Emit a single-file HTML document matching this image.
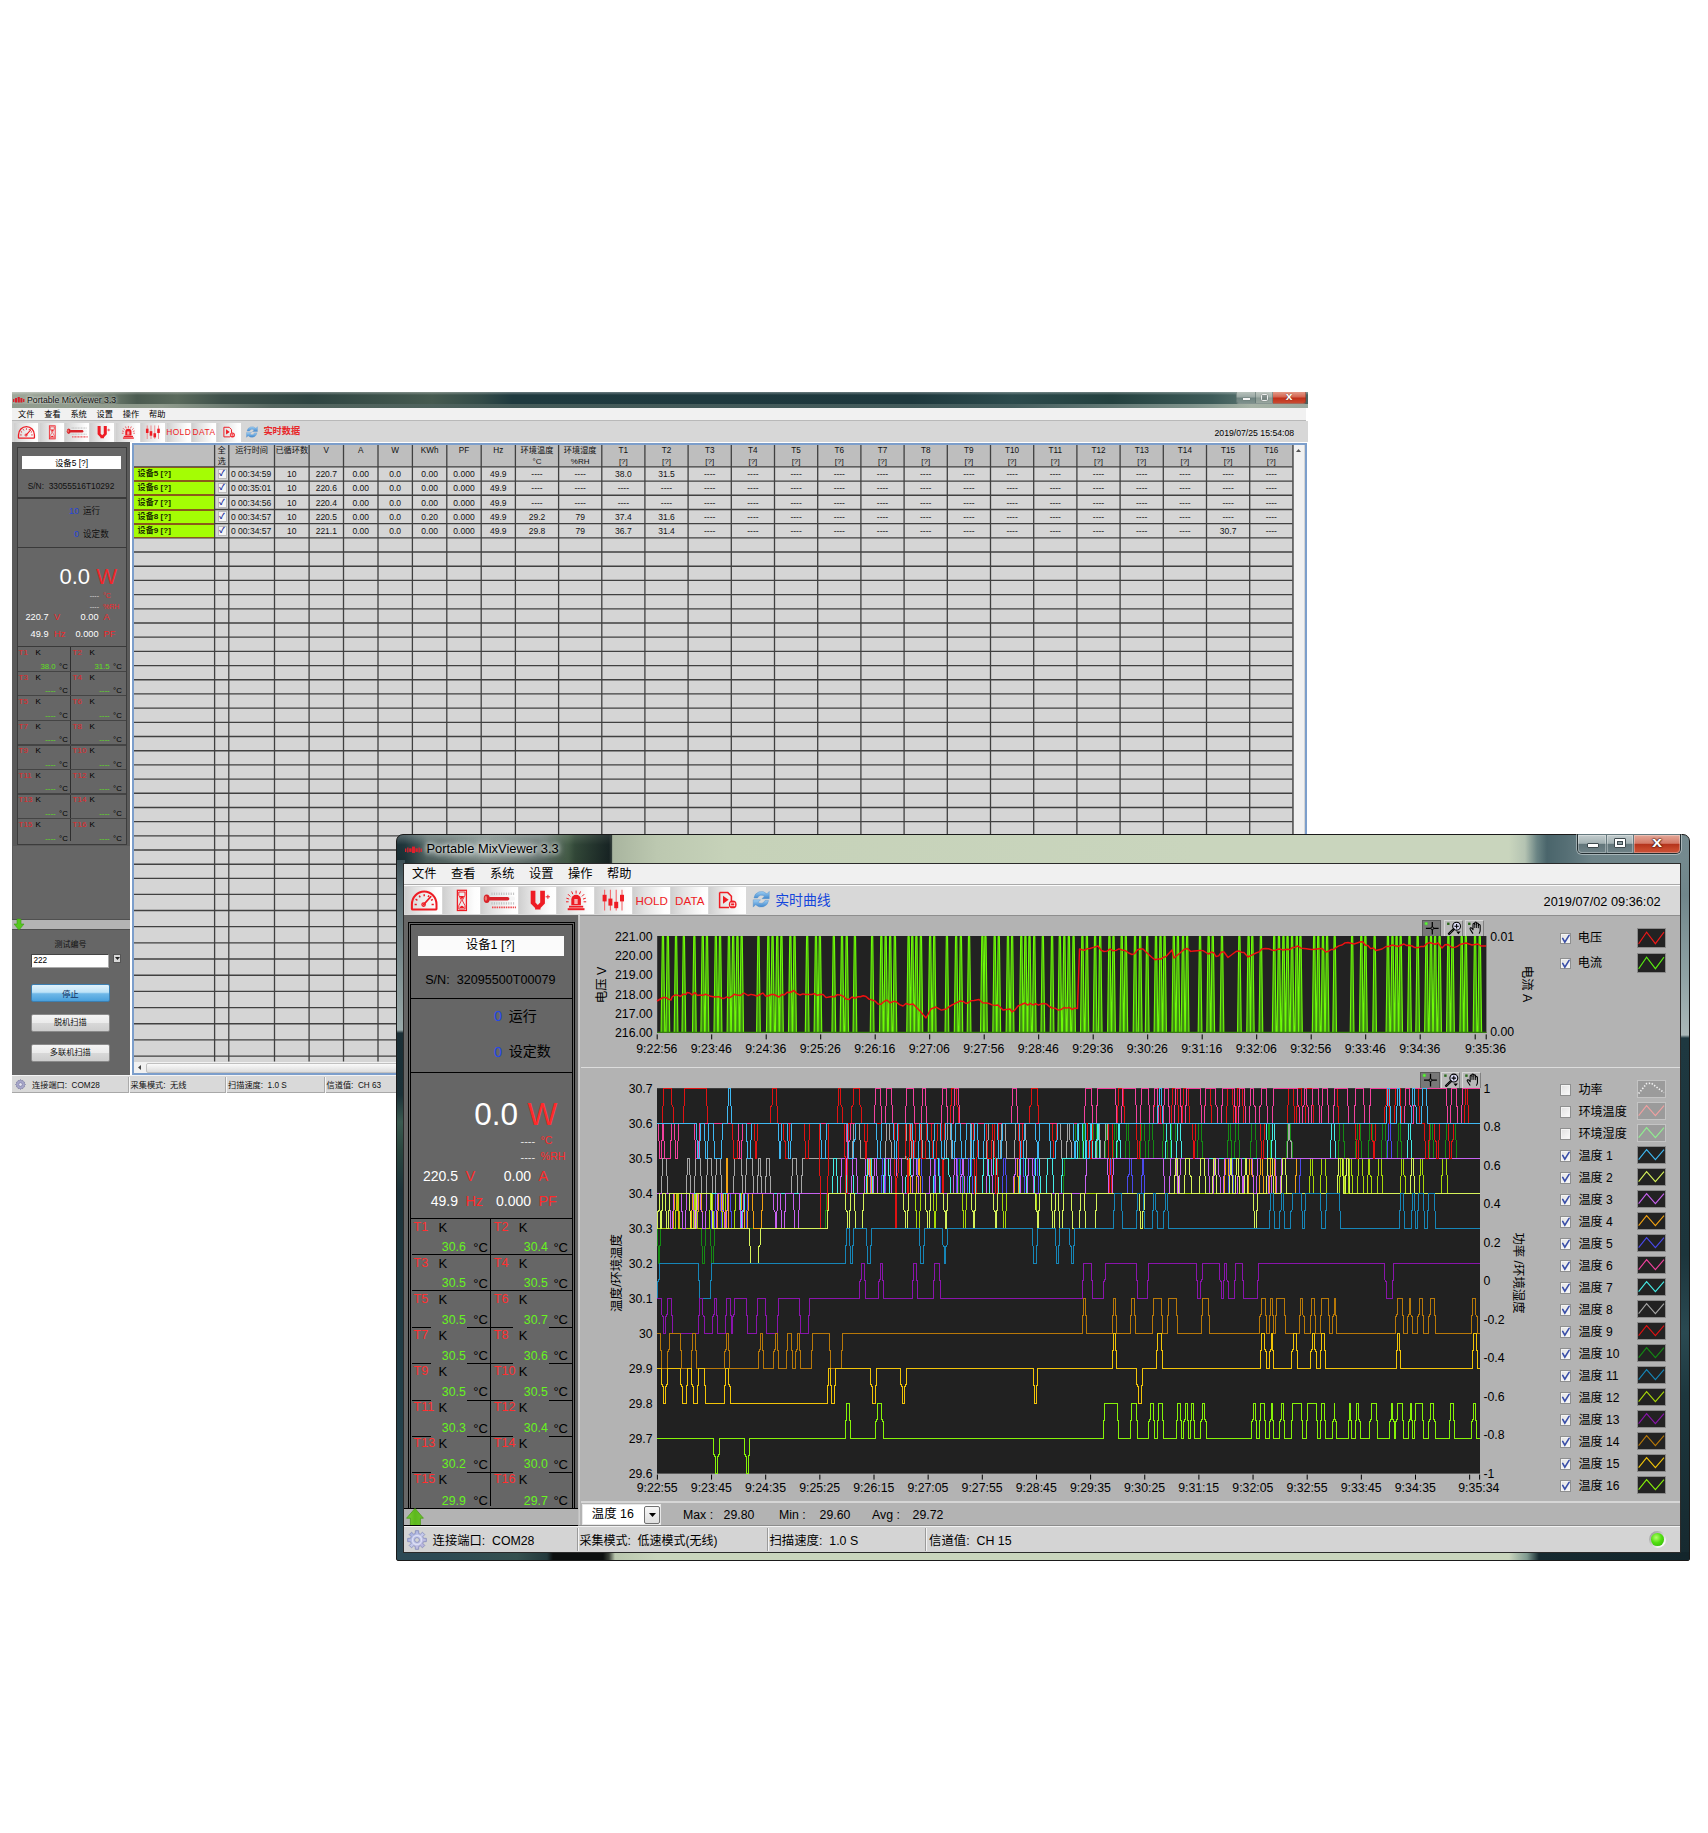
<!DOCTYPE html><html lang="zh"><head><meta charset="utf-8"><title>Portable MixViewer 3.3</title><style>

*{box-sizing:border-box;margin:0;padding:0}
html,body{width:1708px;height:1833px;background:#fff;overflow:hidden}
body{position:relative;font-family:"Liberation Sans","Noto Sans CJK SC",sans-serif;color:#000}
.a{position:absolute}
.t{position:absolute;white-space:nowrap;line-height:1}
.c{transform:translate(-50%,-50%)}
.l{transform:translate(0,-50%)}
.r{transform:translate(-100%,-50%)}
svg{position:absolute;overflow:visible}

</style></head><body>
<div id="back" class="a" style="left:0;top:0;width:1708px;height:1833px">
<div class="a" style="left:12px;top:392px;width:1295.5px;height:16px;background:linear-gradient(90deg,#a0a99b 0px,#8d978a 55px,#6c7a6c 100px,#4b5b50 125px,#5a6a5c 165px,#3e504a 210px,#2f4542 300px,#465a50 420px,#334b48 470px,#1f3a3f 500px,#1e383d 900px,#2c4a4c 1000px,#24413f 1100px,#3d5a58 1200px,#5a7470 1240px,#4a6260 1295px)"></div>
<div class="a" style="left:12px;top:392px;width:1295.5px;height:3px;background:linear-gradient(180deg,rgba(255,255,255,.35),rgba(255,255,255,0))"></div>
<svg style="left:13px;top:396px" width="12" height="8" viewBox="0 0 12 8"><g fill="#d8202c"><rect x="0" y="3" width="1.4" height="3"/><rect x="2" y="2" width="2" height="4.5"/><rect x="4.6" y="1" width="2.2" height="5.5"/><rect x="7.4" y="2" width="2" height="4.5"/><rect x="10" y="3" width="1.4" height="3"/></g></svg>
<span class="t l" style="left:27px;top:399.7px;font-size:8.7px;color:#111;text-shadow:0 0 3px rgba(255,255,255,.8),0 0 5px rgba(255,255,255,.6)">Portable MixViewer 3.3</span>
<div class="a" style="left:12px;top:403.6px;width:1295.5px;height:4.4px;background:linear-gradient(90deg,#8f9a8c 0px,#9aa596 150px,#5a6b64 260px,#4a5f5c 520px,#4a6262 1000px,#8a9c94 1180px,#b4beb0 1240px,#a8b4a8 1295px);opacity:.85"></div>
<div class="a" style="left:1236.4px;top:392px;width:19.2px;height:11.6px;background:linear-gradient(180deg,#b8c2bc 0%,#9aa8a4 45%,#6f8380 55%,#7d908c 100%);border:1px solid #52666480;border-top:0;border-radius:0 0 0 3px"></div>
<div class="a" style="left:1255.6px;top:392px;width:17.4px;height:11.6px;background:linear-gradient(180deg,#c0c8c2 0%,#a4b0aa 45%,#8a9a94 55%,#98a69e 100%);border:1px solid #52666480;border-top:0;border-left:0"></div>
<div class="a" style="left:1273px;top:392px;width:32.6px;height:11.6px;background:linear-gradient(180deg,#e39a88 0%,#d46450 45%,#c0301a 55%,#c84a30 100%);border:1px solid #6a3a3080;border-top:0;border-left:0;border-radius:0 0 3px 0"></div>
<div class="a" style="left:1242.6px;top:398px;width:7.4px;height:2.4px;background:#f4f4f4;box-shadow:0 0 1px #444"></div>
<div class="a" style="left:1260.6px;top:394.2px;width:7.4px;height:6.6px;border:1.7px solid #eee;border-radius:1.5px;box-shadow:0 0 1px #444;background:#66707080"></div>
<span class="t c" style="left:1289.4px;top:397.2px;font-size:10px;color:#fff;font-weight:bold;transform:translate(-50%,-50%) scale(1.2,1);text-shadow:0 0 1px #502018">x</span>
<div class="a" style="left:12px;top:408.2px;width:1294.1px;height:12.6px;background:#f1f1f1;border-bottom:1px solid #b8b8b8"></div>
<span class="t l" style="left:18px;top:414.9px;font-size:8.2px;color:#000;">文件</span>
<span class="t l" style="left:44.2px;top:414.9px;font-size:8.2px;color:#000;">查看</span>
<span class="t l" style="left:70.4px;top:414.9px;font-size:8.2px;color:#000;">系统</span>
<span class="t l" style="left:96.6px;top:414.9px;font-size:8.2px;color:#000;">设置</span>
<span class="t l" style="left:122.8px;top:414.9px;font-size:8.2px;color:#000;">操作</span>
<span class="t l" style="left:149px;top:414.9px;font-size:8.2px;color:#000;">帮助</span>
<div class="a" style="left:12px;top:420.6px;width:1295.5px;height:21.6px;background:#d7d7d7"></div>
<div class="a" style="left:14.4px;top:422.6px;width:24px;height:19px;background:linear-gradient(90deg,#cfcfcf 0%,#e2e2e2 30%,#fdfdfd 85%,#fff 100%)"></div>
<svg style="left:14.4px;top:422.6px" width="24" height="19" viewBox="0 0 37 27.3" preserveAspectRatio="xMidYMid meet"><path d="M6.9 21.9 V17.5 A11.6 12.3 0 0 1 31.5 17.5 V21.9 Q31.5 22.4 30.5 22.4 H7.9 Q6.9 22.4 6.9 21.9Z" fill="none" stroke="#ee1c24" stroke-width="2"/><path d="M18.6 17.6 L25.8 9.6" stroke="#ee1c24" stroke-width="1.6" stroke-linecap="round"/><circle cx="18.6" cy="17.6" r="1.7" fill="none" stroke="#ee1c24" stroke-width="1.3"/><path d="M9.6 17.4h2.2M10.6 12.2l1.8 1.1M14.2 8.6l1 1.8M19.2 7.2v2.1M24 8.3l-.9 1.7M27.8 12.3l-1.8 1.1M28.8 17.4h-2.2" stroke="#ee1c24" stroke-width="1.5" fill="none"/></svg>
<div class="a" style="left:39.75px;top:422.6px;width:24px;height:19px;background:linear-gradient(90deg,#cfcfcf 0%,#e2e2e2 30%,#fdfdfd 85%,#fff 100%)"></div>
<svg style="left:39.75px;top:422.6px" width="24" height="19" viewBox="0 0 37 27.3" preserveAspectRatio="xMidYMid meet"><rect x="14.4" y="3.3" width="9" height="20.2" fill="none" stroke="#ee1c24" stroke-width="1.3"/><path d="M15.8 5 h6.2 v3.2 l-2.4 4.6 v1.2 l2.4 4.6 v3.4 h-6.2 v-3.4 l2.4 -4.6 v-1.2 l-2.4 -4.6z" fill="none" stroke="#ee1c24" stroke-width=".9"/><path d="M16.6 9 h4.6 l-2.3 3.6z M16.4 21 q2.5 -4.6 5 0z" fill="#ee1c24"/></svg>
<div class="a" style="left:65.1px;top:422.6px;width:24px;height:19px;background:linear-gradient(90deg,#cfcfcf 0%,#e2e2e2 30%,#fdfdfd 85%,#fff 100%)"></div>
<svg style="left:65.1px;top:422.6px" width="24" height="19" viewBox="0 0 37 27.3" preserveAspectRatio="xMidYMid meet"><path d="M11 5.6v2.4M13.4 5.6v2.4M15.8 5.6v2.4M18.2 5.6v2.4M20.6 5.6v2.4M23 5.6v2.4M25.4 5.6v2.4M27.8 5.6v2.4M30.2 5.6v2.4M32.6 5.6v2.4M11 15.2v2.4M13.4 15.2v2.4M15.8 15.2v2.4M18.2 15.2v2.4M20.6 15.2v2.4M23 15.2v2.4M25.4 15.2v2.4M27.8 15.2v2.4M30.2 15.2v2.4M32.6 15.2v2.4" stroke="#b8b8b8" stroke-width=".9" fill="none"/><rect x="8" y="9.6" width="26" height="4.2" rx="2.1" fill="#f4f4f4"/><rect x="7" y="9.9" width="21.3" height="3.7" rx="1.8" fill="#d8232a"/><ellipse cx="5.7" cy="11.8" rx="3" ry="4.2" fill="#d8232a"/><ellipse cx="4.9" cy="11.4" rx="1.2" ry="2.4" fill="#ec7a70"/><path d="M11 20.3H35" stroke="#f0484e" stroke-width="1.8" stroke-dasharray="1.5 .8" fill="none"/></svg>
<div class="a" style="left:90.45px;top:422.6px;width:24px;height:19px;background:linear-gradient(90deg,#cfcfcf 0%,#e2e2e2 30%,#fdfdfd 85%,#fff 100%)"></div>
<svg style="left:90.45px;top:422.6px" width="24" height="19" viewBox="0 0 37 27.3" preserveAspectRatio="xMidYMid meet"><path d="M11.7 3.8 h4.7 v11.6 l2.4 2.6 l2.4 -2.6 V3.8 h4.7 V16.4 l-4.4 4.5 v1.6 h-5.4 v-1.6 L11.7 16.4z" fill="#ee1c24"/><path d="M26.6 9.8h4.4M28.9 7.8v4" stroke="#ee1c24" stroke-width="1" fill="none"/></svg>
<div class="a" style="left:115.8px;top:422.6px;width:24px;height:19px;background:linear-gradient(90deg,#cfcfcf 0%,#e2e2e2 30%,#fdfdfd 85%,#fff 100%)"></div>
<svg style="left:115.8px;top:422.6px" width="24" height="19" viewBox="0 0 37 27.3" preserveAspectRatio="xMidYMid meet"><path d="M14.3 18.2 v-5.6 a4.8 4.8 0 0 1 9.6 0 v5.6z" fill="#ee1c24"/><rect x="17.3" y="12" width="3.4" height="5" fill="#f8b0b0"/><rect x="12" y="18.8" width="14.2" height="1.8" fill="#ee1c24"/><rect x="10.7" y="21.2" width="16.8" height="2" fill="#ee1c24"/><path d="M19.1 3.6v3M14.6 4.4l1.2 2.8M23.6 4.4l-1.2 2.8M11 7.2l2.2 2.2M27.2 7.2l-2.2 2.2M9.4 11.2l2.8 .9M28.8 11.2l-2.8 .9M9 14.8h2.6M29.2 14.8h-2.6" stroke="#ee1c24" stroke-width="1" fill="none"/></svg>
<div class="a" style="left:141.15px;top:422.6px;width:24px;height:19px;background:linear-gradient(90deg,#cfcfcf 0%,#e2e2e2 30%,#fdfdfd 85%,#fff 100%)"></div>
<svg style="left:141.15px;top:422.6px" width="24" height="19" viewBox="0 0 37 27.3" preserveAspectRatio="xMidYMid meet"><path d="M9.6 2.8v20.8M15.4 2.8v20.8M21.2 2.8v20.8M27 2.8v20.8" stroke="#f4686c" stroke-width="1.1" fill="none"/><rect x="7.6" y="7.8" width="4" height="6.6" fill="#ee1c24"/><rect x="13.4" y="11.6" width="4" height="7" fill="#ee1c24"/><rect x="19.2" y="14.8" width="4" height="6.4" fill="#ee1c24"/><rect x="25" y="7.8" width="4" height="6.6" fill="#ee1c24"/></svg>
<div class="a" style="left:166.5px;top:422.6px;width:24px;height:19px;background:linear-gradient(90deg,#cfcfcf 0%,#e2e2e2 30%,#fdfdfd 85%,#fff 100%)"></div>
<span class="t c" style="left:178.7px;top:432.4px;font-size:8.4px;color:#ee1c24;letter-spacing:0.45px">HOLD</span>
<div class="a" style="left:191.85px;top:422.6px;width:24px;height:19px;background:linear-gradient(90deg,#cfcfcf 0%,#e2e2e2 30%,#fdfdfd 85%,#fff 100%)"></div>
<span class="t c" style="left:204.05px;top:432.4px;font-size:8.4px;color:#ee1c24;letter-spacing:0.45px">DATA</span>
<div class="a" style="left:217.2px;top:422.6px;width:24px;height:19px;background:linear-gradient(90deg,#cfcfcf 0%,#e2e2e2 30%,#fdfdfd 85%,#fff 100%)"></div>
<svg style="left:217.2px;top:422.6px" width="24" height="19" viewBox="0 0 37 27.3" preserveAspectRatio="xMidYMid meet"><path d="M10.6 5.6 h8.2 l3.6 3.6 v5 M10.6 5.6 v14.8 h9.4" fill="none" stroke="#ee1c24" stroke-width="1.5"/><path d="M14 8.8 l5.6 4 l-5.6 4z" fill="#ee1c24"/><circle cx="23.7" cy="17.4" r="3.9" fill="#ee1c24"/><rect x="21.7" y="16" width="4" height="2.8" fill="none" stroke="#fff" stroke-width=".8"/></svg>
<svg style="left:244.75px;top:424.9px" width="14" height="14" viewBox="0 0 22 22"><defs><linearGradient id="rg1" x1="0" y1="0" x2="0" y2="1"><stop offset="0" stop-color="#9fd0f4"/><stop offset="1" stop-color="#3f86cc"/></linearGradient></defs><path d="M3.2 9.6 A8 8 0 0 1 17 5.2 L19.6 2.6 V10.4 H11.8 L14.4 7.8 A4.6 4.6 0 0 0 7 9.6z" fill="url(#rg1)" stroke="#5a94cc" stroke-width=".5"/><path d="M18.8 12.4 A8 8 0 0 1 5 16.8 L2.4 19.4 V11.6 H10.2 L7.6 14.2 A4.6 4.6 0 0 0 15 12.4z" fill="url(#rg1)" stroke="#5a94cc" stroke-width=".5"/></svg>
<span class="t l" style="left:263.4px;top:432.4px;font-size:9.2px;color:#e8262a;font-weight:bold">实时数据</span>
<span class="t r" style="left:1294.2px;top:432.7px;font-size:8.7px;color:#000;">2019/07/25 15:54:08</span>
<div class="a" style="left:12px;top:442.2px;width:118px;height:476.8px;background:#5a5a5a"></div>
<div class="a" style="left:17.2px;top:447.4px;width:109.6px;height:398px;background:#666;border:1px solid #3c3c3c"></div>
<div class="a" style="left:13px;top:846px;width:116.5px;height:73px;background:#666"></div>
<div class="a" style="left:22.3px;top:456.2px;width:98.4px;height:13.2px;background:#fff"></div>
<span class="t c" style="left:71.5px;top:463px;font-size:8.4px;color:#000;">设备5 [?]</span>
<span class="t c" style="left:71px;top:485.8px;font-size:8.4px;color:#111;">S/N:&nbsp; 33055516T10292</span>
<div class="a" style="left:17.2px;top:497.4px;width:109.6px;height:1.2px;background:#3a3a3a"></div>
<span class="t r" style="left:79px;top:510.6px;font-size:9px;color:#2545d8;">10</span>
<span class="t l" style="left:83px;top:510.6px;font-size:8.6px;color:#111;">运行</span>
<span class="t r" style="left:79px;top:534.2px;font-size:9px;color:#2545d8;">0</span>
<span class="t l" style="left:83px;top:534.2px;font-size:8.6px;color:#111;">设定数</span>
<div class="a" style="left:17.2px;top:547.2px;width:109.6px;height:1.2px;background:#3a3a3a"></div>
<span class="t r" style="left:90px;top:577px;font-size:22px;color:#fff;">0.0</span>
<span class="t l" style="left:96.2px;top:577px;font-size:22px;color:#f0262a;">W</span>
<span class="t r" style="left:99px;top:595.3px;font-size:7px;color:#ddd;">----</span>
<span class="t l" style="left:103px;top:594.6px;font-size:7px;color:#f0262a;">°C</span>
<span class="t r" style="left:99px;top:606px;font-size:7px;color:#ddd;">----</span>
<span class="t l" style="left:103px;top:605.5px;font-size:7px;color:#f0262a;">%RH</span>
<span class="t r" style="left:48.5px;top:618.3px;font-size:9.2px;color:#fff;">220.7</span>
<span class="t l" style="left:54px;top:618.3px;font-size:9.2px;color:#f0262a;">V</span>
<span class="t r" style="left:98.5px;top:618.3px;font-size:9.2px;color:#fff;">0.00</span>
<span class="t l" style="left:103.5px;top:618.3px;font-size:9.2px;color:#f0262a;">A</span>
<span class="t r" style="left:48.5px;top:635.4px;font-size:9.2px;color:#fff;">49.9</span>
<span class="t l" style="left:54px;top:635.4px;font-size:9.2px;color:#f0262a;">Hz</span>
<span class="t r" style="left:98.5px;top:635.4px;font-size:9.2px;color:#fff;">0.000</span>
<span class="t l" style="left:103.5px;top:635.4px;font-size:9.2px;color:#f0262a;">PF</span>
<div class="a" style="left:17.2px;top:646.2px;width:109.6px;height:1.2px;background:#3a3a3a"></div>
<div class="a" style="left:70px;top:646.8px;width:1.2px;height:194.24px;background:#2e2e2e"></div>
<span class="t l" style="left:18.6px;top:653.1px;font-size:8px;color:#e0262a;">T1</span>
<span class="t l" style="left:35.6px;top:653.1px;font-size:8px;color:#000;">K</span>
<span class="t r" style="left:55.6px;top:666.8px;font-size:7.8px;color:#5fe020;">38.0</span>
<span class="t l" style="left:59.1px;top:666.8px;font-size:7.8px;color:#000;">°C</span>
<span class="t l" style="left:72.6px;top:653.1px;font-size:8px;color:#e0262a;">T2</span>
<span class="t l" style="left:89.6px;top:653.1px;font-size:8px;color:#000;">K</span>
<span class="t r" style="left:109.6px;top:666.8px;font-size:7.8px;color:#5fe020;">31.5</span>
<span class="t l" style="left:113.1px;top:666.8px;font-size:7.8px;color:#000;">°C</span>
<div class="a" style="left:18px;top:670.73px;width:108px;height:1.2px;background:#444"></div>
<span class="t l" style="left:18.6px;top:677.63px;font-size:8px;color:#e0262a;">T3</span>
<span class="t l" style="left:35.6px;top:677.63px;font-size:8px;color:#000;">K</span>
<span class="t r" style="left:55.6px;top:691.33px;font-size:7.8px;color:#5fe020;">----</span>
<span class="t l" style="left:59.1px;top:691.33px;font-size:7.8px;color:#000;">°C</span>
<span class="t l" style="left:72.6px;top:677.63px;font-size:8px;color:#e0262a;">T4</span>
<span class="t l" style="left:89.6px;top:677.63px;font-size:8px;color:#000;">K</span>
<span class="t r" style="left:109.6px;top:691.33px;font-size:7.8px;color:#5fe020;">----</span>
<span class="t l" style="left:113.1px;top:691.33px;font-size:7.8px;color:#000;">°C</span>
<div class="a" style="left:18px;top:695.26px;width:108px;height:1.2px;background:#444"></div>
<span class="t l" style="left:18.6px;top:702.16px;font-size:8px;color:#e0262a;">T5</span>
<span class="t l" style="left:35.6px;top:702.16px;font-size:8px;color:#000;">K</span>
<span class="t r" style="left:55.6px;top:715.86px;font-size:7.8px;color:#5fe020;">----</span>
<span class="t l" style="left:59.1px;top:715.86px;font-size:7.8px;color:#000;">°C</span>
<span class="t l" style="left:72.6px;top:702.16px;font-size:8px;color:#e0262a;">T6</span>
<span class="t l" style="left:89.6px;top:702.16px;font-size:8px;color:#000;">K</span>
<span class="t r" style="left:109.6px;top:715.86px;font-size:7.8px;color:#5fe020;">----</span>
<span class="t l" style="left:113.1px;top:715.86px;font-size:7.8px;color:#000;">°C</span>
<div class="a" style="left:18px;top:719.79px;width:108px;height:1.2px;background:#444"></div>
<span class="t l" style="left:18.6px;top:726.69px;font-size:8px;color:#e0262a;">T7</span>
<span class="t l" style="left:35.6px;top:726.69px;font-size:8px;color:#000;">K</span>
<span class="t r" style="left:55.6px;top:740.39px;font-size:7.8px;color:#5fe020;">----</span>
<span class="t l" style="left:59.1px;top:740.39px;font-size:7.8px;color:#000;">°C</span>
<span class="t l" style="left:72.6px;top:726.69px;font-size:8px;color:#e0262a;">T8</span>
<span class="t l" style="left:89.6px;top:726.69px;font-size:8px;color:#000;">K</span>
<span class="t r" style="left:109.6px;top:740.39px;font-size:7.8px;color:#5fe020;">----</span>
<span class="t l" style="left:113.1px;top:740.39px;font-size:7.8px;color:#000;">°C</span>
<div class="a" style="left:18px;top:744.32px;width:108px;height:1.2px;background:#444"></div>
<span class="t l" style="left:18.6px;top:751.22px;font-size:8px;color:#e0262a;">T9</span>
<span class="t l" style="left:35.6px;top:751.22px;font-size:8px;color:#000;">K</span>
<span class="t r" style="left:55.6px;top:764.92px;font-size:7.8px;color:#5fe020;">----</span>
<span class="t l" style="left:59.1px;top:764.92px;font-size:7.8px;color:#000;">°C</span>
<span class="t l" style="left:72.6px;top:751.22px;font-size:8px;color:#e0262a;">T10</span>
<span class="t l" style="left:89.6px;top:751.22px;font-size:8px;color:#000;">K</span>
<span class="t r" style="left:109.6px;top:764.92px;font-size:7.8px;color:#5fe020;">----</span>
<span class="t l" style="left:113.1px;top:764.92px;font-size:7.8px;color:#000;">°C</span>
<div class="a" style="left:18px;top:768.85px;width:108px;height:1.2px;background:#444"></div>
<span class="t l" style="left:18.6px;top:775.75px;font-size:8px;color:#e0262a;">T11</span>
<span class="t l" style="left:35.6px;top:775.75px;font-size:8px;color:#000;">K</span>
<span class="t r" style="left:55.6px;top:789.45px;font-size:7.8px;color:#5fe020;">----</span>
<span class="t l" style="left:59.1px;top:789.45px;font-size:7.8px;color:#000;">°C</span>
<span class="t l" style="left:72.6px;top:775.75px;font-size:8px;color:#e0262a;">T12</span>
<span class="t l" style="left:89.6px;top:775.75px;font-size:8px;color:#000;">K</span>
<span class="t r" style="left:109.6px;top:789.45px;font-size:7.8px;color:#5fe020;">----</span>
<span class="t l" style="left:113.1px;top:789.45px;font-size:7.8px;color:#000;">°C</span>
<div class="a" style="left:18px;top:793.38px;width:108px;height:1.2px;background:#444"></div>
<span class="t l" style="left:18.6px;top:800.28px;font-size:8px;color:#e0262a;">T13</span>
<span class="t l" style="left:35.6px;top:800.28px;font-size:8px;color:#000;">K</span>
<span class="t r" style="left:55.6px;top:813.98px;font-size:7.8px;color:#5fe020;">----</span>
<span class="t l" style="left:59.1px;top:813.98px;font-size:7.8px;color:#000;">°C</span>
<span class="t l" style="left:72.6px;top:800.28px;font-size:8px;color:#e0262a;">T14</span>
<span class="t l" style="left:89.6px;top:800.28px;font-size:8px;color:#000;">K</span>
<span class="t r" style="left:109.6px;top:813.98px;font-size:7.8px;color:#5fe020;">----</span>
<span class="t l" style="left:113.1px;top:813.98px;font-size:7.8px;color:#000;">°C</span>
<div class="a" style="left:18px;top:817.91px;width:108px;height:1.2px;background:#444"></div>
<span class="t l" style="left:18.6px;top:824.81px;font-size:8px;color:#e0262a;">T15</span>
<span class="t l" style="left:35.6px;top:824.81px;font-size:8px;color:#000;">K</span>
<span class="t r" style="left:55.6px;top:838.51px;font-size:7.8px;color:#5fe020;">----</span>
<span class="t l" style="left:59.1px;top:838.51px;font-size:7.8px;color:#000;">°C</span>
<span class="t l" style="left:72.6px;top:824.81px;font-size:8px;color:#e0262a;">T16</span>
<span class="t l" style="left:89.6px;top:824.81px;font-size:8px;color:#000;">K</span>
<span class="t r" style="left:109.6px;top:838.51px;font-size:7.8px;color:#5fe020;">----</span>
<span class="t l" style="left:113.1px;top:838.51px;font-size:7.8px;color:#000;">°C</span>
<div class="a" style="left:12px;top:919px;width:118px;height:11px;background:#b4b4b4;border-top:1px solid #505050;border-bottom:1px solid #505050"></div>
<svg style="left:14px;top:918.5px" width="10" height="11" viewBox="0 0 10 11"><path d="M3 0h4v5h3l-5 6-5-6h3z" fill="#55c81e" stroke="#3a9a10" stroke-width=".6"/></svg>
<div class="a" style="left:12px;top:930px;width:118px;height:145px;background:#666"></div>
<span class="t c" style="left:70.5px;top:945.3px;font-size:8px;color:#111;">测试编号</span>
<div class="a" style="left:30.5px;top:953.6px;width:78px;height:14.4px;background:#fff;border:1.2px solid #444;border-right-color:#aaa;border-bottom-color:#aaa"></div>
<span class="t l" style="left:33.5px;top:961.4px;font-size:8.2px;color:#000;">222</span>
<div class="a" style="left:112.5px;top:953.8px;width:8.6px;height:9px;background:#d8d8d8;border:1px solid #555"></div>
<svg style="left:114.5px;top:957px" width="5" height="3" viewBox="0 0 5 3"><path d="M0 0h5L2.5 3z" fill="#222"/></svg>
<div class="a" style="left:30.6px;top:983.8px;width:79px;height:18px;background:linear-gradient(180deg,#dff1fb 0%,#bfe3f7 45%,#6fb8e8 55%,#4aa0dc 100%);border:1px solid #3c7fb1;border-radius:2px"></div>
<span class="t c" style="left:70.3px;top:993.6px;font-size:8.4px;color:#103060;">停止</span>
<div class="a" style="left:30.6px;top:1013.5px;width:79px;height:18px;background:linear-gradient(180deg,#f4f4f4 0%,#ebebeb 48%,#d8d8d8 52%,#cdcdcd 100%);border:1px solid #8a8a8a;border-radius:2px"></div>
<span class="t c" style="left:70.3px;top:1023.1px;font-size:8.2px;color:#111;">脱机扫描</span>
<div class="a" style="left:30.6px;top:1043.6px;width:79px;height:18px;background:linear-gradient(180deg,#f4f4f4 0%,#ebebeb 48%,#d8d8d8 52%,#cdcdcd 100%);border:1px solid #8a8a8a;border-radius:2px"></div>
<span class="t c" style="left:70.3px;top:1053.2px;font-size:8.2px;color:#111;">多联机扫描</span>
<div class="a" style="left:131.6px;top:442.6px;width:1175.3px;height:632.6px;background:#d5d5d5;border:2.4px solid #7c9ecb"></div>
<div class="a" style="left:134px;top:445px;width:1159px;height:22px;background:#bebebe"></div>
<div class="a" style="left:1293.2px;top:445px;width:11.3px;height:616.8px;background:#f1f1f1"></div>
<svg style="left:1296.3px;top:449px" width="5" height="3" viewBox="0 0 5 3"><path d="M0 3h5L2.5 0z" fill="#555"/></svg>
<div class="a" style="left:134px;top:1061.8px;width:1170.5px;height:11px;background:#f1f1f1"></div>
<div class="a" style="left:146px;top:1063px;width:1158px;height:9.6px;background:linear-gradient(180deg,#fafafa,#dcdcdc);border:1px solid #c0c0c0;border-radius:2px"></div>
<svg style="left:137.5px;top:1065px" width="3" height="5" viewBox="0 0 3 5"><path d="M3 0v5L0 2.5z" fill="#444"/></svg>
<svg style="left:0;top:0" width="1708" height="1833"><path d="M134 466.9H1293M134 481.09H1293M134 495.28H1293M134 509.47H1293M134 523.66H1293M134 537.85H1293M134 552.04H1293M134 566.23H1293M134 580.42H1293M134 594.61H1293M134 608.8H1293M134 622.99H1293M134 637.18H1293M134 651.37H1293M134 665.56H1293M134 679.75H1293M134 693.94H1293M134 708.13H1293M134 722.32H1293M134 736.51H1293M134 750.7H1293M134 764.89H1293M134 779.08H1293M134 793.27H1293M134 807.46H1293M134 821.65H1293M134 835.84H1293M134 850.03H1293M134 864.22H1293M134 878.41H1293M134 894.3H1293M134 910.48H1293M134 926.66H1293M134 942.84H1293M134 959.02H1293M134 975.2H1293M134 991.38H1293M134 1007.56H1293M134 1023.74H1293M134 1039.92H1293M134 1056.1H1293" stroke="#404040" stroke-width="1.35" fill="none"/><path d="M214.6 445V1061.6M228.8 445V1061.6M274.5 445V1061.6M309.1 445V1061.6M343.5 445V1061.6M378 445V1061.6M412.4 445V1061.6M446.8 445V1061.6M481.2 445V1061.6M515.4 445V1061.6M558.6 445V1061.6M601.8 445V1061.6M644.9 445V1061.6M688.1 445V1061.6M731.3 445V1061.6M774.5 445V1061.6M817.7 445V1061.6M860.9 445V1061.6M904.1 445V1061.6M947.3 445V1061.6M990.5 445V1061.6M1033.7 445V1061.6M1076.9 445V1061.6M1120.1 445V1061.6M1163.3 445V1061.6M1206.5 445V1061.6M1249.7 445V1061.6M1292.9 445V1061.6" stroke="#404040" stroke-width="1.3" fill="none"/><path d="M1293 445V1061.6" stroke="#666" stroke-width="1" fill="none"/></svg>
<span class="t c" style="left:221.7px;top:450.8px;font-size:8.2px;color:#111;">全</span>
<span class="t c" style="left:221.7px;top:461.6px;font-size:8px;color:#111;">选</span>
<span class="t c" style="left:251.65px;top:450.8px;font-size:8.2px;color:#111;">运行时间</span>
<span class="t c" style="left:291.8px;top:450.8px;font-size:8.2px;color:#111;">已循环数</span>
<span class="t c" style="left:326.3px;top:450.8px;font-size:8.2px;color:#111;">V</span>
<span class="t c" style="left:360.75px;top:450.8px;font-size:8.2px;color:#111;">A</span>
<span class="t c" style="left:395.2px;top:450.8px;font-size:8.2px;color:#111;">W</span>
<span class="t c" style="left:429.6px;top:450.8px;font-size:8.2px;color:#111;">KWh</span>
<span class="t c" style="left:464px;top:450.8px;font-size:8.2px;color:#111;">PF</span>
<span class="t c" style="left:498.3px;top:450.8px;font-size:8.2px;color:#111;">Hz</span>
<span class="t c" style="left:537px;top:450.8px;font-size:8.2px;color:#111;">环境温度</span>
<span class="t c" style="left:537px;top:461.6px;font-size:8px;color:#111;">°C</span>
<span class="t c" style="left:580.2px;top:450.8px;font-size:8.2px;color:#111;">环境湿度</span>
<span class="t c" style="left:580.2px;top:461.6px;font-size:8px;color:#111;">%RH</span>
<span class="t c" style="left:623.35px;top:450.8px;font-size:8.2px;color:#111;">T1</span>
<span class="t c" style="left:623.35px;top:461.6px;font-size:8px;color:#111;">[?]</span>
<span class="t c" style="left:666.5px;top:450.8px;font-size:8.2px;color:#111;">T2</span>
<span class="t c" style="left:666.5px;top:461.6px;font-size:8px;color:#111;">[?]</span>
<span class="t c" style="left:709.7px;top:450.8px;font-size:8.2px;color:#111;">T3</span>
<span class="t c" style="left:709.7px;top:461.6px;font-size:8px;color:#111;">[?]</span>
<span class="t c" style="left:752.9px;top:450.8px;font-size:8.2px;color:#111;">T4</span>
<span class="t c" style="left:752.9px;top:461.6px;font-size:8px;color:#111;">[?]</span>
<span class="t c" style="left:796.1px;top:450.8px;font-size:8.2px;color:#111;">T5</span>
<span class="t c" style="left:796.1px;top:461.6px;font-size:8px;color:#111;">[?]</span>
<span class="t c" style="left:839.3px;top:450.8px;font-size:8.2px;color:#111;">T6</span>
<span class="t c" style="left:839.3px;top:461.6px;font-size:8px;color:#111;">[?]</span>
<span class="t c" style="left:882.5px;top:450.8px;font-size:8.2px;color:#111;">T7</span>
<span class="t c" style="left:882.5px;top:461.6px;font-size:8px;color:#111;">[?]</span>
<span class="t c" style="left:925.7px;top:450.8px;font-size:8.2px;color:#111;">T8</span>
<span class="t c" style="left:925.7px;top:461.6px;font-size:8px;color:#111;">[?]</span>
<span class="t c" style="left:968.9px;top:450.8px;font-size:8.2px;color:#111;">T9</span>
<span class="t c" style="left:968.9px;top:461.6px;font-size:8px;color:#111;">[?]</span>
<span class="t c" style="left:1012.1px;top:450.8px;font-size:8.2px;color:#111;">T10</span>
<span class="t c" style="left:1012.1px;top:461.6px;font-size:8px;color:#111;">[?]</span>
<span class="t c" style="left:1055.3px;top:450.8px;font-size:8.2px;color:#111;">T11</span>
<span class="t c" style="left:1055.3px;top:461.6px;font-size:8px;color:#111;">[?]</span>
<span class="t c" style="left:1098.5px;top:450.8px;font-size:8.2px;color:#111;">T12</span>
<span class="t c" style="left:1098.5px;top:461.6px;font-size:8px;color:#111;">[?]</span>
<span class="t c" style="left:1141.7px;top:450.8px;font-size:8.2px;color:#111;">T13</span>
<span class="t c" style="left:1141.7px;top:461.6px;font-size:8px;color:#111;">[?]</span>
<span class="t c" style="left:1184.9px;top:450.8px;font-size:8.2px;color:#111;">T14</span>
<span class="t c" style="left:1184.9px;top:461.6px;font-size:8px;color:#111;">[?]</span>
<span class="t c" style="left:1228.1px;top:450.8px;font-size:8.2px;color:#111;">T15</span>
<span class="t c" style="left:1228.1px;top:461.6px;font-size:8px;color:#111;">[?]</span>
<span class="t c" style="left:1271.3px;top:450.8px;font-size:8.2px;color:#111;">T16</span>
<span class="t c" style="left:1271.3px;top:461.6px;font-size:8px;color:#111;">[?]</span>
<div class="a" style="left:134px;top:467.1px;width:80px;height:14.2px;background:#a4fd04;border-top:1.1px solid #8a5a1a;border-bottom:1.1px solid #8a5a1a"></div>
<span class="t l" style="left:137.6px;top:474.2px;font-size:8.1px;color:#1a2a00;font-weight:bold">设备5 [?]</span>
<div class="a" style="left:217.5px;top:468.9px;width:9px;height:10.4px;background:#f4f4f4;border:1px solid #bbb"></div>
<span class="t c" style="left:222px;top:474.2px;font-size:8px;color:#1a2a9a;font-weight:bold">✓</span>
<span class="t l" style="left:231px;top:474.2px;font-size:8.5px;color:#111;">0 00:34:59</span>
<span class="t c" style="left:291.8px;top:474.2px;font-size:8.5px;color:#111;">10</span>
<span class="t c" style="left:326.3px;top:474.2px;font-size:8.5px;color:#111;">220.7</span>
<span class="t c" style="left:360.75px;top:474.2px;font-size:8.5px;color:#111;">0.00</span>
<span class="t c" style="left:395.2px;top:474.2px;font-size:8.5px;color:#111;">0.0</span>
<span class="t c" style="left:429.6px;top:474.2px;font-size:8.5px;color:#111;">0.00</span>
<span class="t c" style="left:464px;top:474.2px;font-size:8.5px;color:#111;">0.000</span>
<span class="t c" style="left:498.3px;top:474.2px;font-size:8.5px;color:#111;">49.9</span>
<span class="t c" style="left:537px;top:474.2px;font-size:8.5px;color:#111;">----</span>
<span class="t c" style="left:580.2px;top:474.2px;font-size:8.5px;color:#111;">----</span>
<span class="t c" style="left:623.35px;top:474.2px;font-size:8.5px;color:#111;">38.0</span>
<span class="t c" style="left:666.5px;top:474.2px;font-size:8.5px;color:#111;">31.5</span>
<span class="t c" style="left:709.7px;top:474.2px;font-size:8.5px;color:#111;">----</span>
<span class="t c" style="left:752.9px;top:474.2px;font-size:8.5px;color:#111;">----</span>
<span class="t c" style="left:796.1px;top:474.2px;font-size:8.5px;color:#111;">----</span>
<span class="t c" style="left:839.3px;top:474.2px;font-size:8.5px;color:#111;">----</span>
<span class="t c" style="left:882.5px;top:474.2px;font-size:8.5px;color:#111;">----</span>
<span class="t c" style="left:925.7px;top:474.2px;font-size:8.5px;color:#111;">----</span>
<span class="t c" style="left:968.9px;top:474.2px;font-size:8.5px;color:#111;">----</span>
<span class="t c" style="left:1012.1px;top:474.2px;font-size:8.5px;color:#111;">----</span>
<span class="t c" style="left:1055.3px;top:474.2px;font-size:8.5px;color:#111;">----</span>
<span class="t c" style="left:1098.5px;top:474.2px;font-size:8.5px;color:#111;">----</span>
<span class="t c" style="left:1141.7px;top:474.2px;font-size:8.5px;color:#111;">----</span>
<span class="t c" style="left:1184.9px;top:474.2px;font-size:8.5px;color:#111;">----</span>
<span class="t c" style="left:1228.1px;top:474.2px;font-size:8.5px;color:#111;">----</span>
<span class="t c" style="left:1271.3px;top:474.2px;font-size:8.5px;color:#111;">----</span>
<div class="a" style="left:134px;top:481.29px;width:80px;height:14.2px;background:#a4fd04;border-top:1.1px solid #8a5a1a;border-bottom:1.1px solid #8a5a1a"></div>
<span class="t l" style="left:137.6px;top:488.39px;font-size:8.1px;color:#1a2a00;font-weight:bold">设备6 [?]</span>
<div class="a" style="left:217.5px;top:483.09px;width:9px;height:10.4px;background:#f4f4f4;border:1px solid #bbb"></div>
<span class="t c" style="left:222px;top:488.39px;font-size:8px;color:#1a2a9a;font-weight:bold">✓</span>
<span class="t l" style="left:231px;top:488.39px;font-size:8.5px;color:#111;">0 00:35:01</span>
<span class="t c" style="left:291.8px;top:488.39px;font-size:8.5px;color:#111;">10</span>
<span class="t c" style="left:326.3px;top:488.39px;font-size:8.5px;color:#111;">220.6</span>
<span class="t c" style="left:360.75px;top:488.39px;font-size:8.5px;color:#111;">0.00</span>
<span class="t c" style="left:395.2px;top:488.39px;font-size:8.5px;color:#111;">0.0</span>
<span class="t c" style="left:429.6px;top:488.39px;font-size:8.5px;color:#111;">0.00</span>
<span class="t c" style="left:464px;top:488.39px;font-size:8.5px;color:#111;">0.000</span>
<span class="t c" style="left:498.3px;top:488.39px;font-size:8.5px;color:#111;">49.9</span>
<span class="t c" style="left:537px;top:488.39px;font-size:8.5px;color:#111;">----</span>
<span class="t c" style="left:580.2px;top:488.39px;font-size:8.5px;color:#111;">----</span>
<span class="t c" style="left:623.35px;top:488.39px;font-size:8.5px;color:#111;">----</span>
<span class="t c" style="left:666.5px;top:488.39px;font-size:8.5px;color:#111;">----</span>
<span class="t c" style="left:709.7px;top:488.39px;font-size:8.5px;color:#111;">----</span>
<span class="t c" style="left:752.9px;top:488.39px;font-size:8.5px;color:#111;">----</span>
<span class="t c" style="left:796.1px;top:488.39px;font-size:8.5px;color:#111;">----</span>
<span class="t c" style="left:839.3px;top:488.39px;font-size:8.5px;color:#111;">----</span>
<span class="t c" style="left:882.5px;top:488.39px;font-size:8.5px;color:#111;">----</span>
<span class="t c" style="left:925.7px;top:488.39px;font-size:8.5px;color:#111;">----</span>
<span class="t c" style="left:968.9px;top:488.39px;font-size:8.5px;color:#111;">----</span>
<span class="t c" style="left:1012.1px;top:488.39px;font-size:8.5px;color:#111;">----</span>
<span class="t c" style="left:1055.3px;top:488.39px;font-size:8.5px;color:#111;">----</span>
<span class="t c" style="left:1098.5px;top:488.39px;font-size:8.5px;color:#111;">----</span>
<span class="t c" style="left:1141.7px;top:488.39px;font-size:8.5px;color:#111;">----</span>
<span class="t c" style="left:1184.9px;top:488.39px;font-size:8.5px;color:#111;">----</span>
<span class="t c" style="left:1228.1px;top:488.39px;font-size:8.5px;color:#111;">----</span>
<span class="t c" style="left:1271.3px;top:488.39px;font-size:8.5px;color:#111;">----</span>
<div class="a" style="left:134px;top:495.48px;width:80px;height:14.2px;background:#a4fd04;border-top:1.1px solid #8a5a1a;border-bottom:1.1px solid #8a5a1a"></div>
<span class="t l" style="left:137.6px;top:502.58px;font-size:8.1px;color:#1a2a00;font-weight:bold">设备7 [?]</span>
<div class="a" style="left:217.5px;top:497.28px;width:9px;height:10.4px;background:#f4f4f4;border:1px solid #bbb"></div>
<span class="t c" style="left:222px;top:502.58px;font-size:8px;color:#1a2a9a;font-weight:bold">✓</span>
<span class="t l" style="left:231px;top:502.58px;font-size:8.5px;color:#111;">0 00:34:56</span>
<span class="t c" style="left:291.8px;top:502.58px;font-size:8.5px;color:#111;">10</span>
<span class="t c" style="left:326.3px;top:502.58px;font-size:8.5px;color:#111;">220.4</span>
<span class="t c" style="left:360.75px;top:502.58px;font-size:8.5px;color:#111;">0.00</span>
<span class="t c" style="left:395.2px;top:502.58px;font-size:8.5px;color:#111;">0.0</span>
<span class="t c" style="left:429.6px;top:502.58px;font-size:8.5px;color:#111;">0.00</span>
<span class="t c" style="left:464px;top:502.58px;font-size:8.5px;color:#111;">0.000</span>
<span class="t c" style="left:498.3px;top:502.58px;font-size:8.5px;color:#111;">49.9</span>
<span class="t c" style="left:537px;top:502.58px;font-size:8.5px;color:#111;">----</span>
<span class="t c" style="left:580.2px;top:502.58px;font-size:8.5px;color:#111;">----</span>
<span class="t c" style="left:623.35px;top:502.58px;font-size:8.5px;color:#111;">----</span>
<span class="t c" style="left:666.5px;top:502.58px;font-size:8.5px;color:#111;">----</span>
<span class="t c" style="left:709.7px;top:502.58px;font-size:8.5px;color:#111;">----</span>
<span class="t c" style="left:752.9px;top:502.58px;font-size:8.5px;color:#111;">----</span>
<span class="t c" style="left:796.1px;top:502.58px;font-size:8.5px;color:#111;">----</span>
<span class="t c" style="left:839.3px;top:502.58px;font-size:8.5px;color:#111;">----</span>
<span class="t c" style="left:882.5px;top:502.58px;font-size:8.5px;color:#111;">----</span>
<span class="t c" style="left:925.7px;top:502.58px;font-size:8.5px;color:#111;">----</span>
<span class="t c" style="left:968.9px;top:502.58px;font-size:8.5px;color:#111;">----</span>
<span class="t c" style="left:1012.1px;top:502.58px;font-size:8.5px;color:#111;">----</span>
<span class="t c" style="left:1055.3px;top:502.58px;font-size:8.5px;color:#111;">----</span>
<span class="t c" style="left:1098.5px;top:502.58px;font-size:8.5px;color:#111;">----</span>
<span class="t c" style="left:1141.7px;top:502.58px;font-size:8.5px;color:#111;">----</span>
<span class="t c" style="left:1184.9px;top:502.58px;font-size:8.5px;color:#111;">----</span>
<span class="t c" style="left:1228.1px;top:502.58px;font-size:8.5px;color:#111;">----</span>
<span class="t c" style="left:1271.3px;top:502.58px;font-size:8.5px;color:#111;">----</span>
<div class="a" style="left:134px;top:509.67px;width:80px;height:14.2px;background:#a4fd04;border-top:1.1px solid #8a5a1a;border-bottom:1.1px solid #8a5a1a"></div>
<span class="t l" style="left:137.6px;top:516.77px;font-size:8.1px;color:#1a2a00;font-weight:bold">设备8 [?]</span>
<div class="a" style="left:217.5px;top:511.47px;width:9px;height:10.4px;background:#f4f4f4;border:1px solid #bbb"></div>
<span class="t c" style="left:222px;top:516.77px;font-size:8px;color:#1a2a9a;font-weight:bold">✓</span>
<span class="t l" style="left:231px;top:516.77px;font-size:8.5px;color:#111;">0 00:34:57</span>
<span class="t c" style="left:291.8px;top:516.77px;font-size:8.5px;color:#111;">10</span>
<span class="t c" style="left:326.3px;top:516.77px;font-size:8.5px;color:#111;">220.5</span>
<span class="t c" style="left:360.75px;top:516.77px;font-size:8.5px;color:#111;">0.00</span>
<span class="t c" style="left:395.2px;top:516.77px;font-size:8.5px;color:#111;">0.0</span>
<span class="t c" style="left:429.6px;top:516.77px;font-size:8.5px;color:#111;">0.20</span>
<span class="t c" style="left:464px;top:516.77px;font-size:8.5px;color:#111;">0.000</span>
<span class="t c" style="left:498.3px;top:516.77px;font-size:8.5px;color:#111;">49.9</span>
<span class="t c" style="left:537px;top:516.77px;font-size:8.5px;color:#111;">29.2</span>
<span class="t c" style="left:580.2px;top:516.77px;font-size:8.5px;color:#111;">79</span>
<span class="t c" style="left:623.35px;top:516.77px;font-size:8.5px;color:#111;">37.4</span>
<span class="t c" style="left:666.5px;top:516.77px;font-size:8.5px;color:#111;">31.6</span>
<span class="t c" style="left:709.7px;top:516.77px;font-size:8.5px;color:#111;">----</span>
<span class="t c" style="left:752.9px;top:516.77px;font-size:8.5px;color:#111;">----</span>
<span class="t c" style="left:796.1px;top:516.77px;font-size:8.5px;color:#111;">----</span>
<span class="t c" style="left:839.3px;top:516.77px;font-size:8.5px;color:#111;">----</span>
<span class="t c" style="left:882.5px;top:516.77px;font-size:8.5px;color:#111;">----</span>
<span class="t c" style="left:925.7px;top:516.77px;font-size:8.5px;color:#111;">----</span>
<span class="t c" style="left:968.9px;top:516.77px;font-size:8.5px;color:#111;">----</span>
<span class="t c" style="left:1012.1px;top:516.77px;font-size:8.5px;color:#111;">----</span>
<span class="t c" style="left:1055.3px;top:516.77px;font-size:8.5px;color:#111;">----</span>
<span class="t c" style="left:1098.5px;top:516.77px;font-size:8.5px;color:#111;">----</span>
<span class="t c" style="left:1141.7px;top:516.77px;font-size:8.5px;color:#111;">----</span>
<span class="t c" style="left:1184.9px;top:516.77px;font-size:8.5px;color:#111;">----</span>
<span class="t c" style="left:1228.1px;top:516.77px;font-size:8.5px;color:#111;">----</span>
<span class="t c" style="left:1271.3px;top:516.77px;font-size:8.5px;color:#111;">----</span>
<div class="a" style="left:134px;top:523.86px;width:80px;height:14.2px;background:#a4fd04;border-top:1.1px solid #8a5a1a;border-bottom:1.1px solid #8a5a1a"></div>
<span class="t l" style="left:137.6px;top:530.96px;font-size:8.1px;color:#1a2a00;font-weight:bold">设备9 [?]</span>
<div class="a" style="left:217.5px;top:525.66px;width:9px;height:10.4px;background:#f4f4f4;border:1px solid #bbb"></div>
<span class="t c" style="left:222px;top:530.96px;font-size:8px;color:#1a2a9a;font-weight:bold">✓</span>
<span class="t l" style="left:231px;top:530.96px;font-size:8.5px;color:#111;">0 00:34:57</span>
<span class="t c" style="left:291.8px;top:530.96px;font-size:8.5px;color:#111;">10</span>
<span class="t c" style="left:326.3px;top:530.96px;font-size:8.5px;color:#111;">221.1</span>
<span class="t c" style="left:360.75px;top:530.96px;font-size:8.5px;color:#111;">0.00</span>
<span class="t c" style="left:395.2px;top:530.96px;font-size:8.5px;color:#111;">0.0</span>
<span class="t c" style="left:429.6px;top:530.96px;font-size:8.5px;color:#111;">0.00</span>
<span class="t c" style="left:464px;top:530.96px;font-size:8.5px;color:#111;">0.000</span>
<span class="t c" style="left:498.3px;top:530.96px;font-size:8.5px;color:#111;">49.9</span>
<span class="t c" style="left:537px;top:530.96px;font-size:8.5px;color:#111;">29.8</span>
<span class="t c" style="left:580.2px;top:530.96px;font-size:8.5px;color:#111;">79</span>
<span class="t c" style="left:623.35px;top:530.96px;font-size:8.5px;color:#111;">36.7</span>
<span class="t c" style="left:666.5px;top:530.96px;font-size:8.5px;color:#111;">31.4</span>
<span class="t c" style="left:709.7px;top:530.96px;font-size:8.5px;color:#111;">----</span>
<span class="t c" style="left:752.9px;top:530.96px;font-size:8.5px;color:#111;">----</span>
<span class="t c" style="left:796.1px;top:530.96px;font-size:8.5px;color:#111;">----</span>
<span class="t c" style="left:839.3px;top:530.96px;font-size:8.5px;color:#111;">----</span>
<span class="t c" style="left:882.5px;top:530.96px;font-size:8.5px;color:#111;">----</span>
<span class="t c" style="left:925.7px;top:530.96px;font-size:8.5px;color:#111;">----</span>
<span class="t c" style="left:968.9px;top:530.96px;font-size:8.5px;color:#111;">----</span>
<span class="t c" style="left:1012.1px;top:530.96px;font-size:8.5px;color:#111;">----</span>
<span class="t c" style="left:1055.3px;top:530.96px;font-size:8.5px;color:#111;">----</span>
<span class="t c" style="left:1098.5px;top:530.96px;font-size:8.5px;color:#111;">----</span>
<span class="t c" style="left:1141.7px;top:530.96px;font-size:8.5px;color:#111;">----</span>
<span class="t c" style="left:1184.9px;top:530.96px;font-size:8.5px;color:#111;">----</span>
<span class="t c" style="left:1228.1px;top:530.96px;font-size:8.5px;color:#111;">30.7</span>
<span class="t c" style="left:1271.3px;top:530.96px;font-size:8.5px;color:#111;">----</span>
<div class="a" style="left:12px;top:1075.2px;width:1295.5px;height:18.2px;background:#d9d9d9;border-top:1px solid #f4f4f4;border-bottom:1px solid #a8a8a8"></div>
<div class="a" style="left:128px;top:1076.5px;width:1.2px;height:16px;background:#aaa;box-shadow:1px 0 0 #f5f5f5"></div>
<div class="a" style="left:225.3px;top:1076.5px;width:1.2px;height:16px;background:#aaa;box-shadow:1px 0 0 #f5f5f5"></div>
<div class="a" style="left:324px;top:1076.5px;width:1.2px;height:16px;background:#aaa;box-shadow:1px 0 0 #f5f5f5"></div>
<svg style="left:14.5px;top:1079px" width="11" height="11" viewBox="0 0 24 24"><path d="M12 1l2 3 3-1 1 3 3 1-1 3 3 2-3 2 1 3-3 1-1 3-3-1-2 3-2-3-3 1-1-3-3-1 1-3-3-2 3-2-1-3 3-1 1-3 3 1z" fill="#a9a9cc" stroke="#6a6a96" stroke-width="1.2"/><circle cx="12" cy="12" r="4" fill="#e4e4ee" stroke="#6a6a96" stroke-width="1.2"/></svg>
<span class="t l" style="left:32px;top:1085.6px;font-size:8.2px;color:#111;">连接端口:&nbsp; COM28</span>
<span class="t l" style="left:130.5px;top:1085.6px;font-size:8.2px;color:#111;">采集模式:&nbsp; 无线</span>
<span class="t l" style="left:228px;top:1085.6px;font-size:8.2px;color:#111;">扫描速度:&nbsp; 1.0 S</span>
<span class="t l" style="left:326.5px;top:1085.6px;font-size:8.2px;color:#111;">信道值:&nbsp; CH 63</span>
</div>
<div id="front" class="a" style="left:0;top:0;width:1708px;height:1833px">
<div class="a" style="left:396px;top:834px;width:1294px;height:727.4px;background:linear-gradient(90deg,#1d3238 0px,#21383d 8px,#566a68 30px,#7b8a86 90px,#62726e 150px,#3f514f 170px,#1e2f33 178px,#1a2a2e 212px,#a9b59f 216px,#bcc8b0 260px,#c6d2b9 330px,#c9d5bd 800px,#c9d5bd 1112px,#b4c3b2 1128px,#6a8484 1140px,#4a656b 1150px,#566f75 1170px,#6d8388 1195px,#758a8f 1294px);border:1px solid #1a1a1a;border-radius:7px 7px 2px 2px"></div>
<div class="a" style="left:397px;top:835px;width:214px;height:28px;border-radius:6px 0 0 0;background:radial-gradient(ellipse 70px 14px at 95px 16px,rgba(190,200,195,.55),rgba(190,200,195,0) 100%),linear-gradient(180deg,rgba(255,255,255,.25),rgba(255,255,255,0) 35%,rgba(0,0,0,.15) 100%)"></div>
<div class="a" style="left:540px;top:835px;width:72px;height:28px;background:linear-gradient(90deg,rgba(60,90,60,0),rgba(80,110,70,.5) 40%,rgba(20,30,30,.7) 100%)"></div>
<div class="a" style="left:397px;top:860.4px;width:7.6px;height:700px;background:linear-gradient(180deg,#3c4f55 0px,#5a6c72 30px,#7f9092 110px,#98a8a8 166px,#9aaaaa 170px,#1b2f36 173px,#1c3138 235px,#3a5a50 262px,#2a463f 290px,#1d333a 330px,#22404a 560px,#2b4854 700px);border-radius:0 0 0 2px"></div>
<div class="a" style="left:1680px;top:855px;width:9px;height:705.4px;background:linear-gradient(180deg,#758a8f 0px,#70868a 40px,#8fa2a4 120px,#aab8b8 178px,#acbaba 180px,#1e3840 183px,#1c353c 400px,#2a4a52 478px,#1d373e 540px,#16292f 706px)"></div>
<div class="a" style="left:397px;top:1552.4px;width:1292px;height:8px;border-radius:0 0 2px 2px;background:linear-gradient(90deg,#2c4a56 0px,#2d4a54 40px,#35504f 120px,#24393c 150px,#0c0f0f 156px,#0c0f0f 206px,#3a4038 212px,#b9c6ae 218px,#c9d5bd 260px,#c9d5bd 1112px,#7f9a90 1130px,#162a30 1142px,#13252b 1294px)"></div>
<div class="a" style="left:403.4px;top:863.4px;width:1277.6px;height:690px;border:1px solid #2a2a2a;background:#b3b3b3"></div>
<svg style="left:404.5px;top:845.5px" width="17" height="8" viewBox="0 0 17 8"><g fill="#e0202c"><rect x="0" y="2.5" width="1.3" height="3.5"/><rect x="2.2" y="1.5" width="1.3" height="5"/><rect x="4.2" y="2.3" width="2.4" height="3.6"/><rect x="7" y=".6" width="3" height="6.4"/><rect x="10.4" y="2.3" width="2.4" height="3.6"/><rect x="13.5" y="1.5" width="1.3" height="5"/><rect x="15.6" y="2.5" width="1.3" height="3.5"/></g></svg>
<span class="t l" style="left:426.4px;top:849.2px;font-size:12.9px;color:#000;text-shadow:0 0 4px #fff,0 0 7px rgba(255,255,255,.9),0 0 10px rgba(255,255,255,.7)">Portable MixViewer 3.3</span>
<div class="a" style="left:1577.4px;top:834px;width:103.6px;height:19.8px;border:1px solid #232e31;border-top:0;border-radius:0 0 5px 5px;background:#66797e;box-shadow:0 0 0 1px rgba(255,255,255,.4)"></div>
<div class="a" style="left:1578.4px;top:835px;width:27.6px;height:17.8px;border-radius:0 0 0 4px;background:linear-gradient(180deg,#c3cdce 0%,#a3b1b3 46%,#62757a 52%,#6f8287 100%);box-shadow:inset 0 0 0 1px rgba(255,255,255,.3)"></div>
<div class="a" style="left:1607px;top:835px;width:25.8px;height:17.8px;background:linear-gradient(180deg,#c3cdce 0%,#a3b1b3 46%,#62757a 52%,#6f8287 100%);box-shadow:inset 0 0 0 1px rgba(255,255,255,.3)"></div>
<div class="a" style="left:1633.8px;top:835px;width:46.2px;height:17.8px;border-radius:0 0 4px 0;background:linear-gradient(180deg,#e4a898 0%,#d47a68 46%,#b5341c 52%,#c8492c 80%,#c4503a 100%);box-shadow:inset 0 0 0 1px rgba(255,255,255,.3)"></div>
<div class="a" style="left:1587.2px;top:843px;width:11.6px;height:5.2px;background:#fff;border:1px solid #3e4a4e;border-radius:1px"></div>
<div class="a" style="left:1614px;top:838px;width:11.8px;height:9.8px;background:#fff;border:1px solid #3e4a4e;border-radius:1px"></div>
<div class="a" style="left:1616.8px;top:841.4px;width:6.2px;height:3.6px;background:#8fa0a4;border:1px solid #3e4a4e"></div>
<span class="t c" style="left:1657.4px;top:842.2px;font-size:14.5px;color:#fff;font-weight:bold;transform:translate(-50%,-50%) scale(1.25,1);text-shadow:0 0 1.5px #401008,0 0 1.5px #401008,0 0 1px #401008">x</span>
<div class="a" style="left:404.4px;top:864.4px;width:1275.6px;height:20.6px;background:#f0f0f0;border-bottom:1px solid #a9a9a9"></div>
<span class="t l" style="left:412px;top:873.6px;font-size:12.2px;color:#000;">文件</span>
<span class="t l" style="left:451px;top:873.6px;font-size:12.2px;color:#000;">查看</span>
<span class="t l" style="left:490px;top:873.6px;font-size:12.2px;color:#000;">系统</span>
<span class="t l" style="left:529px;top:873.6px;font-size:12.2px;color:#000;">设置</span>
<span class="t l" style="left:568px;top:873.6px;font-size:12.2px;color:#000;">操作</span>
<span class="t l" style="left:607px;top:873.6px;font-size:12.2px;color:#000;">帮助</span>
<div class="a" style="left:404.4px;top:885.4px;width:1275.6px;height:29.6px;background:#d8d8d8;border-top:1px solid #fbfbfb"></div>
<div class="a" style="left:405px;top:886.6px;width:37px;height:27.3px;background:linear-gradient(90deg,#cfcfcf 0%,#e2e2e2 30%,#fdfdfd 85%,#fff 100%)"></div>
<svg style="left:405px;top:886.6px" width="37" height="27.3" viewBox="0 0 37 27.3" preserveAspectRatio="xMidYMid meet"><path d="M6.9 21.9 V17.5 A11.6 12.3 0 0 1 31.5 17.5 V21.9 Q31.5 22.4 30.5 22.4 H7.9 Q6.9 22.4 6.9 21.9Z" fill="none" stroke="#ee1c24" stroke-width="2"/><path d="M18.6 17.6 L25.8 9.6" stroke="#ee1c24" stroke-width="1.6" stroke-linecap="round"/><circle cx="18.6" cy="17.6" r="1.7" fill="none" stroke="#ee1c24" stroke-width="1.3"/><path d="M9.6 17.4h2.2M10.6 12.2l1.8 1.1M14.2 8.6l1 1.8M19.2 7.2v2.1M24 8.3l-.9 1.7M27.8 12.3l-1.8 1.1M28.8 17.4h-2.2" stroke="#ee1c24" stroke-width="1.5" fill="none"/></svg>
<div class="a" style="left:443px;top:886.6px;width:37px;height:27.3px;background:linear-gradient(90deg,#cfcfcf 0%,#e2e2e2 30%,#fdfdfd 85%,#fff 100%)"></div>
<svg style="left:443px;top:886.6px" width="37" height="27.3" viewBox="0 0 37 27.3" preserveAspectRatio="xMidYMid meet"><rect x="14.4" y="3.3" width="9" height="20.2" fill="none" stroke="#ee1c24" stroke-width="1.3"/><path d="M15.8 5 h6.2 v3.2 l-2.4 4.6 v1.2 l2.4 4.6 v3.4 h-6.2 v-3.4 l2.4 -4.6 v-1.2 l-2.4 -4.6z" fill="none" stroke="#ee1c24" stroke-width=".9"/><path d="M16.6 9 h4.6 l-2.3 3.6z M16.4 21 q2.5 -4.6 5 0z" fill="#ee1c24"/></svg>
<div class="a" style="left:481px;top:886.6px;width:37px;height:27.3px;background:linear-gradient(90deg,#cfcfcf 0%,#e2e2e2 30%,#fdfdfd 85%,#fff 100%)"></div>
<svg style="left:481px;top:886.6px" width="37" height="27.3" viewBox="0 0 37 27.3" preserveAspectRatio="xMidYMid meet"><path d="M11 5.6v2.4M13.4 5.6v2.4M15.8 5.6v2.4M18.2 5.6v2.4M20.6 5.6v2.4M23 5.6v2.4M25.4 5.6v2.4M27.8 5.6v2.4M30.2 5.6v2.4M32.6 5.6v2.4M11 15.2v2.4M13.4 15.2v2.4M15.8 15.2v2.4M18.2 15.2v2.4M20.6 15.2v2.4M23 15.2v2.4M25.4 15.2v2.4M27.8 15.2v2.4M30.2 15.2v2.4M32.6 15.2v2.4" stroke="#b8b8b8" stroke-width=".9" fill="none"/><rect x="8" y="9.6" width="26" height="4.2" rx="2.1" fill="#f4f4f4"/><rect x="7" y="9.9" width="21.3" height="3.7" rx="1.8" fill="#d8232a"/><ellipse cx="5.7" cy="11.8" rx="3" ry="4.2" fill="#d8232a"/><ellipse cx="4.9" cy="11.4" rx="1.2" ry="2.4" fill="#ec7a70"/><path d="M11 20.3H35" stroke="#f0484e" stroke-width="1.8" stroke-dasharray="1.5 .8" fill="none"/></svg>
<div class="a" style="left:519px;top:886.6px;width:37px;height:27.3px;background:linear-gradient(90deg,#cfcfcf 0%,#e2e2e2 30%,#fdfdfd 85%,#fff 100%)"></div>
<svg style="left:519px;top:886.6px" width="37" height="27.3" viewBox="0 0 37 27.3" preserveAspectRatio="xMidYMid meet"><path d="M11.7 3.8 h4.7 v11.6 l2.4 2.6 l2.4 -2.6 V3.8 h4.7 V16.4 l-4.4 4.5 v1.6 h-5.4 v-1.6 L11.7 16.4z" fill="#ee1c24"/><path d="M26.6 9.8h4.4M28.9 7.8v4" stroke="#ee1c24" stroke-width="1" fill="none"/></svg>
<div class="a" style="left:557px;top:886.6px;width:37px;height:27.3px;background:linear-gradient(90deg,#cfcfcf 0%,#e2e2e2 30%,#fdfdfd 85%,#fff 100%)"></div>
<svg style="left:557px;top:886.6px" width="37" height="27.3" viewBox="0 0 37 27.3" preserveAspectRatio="xMidYMid meet"><path d="M14.3 18.2 v-5.6 a4.8 4.8 0 0 1 9.6 0 v5.6z" fill="#ee1c24"/><rect x="17.3" y="12" width="3.4" height="5" fill="#f8b0b0"/><rect x="12" y="18.8" width="14.2" height="1.8" fill="#ee1c24"/><rect x="10.7" y="21.2" width="16.8" height="2" fill="#ee1c24"/><path d="M19.1 3.6v3M14.6 4.4l1.2 2.8M23.6 4.4l-1.2 2.8M11 7.2l2.2 2.2M27.2 7.2l-2.2 2.2M9.4 11.2l2.8 .9M28.8 11.2l-2.8 .9M9 14.8h2.6M29.2 14.8h-2.6" stroke="#ee1c24" stroke-width="1" fill="none"/></svg>
<div class="a" style="left:595px;top:886.6px;width:37px;height:27.3px;background:linear-gradient(90deg,#cfcfcf 0%,#e2e2e2 30%,#fdfdfd 85%,#fff 100%)"></div>
<svg style="left:595px;top:886.6px" width="37" height="27.3" viewBox="0 0 37 27.3" preserveAspectRatio="xMidYMid meet"><path d="M9.6 2.8v20.8M15.4 2.8v20.8M21.2 2.8v20.8M27 2.8v20.8" stroke="#f4686c" stroke-width="1.1" fill="none"/><rect x="7.6" y="7.8" width="4" height="6.6" fill="#ee1c24"/><rect x="13.4" y="11.6" width="4" height="7" fill="#ee1c24"/><rect x="19.2" y="14.8" width="4" height="6.4" fill="#ee1c24"/><rect x="25" y="7.8" width="4" height="6.6" fill="#ee1c24"/></svg>
<div class="a" style="left:633px;top:886.6px;width:37px;height:27.3px;background:linear-gradient(90deg,#cfcfcf 0%,#e2e2e2 30%,#fdfdfd 85%,#fff 100%)"></div>
<span class="t c" style="left:651.8px;top:900.85px;font-size:11.6px;color:#ee1c24;letter-spacing:0.05px">HOLD</span>
<div class="a" style="left:671px;top:886.6px;width:37px;height:27.3px;background:linear-gradient(90deg,#cfcfcf 0%,#e2e2e2 30%,#fdfdfd 85%,#fff 100%)"></div>
<span class="t c" style="left:689.8px;top:900.85px;font-size:11.6px;color:#ee1c24;letter-spacing:0.05px">DATA</span>
<div class="a" style="left:709px;top:886.6px;width:37px;height:27.3px;background:linear-gradient(90deg,#cfcfcf 0%,#e2e2e2 30%,#fdfdfd 85%,#fff 100%)"></div>
<svg style="left:709px;top:886.6px" width="37" height="27.3" viewBox="0 0 37 27.3" preserveAspectRatio="xMidYMid meet"><path d="M10.6 5.6 h8.2 l3.6 3.6 v5 M10.6 5.6 v14.8 h9.4" fill="none" stroke="#ee1c24" stroke-width="1.5"/><path d="M14 8.8 l5.6 4 l-5.6 4z" fill="#ee1c24"/><circle cx="23.7" cy="17.4" r="3.9" fill="#ee1c24"/><rect x="21.7" y="16" width="4" height="2.8" fill="none" stroke="#fff" stroke-width=".8"/></svg>
<svg style="left:750.6px;top:889.2px" width="20.5" height="20.5" viewBox="0 0 22 22"><defs><linearGradient id="rg2" x1="0" y1="0" x2="0" y2="1"><stop offset="0" stop-color="#9fd0f4"/><stop offset="1" stop-color="#3f86cc"/></linearGradient></defs><path d="M3.2 9.6 A8 8 0 0 1 17 5.2 L19.6 2.6 V10.4 H11.8 L14.4 7.8 A4.6 4.6 0 0 0 7 9.6z" fill="url(#rg2)" stroke="#5a94cc" stroke-width=".5"/><path d="M18.8 12.4 A8 8 0 0 1 5 16.8 L2.4 19.4 V11.6 H10.2 L7.6 14.2 A4.6 4.6 0 0 0 15 12.4z" fill="url(#rg2)" stroke="#5a94cc" stroke-width=".5"/></svg>
<span class="t l" style="left:775.2px;top:900.6px;font-size:13.9px;color:#1446dc;">实时曲线</span>
<span class="t r" style="left:1660.6px;top:901.5px;font-size:12.75px;color:#000;">2019/07/02 09:36:02</span>
<div class="a" style="left:404.4px;top:915px;width:174px;height:614px;background:#666"></div>
<div class="a" style="left:578px;top:915px;width:2.2px;height:614px;background:linear-gradient(90deg,#bdbdbd,#d2d2d2)"></div>
<div class="a" style="left:580.2px;top:915px;width:1099.8px;height:614px;background:#b3b3b3"></div>
<div class="a" style="left:580.2px;top:914.8px;width:1099.8px;height:1.4px;background:#8e8e8e"></div>
<div class="a" style="left:580.6px;top:1066.5px;width:1099.4px;height:1.5px;background:#dcdcdc"></div>
<div class="a" style="left:580.6px;top:1501.4px;width:1099.4px;height:1.5px;background:#d6d6d6"></div>
<div class="a" style="left:408.2px;top:922px;width:166.6px;height:586.4px;border:1px solid #000;border-bottom:0"></div>
<div class="a" style="left:410.4px;top:924.2px;width:162.2px;height:584.2px;border:1px solid #000;border-bottom:0"></div>
<div class="a" style="left:418.4px;top:935.6px;width:145.6px;height:20.4px;background:#fbfbfb"></div>
<span class="t c" style="left:490.3px;top:945.2px;font-size:12.4px;color:#000;">设备1 [?]</span>
<span class="t c" style="left:490.3px;top:979.6px;font-size:12.6px;color:#000;">S/N:&nbsp; 32095500T00079</span>
<div class="a" style="left:411px;top:997.6px;width:161.4px;height:1.2px;background:#000"></div>
<span class="t r" style="left:502px;top:1016.4px;font-size:14.6px;color:#2448e8;">0</span>
<span class="t l" style="left:508.8px;top:1016px;font-size:14px;color:#000;">运行</span>
<span class="t r" style="left:502px;top:1051.6px;font-size:14.6px;color:#2448e8;">0</span>
<span class="t l" style="left:508.8px;top:1051.2px;font-size:14px;color:#000;">设定数</span>
<div class="a" style="left:411px;top:1071.6px;width:161.4px;height:1.2px;background:#000"></div>
<span class="t r" style="left:518px;top:1114.6px;font-size:31.5px;color:#fff;">0.0</span>
<span class="t l" style="left:527.4px;top:1114.6px;font-size:31.5px;color:#ff2a2a;">W</span>
<span class="t r" style="left:535.2px;top:1141.2px;font-size:11px;color:#e8e8e8;">----</span>
<span class="t l" style="left:540.6px;top:1140.4px;font-size:10.6px;color:#ff2a2a;">°C</span>
<span class="t r" style="left:535.2px;top:1157px;font-size:11px;color:#e8e8e8;">----</span>
<span class="t l" style="left:540.6px;top:1156.4px;font-size:10.6px;color:#ff2a2a;">%RH</span>
<span class="t r" style="left:458px;top:1175.6px;font-size:14px;color:#fff;">220.5</span>
<span class="t l" style="left:465.4px;top:1175.6px;font-size:14.4px;color:#ff2a2a;">V</span>
<span class="t r" style="left:531px;top:1175.6px;font-size:14px;color:#fff;">0.00</span>
<span class="t l" style="left:538.4px;top:1175.6px;font-size:14.4px;color:#ff2a2a;">A</span>
<span class="t r" style="left:458px;top:1201px;font-size:14px;color:#fff;">49.9</span>
<span class="t l" style="left:465.4px;top:1201px;font-size:14.4px;color:#ff2a2a;">Hz</span>
<span class="t r" style="left:531px;top:1201px;font-size:14px;color:#fff;">0.000</span>
<span class="t l" style="left:538.4px;top:1201px;font-size:14.4px;color:#ff2a2a;">PF</span>
<div class="a" style="left:411px;top:1217.5px;width:161.4px;height:1.2px;background:#000"></div>
<div class="a" style="left:489.6px;top:1218.1px;width:1.2px;height:287.9px;background:#000"></div>
<span class="t l" style="left:413.6px;top:1226.6px;font-size:12.5px;color:#ff3030;">T1</span>
<span class="t l" style="left:438.6px;top:1226.6px;font-size:13px;color:#000;">K</span>
<span class="t r" style="left:465.8px;top:1247.2px;font-size:12.3px;color:#66f41e;">30.6</span>
<span class="t l" style="left:473.2px;top:1246.6px;font-size:13px;color:#000;">°C</span>
<span class="t l" style="left:493.8px;top:1226.6px;font-size:12.5px;color:#ff3030;">T2</span>
<span class="t l" style="left:518.8px;top:1226.6px;font-size:13px;color:#000;">K</span>
<span class="t r" style="left:547.8px;top:1247.2px;font-size:12.3px;color:#66f41e;">30.4</span>
<span class="t l" style="left:553.4px;top:1246.6px;font-size:13px;color:#000;">°C</span>
<div class="a" style="left:411.6px;top:1253.9px;width:160px;height:1.2px;background:#000"></div>
<span class="t l" style="left:413.6px;top:1262.67px;font-size:12.5px;color:#ff3030;">T3</span>
<span class="t l" style="left:438.6px;top:1262.67px;font-size:13px;color:#000;">K</span>
<span class="t r" style="left:465.8px;top:1283.4px;font-size:12.3px;color:#66f41e;">30.5</span>
<span class="t l" style="left:473.2px;top:1282.8px;font-size:13px;color:#000;">°C</span>
<span class="t l" style="left:493.8px;top:1262.67px;font-size:12.5px;color:#ff3030;">T4</span>
<span class="t l" style="left:518.8px;top:1262.67px;font-size:13px;color:#000;">K</span>
<span class="t r" style="left:547.8px;top:1283.4px;font-size:12.3px;color:#66f41e;">30.5</span>
<span class="t l" style="left:553.4px;top:1282.8px;font-size:13px;color:#000;">°C</span>
<div class="a" style="left:411.6px;top:1290.3px;width:160px;height:1.2px;background:#000"></div>
<span class="t l" style="left:413.6px;top:1298.74px;font-size:12.5px;color:#ff3030;">T5</span>
<span class="t l" style="left:438.6px;top:1298.74px;font-size:13px;color:#000;">K</span>
<span class="t r" style="left:465.8px;top:1319.6px;font-size:12.3px;color:#66f41e;">30.5</span>
<span class="t l" style="left:473.2px;top:1319px;font-size:13px;color:#000;">°C</span>
<span class="t l" style="left:493.8px;top:1298.74px;font-size:12.5px;color:#ff3030;">T6</span>
<span class="t l" style="left:518.8px;top:1298.74px;font-size:13px;color:#000;">K</span>
<span class="t r" style="left:547.8px;top:1319.6px;font-size:12.3px;color:#66f41e;">30.7</span>
<span class="t l" style="left:553.4px;top:1319px;font-size:13px;color:#000;">°C</span>
<div class="a" style="left:411.6px;top:1326.7px;width:19.4px;height:1.2px;background:#000"></div>
<div class="a" style="left:467px;top:1326.7px;width:46px;height:1.2px;background:#000"></div>
<div class="a" style="left:549.2px;top:1326.7px;width:22.4px;height:1.2px;background:#000"></div>
<span class="t l" style="left:413.6px;top:1334.81px;font-size:12.5px;color:#ff3030;">T7</span>
<span class="t l" style="left:438.6px;top:1334.81px;font-size:13px;color:#000;">K</span>
<span class="t r" style="left:465.8px;top:1355.8px;font-size:12.3px;color:#66f41e;">30.5</span>
<span class="t l" style="left:473.2px;top:1355.2px;font-size:13px;color:#000;">°C</span>
<span class="t l" style="left:493.8px;top:1334.81px;font-size:12.5px;color:#ff3030;">T8</span>
<span class="t l" style="left:518.8px;top:1334.81px;font-size:13px;color:#000;">K</span>
<span class="t r" style="left:547.8px;top:1355.8px;font-size:12.3px;color:#66f41e;">30.6</span>
<span class="t l" style="left:553.4px;top:1355.2px;font-size:13px;color:#000;">°C</span>
<div class="a" style="left:411.6px;top:1363.1px;width:19.4px;height:1.2px;background:#000"></div>
<div class="a" style="left:467px;top:1363.1px;width:46px;height:1.2px;background:#000"></div>
<div class="a" style="left:549.2px;top:1363.1px;width:22.4px;height:1.2px;background:#000"></div>
<span class="t l" style="left:413.6px;top:1370.88px;font-size:12.5px;color:#ff3030;">T9</span>
<span class="t l" style="left:438.6px;top:1370.88px;font-size:13px;color:#000;">K</span>
<span class="t r" style="left:465.8px;top:1392px;font-size:12.3px;color:#66f41e;">30.5</span>
<span class="t l" style="left:473.2px;top:1391.4px;font-size:13px;color:#000;">°C</span>
<span class="t l" style="left:493.8px;top:1370.88px;font-size:12.5px;color:#ff3030;">T10</span>
<span class="t l" style="left:518.8px;top:1370.88px;font-size:13px;color:#000;">K</span>
<span class="t r" style="left:547.8px;top:1392px;font-size:12.3px;color:#66f41e;">30.5</span>
<span class="t l" style="left:553.4px;top:1391.4px;font-size:13px;color:#000;">°C</span>
<div class="a" style="left:411.6px;top:1399.5px;width:19.4px;height:1.2px;background:#000"></div>
<div class="a" style="left:467px;top:1399.5px;width:46px;height:1.2px;background:#000"></div>
<div class="a" style="left:549.2px;top:1399.5px;width:22.4px;height:1.2px;background:#000"></div>
<span class="t l" style="left:413.6px;top:1406.95px;font-size:12.5px;color:#ff3030;">T11</span>
<span class="t l" style="left:438.6px;top:1406.95px;font-size:13px;color:#000;">K</span>
<span class="t r" style="left:465.8px;top:1428.2px;font-size:12.3px;color:#66f41e;">30.3</span>
<span class="t l" style="left:473.2px;top:1427.6px;font-size:13px;color:#000;">°C</span>
<span class="t l" style="left:493.8px;top:1406.95px;font-size:12.5px;color:#ff3030;">T12</span>
<span class="t l" style="left:518.8px;top:1406.95px;font-size:13px;color:#000;">K</span>
<span class="t r" style="left:547.8px;top:1428.2px;font-size:12.3px;color:#66f41e;">30.4</span>
<span class="t l" style="left:553.4px;top:1427.6px;font-size:13px;color:#000;">°C</span>
<div class="a" style="left:411.6px;top:1435.9px;width:19.4px;height:1.2px;background:#000"></div>
<div class="a" style="left:467px;top:1435.9px;width:46px;height:1.2px;background:#000"></div>
<div class="a" style="left:549.2px;top:1435.9px;width:22.4px;height:1.2px;background:#000"></div>
<span class="t l" style="left:413.6px;top:1443.02px;font-size:12.5px;color:#ff3030;">T13</span>
<span class="t l" style="left:438.6px;top:1443.02px;font-size:13px;color:#000;">K</span>
<span class="t r" style="left:465.8px;top:1464.4px;font-size:12.3px;color:#66f41e;">30.2</span>
<span class="t l" style="left:473.2px;top:1463.8px;font-size:13px;color:#000;">°C</span>
<span class="t l" style="left:493.8px;top:1443.02px;font-size:12.5px;color:#ff3030;">T14</span>
<span class="t l" style="left:518.8px;top:1443.02px;font-size:13px;color:#000;">K</span>
<span class="t r" style="left:547.8px;top:1464.4px;font-size:12.3px;color:#66f41e;">30.0</span>
<span class="t l" style="left:553.4px;top:1463.8px;font-size:13px;color:#000;">°C</span>
<div class="a" style="left:411.6px;top:1472.3px;width:19.4px;height:1.2px;background:#000"></div>
<div class="a" style="left:467px;top:1472.3px;width:46px;height:1.2px;background:#000"></div>
<div class="a" style="left:549.2px;top:1472.3px;width:22.4px;height:1.2px;background:#000"></div>
<span class="t l" style="left:413.6px;top:1479.09px;font-size:12.5px;color:#ff3030;">T15</span>
<span class="t l" style="left:438.6px;top:1479.09px;font-size:13px;color:#000;">K</span>
<span class="t r" style="left:465.8px;top:1500.6px;font-size:12.3px;color:#66f41e;">29.9</span>
<span class="t l" style="left:473.2px;top:1500px;font-size:13px;color:#000;">°C</span>
<span class="t l" style="left:493.8px;top:1479.09px;font-size:12.5px;color:#ff3030;">T16</span>
<span class="t l" style="left:518.8px;top:1479.09px;font-size:13px;color:#000;">K</span>
<span class="t r" style="left:547.8px;top:1500.6px;font-size:12.3px;color:#66f41e;">29.7</span>
<span class="t l" style="left:553.4px;top:1500px;font-size:13px;color:#000;">°C</span>
<div class="a" style="left:404.4px;top:1508.2px;width:173.6px;height:17.6px;background:#b3b3b3;border-top:1px solid #000;border-bottom:1px solid #000"></div>
<svg style="left:405.6px;top:1508px" width="18" height="18" viewBox="0 0 18 18"><defs><linearGradient id="ag1" x1="0" y1="0" x2="1" y2="0"><stop offset="0" stop-color="#7ed038"/><stop offset=".5" stop-color="#5cb81c"/><stop offset="1" stop-color="#6cc42c"/></linearGradient></defs><path d="M9 .4 L17.4 10.2 H14.4 V17.6 H4.4 V10.2 H.6z" fill="url(#ag1)" stroke="#4a9c16" stroke-width=".8"/></svg>
<svg style="left:0;top:0" width="1708" height="1833"><rect x="657.2" y="936" width="829.2" height="97" fill="#222"/><path d="M661.1 1032.5L662.35 936.6H663.55L664.8 1032.5M666 1032.5L667.25 936.6H668.45L669.7 1032.5M674.2 1032.5L675.45 936.6H676.65L677.9 1032.5M682 1032.5L683.25 936.6H684.45L685.7 1032.5M692.5 1032.5L693.75 936.6H694.95L696.2 1032.5M700.9 1032.5L702.15 936.6H703.35L704.6 1032.5M705.1 1032.5L706.35 936.6H707.55L708.8 1032.5M714 1032.5L715.25 936.6H716.45L717.7 1032.5M718.2 1032.5L719.45 936.6H720.65L721.9 1032.5M727.1 1032.5L728.35 936.6H729.55L730.8 1032.5M731.3 1032.5L732.55 936.6H733.75L735 1032.5M735.6 1032.5L736.85 936.6H738.05L739.3 1032.5M739.8 1032.5L741.05 936.6H742.25L743.5 1032.5M756.6 1032.5L757.85 936.6H759.05L760.3 1032.5M766.5 1032.5L767.75 936.6H768.95L770.2 1032.5M770.7 1032.5L771.95 936.6H773.15L774.4 1032.5M775.4 1032.5L776.65 936.6H777.85L779.1 1032.5M779.6 1032.5L780.85 936.6H782.05L783.3 1032.5M788.5 1032.5L789.75 936.6H790.95L792.2 1032.5M792.7 1032.5L793.95 936.6H795.15L796.4 1032.5M805.32 1032.5L806.57 936.6H807.77L809.02 1032.5M814.13 1032.5L815.38 936.6H816.58L817.83 1032.5M818.03 1032.5L819.28 936.6H820.48L821.73 1032.5M831.96 1032.5L833.21 936.6H834.41L835.66 1032.5M840.16 1032.5L841.41 936.6H842.61L843.86 1032.5M844.87 1032.5L846.12 936.6H847.32L848.57 1032.5M853.07 1032.5L854.32 936.6H855.52L856.77 1032.5M870.28 1032.5L871.53 936.6H872.73L873.98 1032.5M879.5 1032.5L880.75 936.6H881.95L883.2 1032.5M883.81 1032.5L885.06 936.6H886.26L887.51 1032.5M888.31 1032.5L889.56 936.6H890.76L892.01 1032.5M893.03 1032.5L894.28 936.6H895.48L896.73 1032.5M906.76 1032.5L908.01 936.6H909.21L910.46 1032.5M910.45 1032.5L911.7 936.6H912.9L914.15 1032.5M914.54 1032.5L915.79 936.6H916.99L918.24 1032.5M919.05 1032.5L920.3 936.6H921.5L922.75 1032.5M928.27 1032.5L929.52 936.6H930.72L931.97 1032.5M932.37 1032.5L933.62 936.6H934.82L936.07 1032.5M945.08 1032.5L946.33 936.6H947.53L948.78 1032.5M954.3 1032.5L955.55 936.6H956.75L958 1032.5M959.01 1032.5L960.26 936.6H961.46L962.71 1032.5M967.21 1032.5L968.46 936.6H969.66L970.91 1032.5M980.53 1032.5L981.78 936.6H982.98L984.23 1032.5M983.6 1032.5L984.85 936.6H986.05L987.3 1032.5M992.82 1032.5L994.07 936.6H995.27L996.52 1032.5M996.92 1032.5L998.17 936.6H999.37L1000.62 1032.5M1006.14 1032.5L1007.39 936.6H1008.59L1009.84 1032.5M1010.24 1032.5L1011.49 936.6H1012.69L1013.94 1032.5M1019.46 1032.5L1020.71 936.6H1021.91L1023.16 1032.5M1023.56 1032.5L1024.81 936.6H1026.01L1027.26 1032.5M1027.66 1032.5L1028.91 936.6H1030.11L1031.36 1032.5M1032.37 1032.5L1033.62 936.6H1034.82L1036.07 1032.5M1040.98 1032.5L1042.23 936.6H1043.43L1044.68 1032.5M1050.2 1032.5L1051.45 936.6H1052.65L1053.9 1032.5M1057.99 1032.5L1059.24 936.6H1060.44L1061.69 1032.5M1062.49 1032.5L1063.74 936.6H1064.94L1066.19 1032.5M1067 1032.5L1068.25 936.6H1069.45L1070.7 1032.5M1071.72 1032.5L1072.97 936.6H1074.17L1075.42 1032.5M1080.53 1032.5L1081.78 936.6H1082.98L1084.23 1032.5M1085.04 1032.5L1086.29 936.6H1087.49L1088.74 1032.5M1093.23 1032.5L1094.48 936.6H1095.68L1096.93 1032.5M1098.35 1032.5L1099.6 936.6H1100.8L1102.05 1032.5M1107.58 1032.5L1108.83 936.6H1110.03L1111.28 1032.5M1111.67 1032.5L1112.92 936.6H1114.12L1115.37 1032.5M1119.87 1032.5L1121.12 936.6H1122.32L1123.57 1032.5M1123.97 1032.5L1125.22 936.6H1126.42L1127.67 1032.5M1133.19 1032.5L1134.44 936.6H1135.64L1136.89 1032.5M1138.31 1032.5L1139.56 936.6H1140.76L1142.01 1032.5M1145.32 1032.5L1146.57 936.6H1147.77L1149.02 1032.5M1154.13 1032.5L1155.38 936.6H1156.58L1157.83 1032.5M1158.64 1032.5L1159.89 936.6H1161.09L1162.34 1032.5M1162.74 1032.5L1163.99 936.6H1165.19L1166.44 1032.5M1171.96 1032.5L1173.21 936.6H1174.41L1175.66 1032.5M1176.06 1032.5L1177.31 936.6H1178.51L1179.76 1032.5M1181.18 1032.5L1182.43 936.6H1183.63L1184.88 1032.5M1185.28 1032.5L1186.53 936.6H1187.73L1188.98 1032.5M1198.19 1032.5L1199.44 936.6H1200.64L1201.89 1032.5M1206.8 1032.5L1208.05 936.6H1209.25L1210.5 1032.5M1210.9 1032.5L1212.15 936.6H1213.35L1214.6 1032.5M1220.12 1032.5L1221.37 936.6H1222.57L1223.82 1032.5M1237.54 1032.5L1238.79 936.6H1239.99L1241.24 1032.5M1246.76 1032.5L1248.01 936.6H1249.21L1250.46 1032.5M1250.45 1032.5L1251.7 936.6H1252.9L1254.15 1032.5M1259.05 1032.5L1260.3 936.6H1261.5L1262.75 1032.5M1272.37 1032.5L1273.62 936.6H1274.82L1276.07 1032.5M1277.08 1032.5L1278.33 936.6H1279.53L1280.78 1032.5M1281.59 1032.5L1282.84 936.6H1284.04L1285.29 1032.5M1285.69 1032.5L1286.94 936.6H1288.14L1289.39 1032.5M1290.2 1032.5L1291.45 936.6H1292.65L1293.9 1032.5M1294.91 1032.5L1296.16 936.6H1297.36L1298.61 1032.5M1298.6 1032.5L1299.85 936.6H1301.05L1302.3 1032.5M1312.33 1032.5L1313.58 936.6H1314.78L1316.03 1032.5M1316.43 1032.5L1317.68 936.6H1318.88L1320.13 1032.5M1321.14 1032.5L1322.39 936.6H1323.59L1324.84 1032.5M1325.24 1032.5L1326.49 936.6H1327.69L1328.94 1032.5M1332.82 1032.5L1334.07 936.6H1335.27L1336.52 1032.5M1350.24 1032.5L1351.49 936.6H1352.69L1353.94 1032.5M1359.46 1032.5L1360.71 936.6H1361.91L1363.16 1032.5M1363.56 1032.5L1364.81 936.6H1366.01L1367.26 1032.5M1372.78 1032.5L1374.03 936.6H1375.23L1376.48 1032.5M1386.1 1032.5L1387.35 936.6H1388.55L1389.8 1032.5M1390.61 1032.5L1391.86 936.6H1393.06L1394.31 1032.5M1394.71 1032.5L1395.96 936.6H1397.16L1398.41 1032.5M1398.81 1032.5L1400.06 936.6H1401.26L1402.51 1032.5M1407.62 1032.5L1408.87 936.6H1410.07L1411.32 1032.5M1415.81 1032.5L1417.06 936.6H1418.26L1419.51 1032.5M1424.63 1032.5L1425.88 936.6H1427.08L1428.33 1032.5M1429.13 1032.5L1430.38 936.6H1431.58L1432.83 1032.5M1433.23 1032.5L1434.48 936.6H1435.68L1436.93 1032.5M1437.74 1032.5L1438.99 936.6H1440.19L1441.44 1032.5M1446.55 1032.5L1447.8 936.6H1449L1450.25 1032.5M1450.65 1032.5L1451.9 936.6H1453.1L1454.35 1032.5M1459.87 1032.5L1461.12 936.6H1462.32L1463.57 1032.5M1463.97 1032.5L1465.22 936.6H1466.42L1467.67 1032.5M1473.19 1032.5L1474.44 936.6H1475.64L1476.89 1032.5M1477.9 1032.5L1479.15 936.6H1480.35L1481.6 1032.5" fill="#4cae10" fill-opacity=".75" stroke="#6dfa08" stroke-width="1.15" stroke-linejoin="round"/><path d="M657.2 1032.3H1486.4" stroke="#367c10" stroke-width="1.3"/><polyline points="657,1001 660,999.25 663,997.5 665.67,997.43 668.33,999.17 671,1000 672,997 674.8,995.06 677.6,995.1 680.4,996.4 683.2,994.1 686,994.5 687,992.5 689.6,993 692.2,994.94 694.8,992.56 697.4,995.4 700,995 702.67,995.33 705.33,994.23 708,995.1 710.67,996.33 713.33,996.67 716,997 718.67,996.6 721.33,998 724,998.5 726.6,996.9 729.2,998 731.8,996.4 734.4,994.26 737,995 740.5,995.44 744,993 748,995.5 751,994.35 754,995 757,996.19 760,994.5 762.8,993.06 765.6,995.94 768.4,995.94 771.2,994.5 774,994.5 779,997 781.75,994.43 784.5,994.75 787.25,992.18 790,992.5 794,990.5 797,993.65 800,995 803,993.85 806,994.5 808.8,994.5 811.6,994.5 814.4,993.6 817.2,995.4 820,994.5 823,994.43 826,997.61 829,997 831.75,996.5 834.5,996.9 837.25,994.6 840,995 843,996.1 846,999 849,999.44 852,997 854.8,998.34 857.6,996.8 860.4,996.7 863.2,995.7 866,996.5 869,999.15 872,1000 875,1001.1 878,1004 881,1004.19 884,1001.5 887,1000.06 890,1002.94 893,1001.5 896,1001.5 899.5,1004.65 903,1006 906,1003.5 909.5,1004.65 913,1004 916.5,1007.5 920,1011 923,1014.5 926,1018 931,1009 936,1007 938.67,1008.73 941.33,1010.11 944,1009.5 946.67,1008.9 949.33,1006.5 952,1005 954.67,1003.67 957.33,1002.33 960,1001 963,1001.35 966,1003.5 968.67,1002.5 971.33,1000.6 974,1000.5 979,999.5 982.5,1002.69 986,1003 989,1003.5 992,1004.9 995,1005.4 998,1005 1003,1010 1006.5,1009.5 1010,1009 1012,1012 1015,1009.9 1018,1006 1021.5,1004.5 1025,1003 1027.67,1005.11 1030.33,1003.43 1033,1005 1035.75,1003.73 1038.5,1005.15 1041.25,1003.88 1044,1003.5 1046.67,1004.1 1049.33,1006.5 1052,1008 1055,1008.1 1058,1010 1061,1009.65 1064,1007.5 1066.67,1008.17 1069.33,1007.39 1072,1009.5 1074.75,1008.1 1077.5,1008.5 1079.5,949 1082.12,949.77 1084.75,950.19 1087.38,948.62 1090,948.5 1092.67,947.67 1095.33,946.83 1098,946 1101,950.19 1104,951.5 1107,951.15 1110,949 1113,950.69 1116,950.4 1119,948.85 1122,950 1125.33,950.6 1128.67,953 1132,954.5 1134.67,953.57 1137.33,949.93 1140,949 1143,949.06 1146,952 1149,954.75 1152,957.5 1155,959.69 1158,959 1160.67,959.07 1163.33,957.33 1166,956.5 1169,953.25 1172,950 1174,958 1177,955.5 1180,953 1184,949.5 1187.33,948.56 1190.67,951.4 1194,951 1197,950.75 1200,950.5 1203,950.6 1206,952.5 1208.67,954.11 1211.33,951.93 1214,953 1216,956.5 1218.67,955.9 1221.33,952.06 1224,952 1228,957.5 1230.67,955.5 1233.33,953.5 1236,951.5 1238.67,950.93 1241.33,952.17 1244,952.5 1248,957 1250.67,955.67 1253.33,954.33 1256,953 1259,951.9 1262,949 1265.33,948.43 1268.67,948.77 1272,950 1274.67,950.57 1277.33,949.33 1280,949 1283.33,950.07 1286.67,949.33 1290,949.5 1292.67,947.43 1295.33,947.17 1298,946 1301,948.15 1304,948.5 1306.67,948.83 1309.33,949.17 1312,949.5 1315.33,949.17 1318.67,948.83 1322,948.5 1326,952 1328.67,951.17 1331.33,949.43 1334,949.5 1336.67,947.1 1339.33,945.6 1342,945 1345,942.85 1348,942.5 1351,943.25 1354,944 1357,943 1360,942 1362.67,941.73 1365.33,945.23 1368,945.5 1370.67,948.61 1373.33,947.93 1376,950.5 1379,949.75 1382,949 1386,946.5 1389,946.5 1392,945.06 1395,945.6 1398,946.5 1401,945.25 1404,944 1406.67,945.57 1409.33,945.33 1412,946 1415,947.57 1418,947.69 1421,946.38 1424,946.5 1427,943.6 1430,942.5 1432.67,943.57 1435.33,944.27 1438,943 1442,948 1445,944.81 1448,944.5 1452,947.5 1454.67,947.4 1457.33,946.4 1460,944.5 1463,943.75 1466,943 1469,944 1472,945 1475,944.5 1478,944 1481,946 1486,946" stroke="#f01010" stroke-width="1.45" fill="none" stroke-linejoin="round"/><rect x="657" y="1088.2" width="823" height="385.4" fill="#212121"/><polyline points="657,1228.13 657.45,1228.13 657.45,1244.57 658.55,1246.67 658.55,1263.11 659.45,1263.11 659.45,1246.67 660.55,1244.57 660.55,1228.13 701.28,1228.13 701.28,1244.57 702.38,1246.67 702.38,1263.11 704.56,1263.11 704.56,1246.67 705.66,1244.57 705.66,1228.13 710.15,1228.13 710.15,1244.57 711.25,1246.67 711.25,1263.11 713.86,1263.11 713.86,1246.67 714.96,1244.57 714.96,1228.13 825.45,1228.13 825.45,1211.69 826.55,1209.59 826.55,1193.15 958.81,1193.15 958.81,1176.7 959.91,1174.61 959.91,1158.16 962.81,1158.16 962.81,1174.61 963.91,1176.7 963.91,1193.15 1063.45,1193.15 1063.45,1176.7 1064.55,1174.61 1064.55,1158.16 1074.5,1158.16 1074.5,1141.72 1075.6,1139.62 1075.6,1123.18 1078.3,1123.18 1078.3,1139.62 1079.4,1141.72 1079.4,1158.16 1082.31,1158.16 1082.31,1141.72 1083.41,1139.62 1083.41,1123.18 1084.35,1123.18 1084.35,1139.62 1085.45,1141.72 1085.45,1158.16 1092.04,1158.16 1092.04,1141.72 1093.14,1139.62 1093.14,1123.18 1096.15,1123.18 1096.15,1139.62 1097.25,1141.72 1097.25,1158.16 1105.26,1158.16 1105.26,1141.72 1106.36,1139.62 1106.36,1123.18 1107.81,1123.18 1107.81,1139.62 1108.91,1141.72 1108.91,1158.16 1113.27,1158.16 1113.27,1141.72 1114.37,1139.62 1114.37,1123.18 1116.48,1123.18 1116.48,1139.62 1117.58,1141.72 1117.58,1158.16 1125.63,1158.16 1125.63,1141.72 1126.73,1139.62 1126.73,1123.18 1128.13,1123.18 1128.13,1139.62 1129.23,1141.72 1129.23,1158.16 1140.71,1158.16 1140.71,1141.72 1141.81,1139.62 1141.81,1123.18 1144.25,1123.18 1144.25,1139.62 1145.35,1141.72 1145.35,1158.16 1148.4,1158.16 1148.4,1141.72 1149.5,1139.62 1149.5,1123.18 1152.81,1123.18 1152.81,1139.62 1153.91,1141.72 1153.91,1158.16 1162.47,1158.16 1162.47,1141.72 1163.57,1139.62 1163.57,1123.18 1166.58,1123.18 1166.58,1139.62 1167.68,1141.72 1167.68,1158.16 1170.47,1158.16 1170.47,1141.72 1171.57,1139.62 1171.57,1123.18 1175.05,1123.18 1175.05,1139.62 1176.15,1141.72 1176.15,1158.16 1197.2,1158.16 1197.2,1141.72 1198.3,1139.62 1198.3,1123.18 1201.09,1123.18 1201.09,1139.62 1202.19,1141.72 1202.19,1158.16 1227.35,1158.16 1227.35,1141.72 1228.45,1139.62 1228.45,1123.18 1230.57,1123.18 1230.57,1139.62 1231.67,1141.72 1231.67,1158.16 1234.84,1158.16 1234.84,1141.72 1235.94,1139.62 1235.94,1123.18 1238.64,1123.18 1238.64,1139.62 1239.74,1141.72 1239.74,1158.16 1250.89,1158.16 1250.89,1141.72 1251.99,1139.62 1251.99,1123.18 1255.84,1123.18 1255.84,1139.62 1256.94,1141.72 1256.94,1158.16 1267.06,1158.16 1267.06,1141.72 1268.16,1139.62 1268.16,1123.18 1269.83,1123.18 1269.83,1139.62 1270.93,1141.72 1270.93,1158.16 1286.46,1158.16 1286.46,1141.72 1287.56,1139.62 1287.56,1123.18 1290.91,1123.18 1290.91,1139.62 1292.01,1141.72 1292.01,1158.16 1338.36,1158.16 1338.36,1141.72 1339.46,1139.62 1339.46,1123.18 1343.05,1123.18 1343.05,1139.62 1344.15,1141.72 1344.15,1158.16 1355.9,1158.16 1355.9,1141.72 1357,1139.62 1357,1123.18 1360.2,1123.18 1360.2,1139.62 1361.3,1141.72 1361.3,1158.16 1368.44,1158.16 1368.44,1141.72 1369.54,1139.62 1369.54,1123.18 1372.73,1123.18 1372.73,1139.62 1373.83,1141.72 1373.83,1158.16 1381.05,1158.16 1381.05,1141.72 1382.15,1139.62 1382.15,1123.18 1385.22,1123.18 1385.22,1139.62 1386.32,1141.72 1386.32,1158.16 1397.82,1158.16 1397.82,1141.72 1398.92,1139.62 1398.92,1123.18 1400.03,1123.18 1400.03,1139.62 1401.13,1141.72 1401.13,1158.16 1429.27,1158.16 1429.27,1141.72 1430.37,1139.62 1430.37,1123.18 1432.67,1123.18 1432.67,1139.62 1433.77,1141.72 1433.77,1158.16 1445.19,1158.16 1445.19,1141.72 1446.29,1139.62 1446.29,1123.18 1448.26,1123.18 1448.26,1139.62 1449.36,1141.72 1449.36,1158.16 1451.9,1158.16 1451.9,1141.72 1453,1139.62 1453,1123.18 1455.81,1123.18 1455.81,1139.62 1456.91,1141.72 1456.91,1158.16 1480,1158.16" stroke="#148a14" stroke-width="1" fill="none" stroke-linejoin="miter" shape-rendering="crispEdges"/><polyline points="657,1193.15 661.67,1193.15 661.67,1176.7 662.77,1174.61 662.77,1158.16 666.23,1158.16 666.23,1174.61 667.33,1176.7 667.33,1193.15 686.01,1193.15 686.01,1176.7 687.11,1174.61 687.11,1158.16 689.89,1158.16 689.89,1174.61 690.99,1176.7 690.99,1193.15 694.64,1193.15 694.64,1176.7 695.74,1174.61 695.74,1158.16 700.16,1158.16 700.16,1174.61 701.26,1176.7 701.26,1193.15 706.08,1193.15 706.08,1176.7 707.18,1174.61 707.18,1158.16 711.38,1158.16 711.38,1174.61 712.48,1176.7 712.48,1193.15 715.07,1193.15 715.07,1176.7 716.17,1174.61 716.17,1158.16 720.69,1158.16 720.69,1174.61 721.79,1176.7 721.79,1193.15 733.61,1193.15 733.61,1176.7 734.71,1174.61 734.71,1158.16 741.59,1158.16 741.59,1174.61 742.69,1176.7 742.69,1193.15 745.22,1193.15 745.22,1176.7 746.32,1174.61 746.32,1158.16 752.17,1158.16 752.17,1174.61 753.27,1176.7 753.27,1193.15 757.33,1193.15 757.33,1176.7 758.43,1174.61 758.43,1158.16 760.07,1158.16 760.07,1174.61 761.17,1176.7 761.17,1193.15 765.86,1193.15 765.86,1176.7 766.96,1174.61 766.96,1158.16 769.23,1158.16 769.23,1174.61 770.33,1176.7 770.33,1193.15 791.65,1193.15 791.65,1176.7 792.75,1174.61 792.75,1158.16 796.74,1158.16 796.74,1174.61 797.84,1176.7 797.84,1193.15 801.45,1193.15 801.45,1176.7 802.55,1174.61 802.55,1158.16 852.67,1158.16 852.67,1141.72 853.77,1139.62 853.77,1123.18 859.62,1123.18 859.62,1139.62 860.72,1141.72 860.72,1158.16 885.47,1158.16 885.47,1141.72 886.57,1139.62 886.57,1123.18 889.9,1123.18 889.9,1139.62 891,1141.72 891,1158.16 905.81,1158.16 905.81,1141.72 906.91,1139.62 906.91,1123.18 910.45,1123.18 910.45,1139.62 911.55,1141.72 911.55,1158.16 914.66,1158.16 914.66,1141.72 915.76,1139.62 915.76,1123.18 921.54,1123.18 921.54,1139.62 922.64,1141.72 922.64,1158.16 933.53,1158.16 933.53,1141.72 934.63,1139.62 934.63,1123.18 940.25,1123.18 940.25,1139.62 941.35,1141.72 941.35,1158.16 946.21,1158.16 946.21,1141.72 947.31,1139.62 947.31,1123.18 950.82,1123.18 950.82,1139.62 951.92,1141.72 951.92,1158.16 970.6,1158.16 970.6,1141.72 971.7,1139.62 971.7,1123.18 977.51,1123.18 977.51,1139.62 978.61,1141.72 978.61,1158.16 986.95,1158.16 986.95,1141.72 988.05,1139.62 988.05,1123.18 992.17,1123.18 992.17,1139.62 993.27,1141.72 993.27,1158.16 1000.13,1158.16 1000.13,1141.72 1001.23,1139.62 1001.23,1123.18 1005.43,1123.18 1005.43,1139.62 1006.53,1141.72 1006.53,1158.16 1014.27,1158.16 1014.27,1141.72 1015.37,1139.62 1015.37,1123.18 1018.82,1123.18 1018.82,1139.62 1019.92,1141.72 1019.92,1158.16 1023.02,1158.16 1023.02,1141.72 1024.12,1139.62 1024.12,1123.18 1025.75,1123.18 1025.75,1139.62 1026.85,1141.72 1026.85,1158.16 1055.88,1158.16 1055.88,1141.72 1056.98,1139.62 1056.98,1123.18 1060.76,1123.18 1060.76,1139.62 1061.86,1141.72 1061.86,1158.16 1066.86,1158.16 1066.86,1141.72 1067.96,1139.62 1067.96,1123.18 1069.92,1123.18 1069.92,1139.62 1071.02,1141.72 1071.02,1158.16 1096.69,1158.16 1096.69,1141.72 1097.79,1139.62 1097.79,1123.18 1099.86,1123.18 1099.86,1139.62 1100.96,1141.72 1100.96,1158.16 1104.81,1158.16 1104.81,1141.72 1105.91,1139.62 1105.91,1123.18 1107.87,1123.18 1107.87,1139.62 1108.97,1141.72 1108.97,1158.16 1287.73,1158.16 1287.73,1141.72 1288.83,1139.62 1288.83,1123.18 1289.97,1123.18 1289.97,1139.62 1291.07,1141.72 1291.07,1158.16 1480,1158.16" stroke="#a6a6a6" stroke-width="1" fill="none" stroke-linejoin="miter" shape-rendering="crispEdges"/><polyline points="657,1193.15 710.69,1193.15 710.69,1209.59 711.79,1211.69 711.79,1228.13 714.67,1228.13 714.67,1211.69 715.77,1209.59 715.77,1193.15 720.14,1193.15 720.14,1209.59 721.24,1211.69 721.24,1228.13 722.36,1228.13 722.36,1211.69 723.46,1209.59 723.46,1193.15 730.04,1193.15 730.04,1209.59 731.14,1211.69 731.14,1228.13 734.37,1228.13 734.37,1211.69 735.47,1209.59 735.47,1193.15 743.84,1193.15 743.84,1209.59 744.94,1211.69 744.94,1228.13 746.17,1228.13 746.17,1211.69 747.27,1209.59 747.27,1193.15 881.45,1193.15 881.45,1176.7 882.55,1174.61 882.55,1158.16 884.09,1158.16 884.09,1174.61 885.19,1176.7 885.19,1193.15 916.69,1193.15 916.69,1176.7 917.79,1174.61 917.79,1158.16 921.39,1158.16 921.39,1174.61 922.49,1176.7 922.49,1193.15 934.51,1193.15 934.51,1176.7 935.61,1174.61 935.61,1158.16 939.45,1158.16 939.45,1174.61 940.55,1176.7 940.55,1193.15 956.06,1193.15 956.06,1176.7 957.16,1174.61 957.16,1158.16 960.99,1158.16 960.99,1174.61 962.09,1176.7 962.09,1193.15 967.69,1193.15 967.69,1176.7 968.79,1174.61 968.79,1158.16 971.3,1158.16 971.3,1174.61 972.4,1176.7 972.4,1193.15 986.57,1193.15 986.57,1176.7 987.67,1174.61 987.67,1158.16 991.3,1158.16 991.3,1174.61 992.4,1176.7 992.4,1193.15 1002.79,1193.15 1002.79,1176.7 1003.89,1174.61 1003.89,1158.16 1005.83,1158.16 1005.83,1174.61 1006.93,1176.7 1006.93,1193.15 1019.71,1193.15 1019.71,1176.7 1020.81,1174.61 1020.81,1158.16 1023.03,1158.16 1023.03,1174.61 1024.13,1176.7 1024.13,1193.15 1033.02,1193.15 1033.02,1176.7 1034.12,1174.61 1034.12,1158.16 1037.33,1158.16 1037.33,1174.61 1038.43,1176.7 1038.43,1193.15 1108.64,1193.15 1108.64,1176.7 1109.74,1174.61 1109.74,1158.16 1110.77,1158.16 1110.77,1174.61 1111.87,1176.7 1111.87,1193.15 1127.92,1193.15 1127.92,1176.7 1129.02,1174.61 1129.02,1158.16 1131.52,1158.16 1131.52,1174.61 1132.62,1176.7 1132.62,1193.15 1141.43,1193.15 1141.43,1176.7 1142.53,1174.61 1142.53,1158.16 1143.78,1158.16 1143.78,1174.61 1144.88,1176.7 1144.88,1193.15 1228.8,1193.15 1228.8,1176.7 1229.9,1174.61 1229.9,1158.16 1232.59,1158.16 1232.59,1174.61 1233.69,1176.7 1233.69,1193.15 1299.45,1193.15 1299.45,1176.7 1300.55,1174.61 1300.55,1158.16 1387.45,1158.16 1387.45,1141.72 1388.55,1139.62 1388.55,1123.18 1390.45,1123.18 1390.45,1139.62 1391.55,1141.72 1391.55,1158.16 1480,1158.16" stroke="#4a4aec" stroke-width="1" fill="none" stroke-linejoin="miter" shape-rendering="crispEdges"/><polyline points="657,1228.13 673.07,1228.13 673.07,1211.69 674.17,1209.59 674.17,1193.15 677.2,1193.15 677.2,1209.59 678.3,1211.69 678.3,1228.13 691.1,1228.13 691.1,1211.69 692.2,1209.59 692.2,1193.15 693.93,1193.15 693.93,1209.59 695.03,1211.69 695.03,1228.13 697.89,1228.13 697.89,1211.69 698.99,1209.59 698.99,1193.15 701.24,1193.15 701.24,1209.59 702.34,1211.69 702.34,1228.13 709.1,1228.13 709.1,1211.69 710.2,1209.59 710.2,1193.15 711.74,1193.15 711.74,1209.59 712.84,1211.69 712.84,1228.13 717.76,1228.13 717.76,1211.69 718.86,1209.59 718.86,1193.15 721,1193.15 721,1209.59 722.1,1211.69 722.1,1228.13 725.45,1228.13 725.45,1195.24 726.55,1191.05 726.55,1158.16 727.45,1158.16 727.45,1191.05 728.55,1195.24 728.55,1228.13 740.05,1228.13 740.05,1211.69 741.15,1209.59 741.15,1193.15 743.53,1193.15 743.53,1209.59 744.63,1211.69 744.63,1228.13 747.48,1228.13 747.48,1211.69 748.58,1209.59 748.58,1193.15 752.42,1193.15 752.42,1209.59 753.52,1211.69 753.52,1228.13 761.45,1228.13 761.45,1211.69 762.55,1209.59 762.55,1193.15 867.31,1193.15 867.31,1176.7 868.41,1174.61 868.41,1158.16 870.45,1158.16 870.45,1174.61 871.55,1176.7 871.55,1193.15 907.26,1193.15 907.26,1176.7 908.36,1174.61 908.36,1158.16 909.3,1158.16 909.3,1174.61 910.4,1176.7 910.4,1193.15 916.95,1193.15 916.95,1176.7 918.05,1174.61 918.05,1158.16 919.22,1158.16 919.22,1174.61 920.32,1176.7 920.32,1193.15 1014,1193.15 1014,1176.7 1015.1,1174.61 1015.1,1158.16 1017.05,1158.16 1017.05,1174.61 1018.15,1176.7 1018.15,1193.15 1224.27,1193.15 1224.27,1176.7 1225.37,1174.61 1225.37,1158.16 1228.48,1158.16 1228.48,1174.61 1229.58,1176.7 1229.58,1193.15 1248.24,1193.15 1248.24,1176.7 1249.34,1174.61 1249.34,1158.16 1251.93,1158.16 1251.93,1174.61 1253.03,1176.7 1253.03,1193.15 1259.2,1193.15 1259.2,1176.7 1260.3,1174.61 1260.3,1158.16 1262.15,1158.16 1262.15,1174.61 1263.25,1176.7 1263.25,1193.15 1269.89,1193.15 1269.89,1176.7 1270.99,1174.61 1270.99,1158.16 1274.18,1158.16 1274.18,1174.61 1275.28,1176.7 1275.28,1193.15 1295.45,1193.15 1295.45,1176.7 1296.55,1174.61 1296.55,1158.16 1480,1158.16" stroke="#f2a212" stroke-width="1" fill="none" stroke-linejoin="miter" shape-rendering="crispEdges"/><polyline points="657,1228.13 675.45,1228.13 675.45,1211.69 676.55,1209.59 676.55,1193.15 678.45,1193.15 678.45,1209.59 679.55,1211.69 679.55,1228.13 693.75,1228.13 693.75,1211.69 694.85,1209.59 694.85,1193.15 695.96,1193.15 695.96,1209.59 697.06,1211.69 697.06,1228.13 709.13,1228.13 709.13,1211.69 710.23,1209.59 710.23,1193.15 712.33,1193.15 712.33,1209.59 713.43,1211.69 713.43,1228.13 722.47,1228.13 722.47,1211.69 723.57,1209.59 723.57,1193.15 725.63,1193.15 725.63,1209.59 726.73,1211.69 726.73,1228.13 734.45,1228.13 734.45,1211.69 735.55,1209.59 735.55,1193.15 915.5,1193.15 915.5,1209.59 916.6,1211.69 916.6,1228.13 919.48,1228.13 919.48,1211.69 920.58,1209.59 920.58,1193.15 933.16,1193.15 933.16,1209.59 934.26,1211.69 934.26,1228.13 935.59,1228.13 935.59,1211.69 936.69,1209.59 936.69,1193.15 962.53,1193.15 962.53,1209.59 963.63,1211.69 963.63,1228.13 965.05,1228.13 965.05,1211.69 966.15,1209.59 966.15,1193.15 1002.14,1193.15 1002.14,1209.59 1003.24,1211.69 1003.24,1228.13 1005.69,1228.13 1005.69,1211.69 1006.79,1209.59 1006.79,1193.15 1036.15,1193.15 1036.15,1209.59 1037.25,1211.69 1037.25,1228.13 1038.81,1228.13 1038.81,1211.69 1039.91,1209.59 1039.91,1193.15 1309.53,1193.15 1309.53,1176.7 1310.63,1174.61 1310.63,1158.16 1312.24,1158.16 1312.24,1174.61 1313.34,1176.7 1313.34,1193.15 1320.04,1193.15 1320.04,1176.7 1321.14,1174.61 1321.14,1158.16 1325.33,1158.16 1325.33,1174.61 1326.43,1176.7 1326.43,1193.15 1339.86,1193.15 1339.86,1176.7 1340.96,1174.61 1340.96,1158.16 1343.03,1158.16 1343.03,1174.61 1344.13,1176.7 1344.13,1193.15 1348.57,1193.15 1348.57,1176.7 1349.67,1174.61 1349.67,1158.16 1351.53,1158.16 1351.53,1174.61 1352.63,1176.7 1352.63,1193.15 1357.67,1193.15 1357.67,1176.7 1358.77,1174.61 1358.77,1158.16 1362.43,1158.16 1362.43,1174.61 1363.53,1176.7 1363.53,1193.15 1367.08,1193.15 1367.08,1176.7 1368.18,1174.61 1368.18,1158.16 1369.98,1158.16 1369.98,1174.61 1371.08,1176.7 1371.08,1193.15 1377.6,1193.15 1377.6,1176.7 1378.7,1174.61 1378.7,1158.16 1381.57,1158.16 1381.57,1174.61 1382.67,1176.7 1382.67,1193.15 1400.72,1193.15 1400.72,1176.7 1401.82,1174.61 1401.82,1158.16 1403.97,1158.16 1403.97,1174.61 1405.07,1176.7 1405.07,1193.15 1419.37,1193.15 1419.37,1176.7 1420.47,1174.61 1420.47,1158.16 1422.81,1158.16 1422.81,1174.61 1423.91,1176.7 1423.91,1193.15 1441.44,1193.15 1441.44,1176.7 1442.54,1174.61 1442.54,1158.16 1446.75,1158.16 1446.75,1174.61 1447.85,1176.7 1447.85,1193.15 1480,1193.15" stroke="#a8d808" stroke-width="1" fill="none" stroke-linejoin="miter" shape-rendering="crispEdges"/><polyline points="657,1193.15 740.45,1193.15 740.45,1209.59 741.55,1211.69 741.55,1228.13 742.95,1228.13 742.95,1211.69 744.05,1209.59 744.05,1193.15 832.78,1193.15 832.78,1176.7 833.88,1174.61 833.88,1158.16 836.22,1158.16 836.22,1174.61 837.32,1176.7 837.32,1193.15 846.29,1193.15 846.29,1176.7 847.39,1174.61 847.39,1158.16 852.62,1158.16 852.62,1174.61 853.72,1176.7 853.72,1193.15 866.36,1193.15 866.36,1176.7 867.46,1174.61 867.46,1158.16 871.22,1158.16 871.22,1174.61 872.32,1176.7 872.32,1193.15 883.41,1193.15 883.41,1176.7 884.51,1174.61 884.51,1158.16 888.49,1158.16 888.49,1174.61 889.59,1176.7 889.59,1193.15 905.99,1193.15 905.99,1176.7 907.09,1174.61 907.09,1158.16 910.9,1158.16 910.9,1174.61 912,1176.7 912,1193.15 933.61,1193.15 933.61,1176.7 934.71,1174.61 934.71,1158.16 938.37,1158.16 938.37,1174.61 939.47,1176.7 939.47,1193.15 942.06,1193.15 942.06,1176.7 943.16,1174.61 943.16,1158.16 948.92,1158.16 948.92,1174.61 950.02,1176.7 950.02,1193.15 969.89,1193.15 969.89,1176.7 970.99,1174.61 970.99,1158.16 974.19,1158.16 974.19,1174.61 975.29,1176.7 975.29,1193.15 982.41,1193.15 982.41,1176.7 983.51,1174.61 983.51,1158.16 988.52,1158.16 988.52,1174.61 989.62,1176.7 989.62,1193.15 992.2,1193.15 992.2,1176.7 993.3,1174.61 993.3,1158.16 996.91,1158.16 996.91,1174.61 998.01,1176.7 998.01,1193.15 1019.76,1193.15 1019.76,1176.7 1020.86,1174.61 1020.86,1158.16 1025.37,1158.16 1025.37,1174.61 1026.47,1176.7 1026.47,1193.15 1034.78,1193.15 1034.78,1176.7 1035.88,1174.61 1035.88,1158.16 1039.14,1158.16 1039.14,1174.61 1040.24,1176.7 1040.24,1193.15 1046,1193.15 1046,1176.7 1047.1,1174.61 1047.1,1158.16 1052.8,1158.16 1052.8,1174.61 1053.9,1176.7 1053.9,1193.15 1061.45,1193.15 1061.45,1176.7 1062.55,1174.61 1062.55,1158.16 1077.7,1158.16 1077.7,1141.72 1078.8,1139.62 1078.8,1123.18 1082.36,1123.18 1082.36,1139.62 1083.46,1141.72 1083.46,1158.16 1085.96,1158.16 1085.96,1141.72 1087.06,1139.62 1087.06,1123.18 1091.69,1123.18 1091.69,1139.62 1092.79,1141.72 1092.79,1158.16 1095.91,1158.16 1095.91,1141.72 1097.01,1139.62 1097.01,1123.18 1098.86,1123.18 1098.86,1139.62 1099.96,1141.72 1099.96,1158.16 1116.96,1158.16 1116.96,1141.72 1118.06,1139.62 1118.06,1123.18 1119.54,1123.18 1119.54,1139.62 1120.64,1141.72 1120.64,1158.16 1165.86,1158.16 1165.86,1141.72 1166.96,1139.62 1166.96,1123.18 1170.77,1123.18 1170.77,1139.62 1171.87,1141.72 1171.87,1158.16 1176.72,1158.16 1176.72,1141.72 1177.82,1139.62 1177.82,1123.18 1180.35,1123.18 1180.35,1139.62 1181.45,1141.72 1181.45,1158.16 1263.13,1158.16 1263.13,1141.72 1264.23,1139.62 1264.23,1123.18 1266.72,1123.18 1266.72,1139.62 1267.82,1141.72 1267.82,1158.16 1271.37,1158.16 1271.37,1141.72 1272.47,1139.62 1272.47,1123.18 1274.63,1123.18 1274.63,1139.62 1275.73,1141.72 1275.73,1158.16 1330.22,1158.16 1330.22,1141.72 1331.32,1139.62 1331.32,1123.18 1334.28,1123.18 1334.28,1139.62 1335.38,1141.72 1335.38,1158.16 1407.21,1158.16 1407.21,1141.72 1408.31,1139.62 1408.31,1123.18 1410.62,1123.18 1410.62,1139.62 1411.72,1141.72 1411.72,1158.16 1480,1158.16" stroke="#46ece6" stroke-width="1" fill="none" stroke-linejoin="miter" shape-rendering="crispEdges"/><polyline points="657,1193.15 669.73,1193.15 669.73,1209.59 670.83,1211.69 670.83,1228.13 672.47,1228.13 672.47,1211.69 673.57,1209.59 673.57,1193.15 681.03,1193.15 681.03,1209.59 682.13,1211.69 682.13,1228.13 685.25,1228.13 685.25,1211.69 686.35,1209.59 686.35,1193.15 693.47,1193.15 693.47,1209.59 694.57,1211.69 694.57,1228.13 696.06,1228.13 696.06,1211.69 697.16,1209.59 697.16,1193.15 700.94,1193.15 700.94,1209.59 702.04,1211.69 702.04,1228.13 705.79,1228.13 705.79,1211.69 706.89,1209.59 706.89,1193.15 711.49,1193.15 711.49,1209.59 712.59,1211.69 712.59,1228.13 716.14,1228.13 716.14,1211.69 717.24,1209.59 717.24,1193.15 722.9,1193.15 722.9,1209.59 724,1211.69 724,1228.13 726.71,1228.13 726.71,1211.69 727.81,1209.59 727.81,1193.15 739.89,1193.15 739.89,1209.59 740.99,1211.69 740.99,1228.13 742.2,1228.13 742.2,1211.69 743.3,1209.59 743.3,1193.15 773.94,1193.15 773.94,1209.59 775.04,1211.69 775.04,1228.13 776.66,1228.13 776.66,1211.69 777.76,1209.59 777.76,1193.15 780.76,1193.15 780.76,1209.59 781.86,1211.69 781.86,1228.13 784.88,1228.13 784.88,1211.69 785.98,1209.59 785.98,1193.15 793.73,1193.15 793.73,1209.59 794.83,1211.69 794.83,1228.13 798.2,1228.13 798.2,1211.69 799.3,1209.59 799.3,1193.15 840.88,1193.15 840.88,1176.7 841.98,1174.61 841.98,1158.16 846.8,1158.16 846.8,1174.61 847.9,1176.7 847.9,1193.15 851.69,1193.15 851.69,1176.7 852.79,1174.61 852.79,1158.16 856.45,1158.16 856.45,1174.61 857.55,1176.7 857.55,1193.15 864.69,1193.15 864.69,1176.7 865.79,1174.61 865.79,1158.16 869.02,1158.16 869.02,1174.61 870.12,1176.7 870.12,1193.15 873.76,1193.15 873.76,1176.7 874.86,1174.61 874.86,1158.16 876.33,1158.16 876.33,1174.61 877.43,1176.7 877.43,1193.15 884.73,1193.15 884.73,1176.7 885.83,1174.61 885.83,1158.16 890.37,1158.16 890.37,1174.61 891.47,1176.7 891.47,1193.15 895.46,1193.15 895.46,1176.7 896.56,1174.61 896.56,1158.16 901.31,1158.16 901.31,1174.61 902.41,1176.7 902.41,1193.15 912.41,1193.15 912.41,1176.7 913.51,1174.61 913.51,1158.16 916.96,1158.16 916.96,1174.61 918.06,1176.7 918.06,1193.15 929.71,1193.15 929.71,1176.7 930.81,1174.61 930.81,1158.16 934.63,1158.16 934.63,1174.61 935.73,1176.7 935.73,1193.15 953.24,1193.15 953.24,1176.7 954.34,1174.61 954.34,1158.16 956.51,1158.16 956.51,1174.61 957.61,1176.7 957.61,1193.15 960.92,1193.15 960.92,1176.7 962.02,1174.61 962.02,1158.16 963.22,1158.16 963.22,1174.61 964.32,1176.7 964.32,1193.15 986.56,1193.15 986.56,1176.7 987.66,1174.61 987.66,1158.16 991.51,1158.16 991.51,1174.61 992.61,1176.7 992.61,1193.15 1013.9,1193.15 1013.9,1176.7 1015,1174.61 1015,1158.16 1019.5,1158.16 1019.5,1174.61 1020.6,1176.7 1020.6,1193.15 1027.34,1193.15 1027.34,1176.7 1028.44,1174.61 1028.44,1158.16 1032.16,1158.16 1032.16,1174.61 1033.26,1176.7 1033.26,1193.15 1085.45,1193.15 1085.45,1176.7 1086.55,1174.61 1086.55,1158.16 1107.81,1158.16 1107.81,1174.61 1108.91,1176.7 1108.91,1193.15 1112.29,1193.15 1112.29,1176.7 1113.39,1174.61 1113.39,1158.16 1163.22,1158.16 1163.22,1174.61 1164.32,1176.7 1164.32,1193.15 1169.5,1193.15 1169.5,1176.7 1170.6,1174.61 1170.6,1158.16 1176.55,1158.16 1176.55,1174.61 1177.65,1176.7 1177.65,1193.15 1179.18,1193.15 1179.18,1176.7 1180.28,1174.61 1180.28,1158.16 1208.3,1158.16 1208.3,1174.61 1209.4,1176.7 1209.4,1193.15 1213.51,1193.15 1213.51,1176.7 1214.61,1174.61 1214.61,1158.16 1218.94,1158.16 1218.94,1174.61 1220.04,1176.7 1220.04,1193.15 1223.68,1193.15 1223.68,1176.7 1224.78,1174.61 1224.78,1158.16 1231.22,1158.16 1231.22,1174.61 1232.32,1176.7 1232.32,1193.15 1237.86,1193.15 1237.86,1176.7 1238.96,1174.61 1238.96,1158.16 1241.4,1158.16 1241.4,1174.61 1242.5,1176.7 1242.5,1193.15 1243.95,1193.15 1243.95,1176.7 1245.05,1174.61 1245.05,1158.16 1252.72,1158.16 1252.72,1174.61 1253.82,1176.7 1253.82,1193.15 1256.57,1193.15 1256.57,1176.7 1257.67,1174.61 1257.67,1158.16 1267.6,1158.16 1267.6,1174.61 1268.7,1176.7 1268.7,1193.15 1271.01,1193.15 1271.01,1176.7 1272.11,1174.61 1272.11,1158.16 1275.22,1158.16 1275.22,1174.61 1276.32,1176.7 1276.32,1193.15 1280.69,1193.15 1280.69,1176.7 1281.79,1174.61 1281.79,1158.16 1480,1158.16" stroke="#c862f0" stroke-width="1" fill="none" stroke-linejoin="miter" shape-rendering="crispEdges"/><polyline points="657,1123.18 662.45,1123.18 662.45,1106.74 663.55,1104.64 663.55,1088.2 671.95,1088.2 671.95,1104.64 673.05,1106.74 673.05,1123.18 683.45,1123.18 683.45,1106.74 684.55,1104.64 684.55,1088.2 706.45,1088.2 706.45,1104.64 707.55,1106.74 707.55,1123.18 732.88,1123.18 732.88,1139.62 733.98,1141.72 733.98,1158.16 737.05,1158.16 737.05,1141.72 738.15,1139.62 738.15,1123.18 754.29,1123.18 754.29,1139.62 755.39,1141.72 755.39,1158.16 756.64,1158.16 756.64,1141.72 757.74,1139.62 757.74,1123.18 770.95,1123.18 770.95,1106.74 772.05,1104.64 772.05,1088.2 776.45,1088.2 776.45,1104.64 777.55,1106.74 777.55,1123.18 783.99,1123.18 783.99,1139.62 785.09,1141.72 785.09,1158.16 788.69,1158.16 788.69,1141.72 789.79,1139.62 789.79,1123.18 804.1,1123.18 804.1,1139.62 805.2,1141.72 805.2,1158.16 808.3,1158.16 808.3,1141.72 809.4,1139.62 809.4,1123.18 819.45,1123.18 819.45,1172.51 820.55,1178.8 820.55,1228.13 827.45,1228.13 827.45,1178.8 828.55,1172.51 828.55,1123.18 837.45,1123.18 837.45,1106.74 838.55,1104.64 838.55,1088.2 840.95,1088.2 840.95,1104.64 842.05,1106.74 842.05,1123.18 844.89,1123.18 844.89,1156.06 845.99,1160.26 845.99,1193.15 847.09,1193.15 847.09,1160.26 848.19,1156.06 848.19,1123.18 851.95,1123.18 851.95,1106.74 853.05,1104.64 853.05,1088.2 859.95,1088.2 859.95,1104.64 861.05,1106.74 861.05,1123.18 864.02,1123.18 864.02,1139.62 865.12,1141.72 865.12,1158.16 866.86,1158.16 866.86,1141.72 867.96,1139.62 867.96,1123.18 894.45,1123.18 894.45,1172.51 895.55,1178.8 895.55,1228.13 896.95,1228.13 896.95,1178.8 898.05,1172.51 898.05,1123.18 905.98,1123.18 905.98,1156.06 907.08,1160.26 907.08,1193.15 908.14,1193.15 908.14,1160.26 909.24,1156.06 909.24,1123.18 911.51,1123.18 911.51,1139.62 912.61,1141.72 912.61,1158.16 914.89,1158.16 914.89,1141.72 915.99,1139.62 915.99,1123.18 920.62,1123.18 920.62,1139.62 921.72,1141.72 921.72,1158.16 925.6,1158.16 925.6,1141.72 926.7,1139.62 926.7,1123.18 931.39,1123.18 931.39,1139.62 932.49,1141.72 932.49,1158.16 936.74,1158.16 936.74,1141.72 937.84,1139.62 937.84,1123.18 941.69,1123.18 941.69,1156.06 942.79,1160.26 942.79,1193.15 943.86,1193.15 943.86,1160.26 944.96,1156.06 944.96,1123.18 950.37,1123.18 950.37,1106.74 951.47,1104.64 951.47,1088.2 956.92,1088.2 956.92,1104.64 958.02,1106.74 958.02,1123.18 973.13,1123.18 973.13,1156.06 974.23,1160.26 974.23,1193.15 976.25,1193.15 976.25,1160.26 977.35,1156.06 977.35,1123.18 986.11,1123.18 986.11,1139.62 987.21,1141.72 987.21,1158.16 991.19,1158.16 991.19,1141.72 992.29,1139.62 992.29,1123.18 994.81,1123.18 994.81,1156.06 995.91,1160.26 995.91,1193.15 997.78,1193.15 997.78,1160.26 998.88,1156.06 998.88,1123.18 1018.23,1123.18 1018.23,1139.62 1019.33,1141.72 1019.33,1158.16 1021.09,1158.16 1021.09,1141.72 1022.19,1139.62 1022.19,1123.18 1029.95,1123.18 1029.95,1106.74 1031.05,1104.64 1031.05,1088.2 1037.52,1088.2 1037.52,1104.64 1038.62,1106.74 1038.62,1123.18 1052.56,1123.18 1052.56,1139.62 1053.66,1141.72 1053.66,1158.16 1055.59,1158.16 1055.59,1141.72 1056.69,1139.62 1056.69,1123.18 1087.43,1123.18 1087.43,1139.62 1088.53,1141.72 1088.53,1158.16 1091.44,1158.16 1091.44,1141.72 1092.54,1139.62 1092.54,1123.18 1108.51,1123.18 1108.51,1156.06 1109.61,1160.26 1109.61,1193.15 1111.33,1193.15 1111.33,1160.26 1112.43,1156.06 1112.43,1123.18 1117.48,1123.18 1117.48,1106.74 1118.58,1104.64 1118.58,1088.2 1123.01,1088.2 1123.01,1104.64 1124.11,1106.74 1124.11,1123.18 1136.8,1123.18 1136.8,1139.62 1137.9,1141.72 1137.9,1158.16 1139.76,1158.16 1139.76,1141.72 1140.86,1139.62 1140.86,1123.18 1153.85,1123.18 1153.85,1106.74 1154.95,1104.64 1154.95,1088.2 1159.59,1088.2 1159.59,1104.64 1160.69,1106.74 1160.69,1123.18 1171.09,1123.18 1171.09,1106.74 1172.19,1104.64 1172.19,1088.2 1177.7,1088.2 1177.7,1104.64 1178.8,1106.74 1178.8,1123.18 1182.03,1123.18 1182.03,1106.74 1183.13,1104.64 1183.13,1088.2 1188.25,1088.2 1188.25,1104.64 1189.35,1106.74 1189.35,1123.18 1192.77,1123.18 1192.77,1139.62 1193.87,1141.72 1193.87,1158.16 1194.79,1158.16 1194.79,1141.72 1195.89,1139.62 1195.89,1123.18 1204.22,1123.18 1204.22,1106.74 1205.32,1104.64 1205.32,1088.2 1210.56,1088.2 1210.56,1104.64 1211.66,1106.74 1211.66,1123.18 1226.6,1123.18 1226.6,1106.74 1227.7,1104.64 1227.7,1088.2 1232.85,1088.2 1232.85,1104.64 1233.95,1106.74 1233.95,1123.18 1236.77,1123.18 1236.77,1106.74 1237.87,1104.64 1237.87,1088.2 1242.15,1088.2 1242.15,1104.64 1243.25,1106.74 1243.25,1123.18 1260.21,1123.18 1260.21,1139.62 1261.31,1141.72 1261.31,1158.16 1263.13,1158.16 1263.13,1141.72 1264.23,1139.62 1264.23,1123.18 1287.1,1123.18 1287.1,1106.74 1288.2,1104.64 1288.2,1088.2 1293.21,1088.2 1293.21,1104.64 1294.31,1106.74 1294.31,1123.18 1296.89,1123.18 1296.89,1106.74 1297.99,1104.64 1297.99,1088.2 1301.28,1088.2 1301.28,1104.64 1302.38,1106.74 1302.38,1123.18 1305.62,1123.18 1305.62,1106.74 1306.72,1104.64 1306.72,1088.2 1312.58,1088.2 1312.58,1104.64 1313.68,1106.74 1313.68,1123.18 1333.66,1123.18 1333.66,1106.74 1334.76,1104.64 1334.76,1088.2 1337.08,1088.2 1337.08,1104.64 1338.18,1106.74 1338.18,1123.18 1355.78,1123.18 1355.78,1139.62 1356.88,1141.72 1356.88,1158.16 1358.17,1158.16 1358.17,1141.72 1359.27,1139.62 1359.27,1123.18 1371.97,1123.18 1371.97,1139.62 1373.07,1141.72 1373.07,1158.16 1374.77,1158.16 1374.77,1141.72 1375.87,1139.62 1375.87,1123.18 1384.98,1123.18 1384.98,1106.74 1386.08,1104.64 1386.08,1088.2 1388,1088.2 1388,1104.64 1389.1,1106.74 1389.1,1123.18 1394.16,1123.18 1394.16,1106.74 1395.26,1104.64 1395.26,1088.2 1400.15,1088.2 1400.15,1104.64 1401.25,1106.74 1401.25,1123.18 1413.15,1123.18 1413.15,1106.74 1414.25,1104.64 1414.25,1088.2 1418.27,1088.2 1418.27,1104.64 1419.37,1106.74 1419.37,1123.18 1424.19,1123.18 1424.19,1139.62 1425.29,1141.72 1425.29,1158.16 1428.37,1158.16 1428.37,1141.72 1429.47,1139.62 1429.47,1123.18 1434.98,1123.18 1434.98,1139.62 1436.08,1141.72 1436.08,1158.16 1438.27,1158.16 1438.27,1141.72 1439.37,1139.62 1439.37,1123.18 1448.35,1123.18 1448.35,1139.62 1449.45,1141.72 1449.45,1158.16 1451.95,1158.16 1451.95,1141.72 1453.05,1139.62 1453.05,1123.18 1464.25,1123.18 1464.25,1106.74 1465.35,1104.64 1465.35,1088.2 1467.73,1088.2 1467.73,1104.64 1468.83,1106.74 1468.83,1123.18 1480,1123.18" stroke="#e01212" stroke-width="1" fill="none" stroke-linejoin="miter" shape-rendering="crispEdges"/><polyline points="657,1123.18 658.45,1123.18 658.45,1139.62 659.55,1141.72 659.55,1158.16 661.45,1158.16 661.45,1141.72 662.55,1139.62 662.55,1123.18 663.45,1123.18 663.45,1139.62 664.55,1141.72 664.55,1158.16 670.45,1158.16 670.45,1141.72 671.55,1139.62 671.55,1123.18 674.68,1123.18 674.68,1139.62 675.78,1141.72 675.78,1158.16 677.49,1158.16 677.49,1141.72 678.59,1139.62 678.59,1123.18 694.65,1123.18 694.65,1139.62 695.75,1141.72 695.75,1158.16 698.8,1158.16 698.8,1141.72 699.9,1139.62 699.9,1123.18 738.45,1123.18 738.45,1139.62 739.55,1141.72 739.55,1158.16 741.45,1158.16 741.45,1141.72 742.55,1139.62 742.55,1123.18 846.03,1123.18 846.03,1139.62 847.13,1141.72 847.13,1158.16 848.96,1158.16 848.96,1141.72 850.06,1139.62 850.06,1123.18 874.18,1123.18 874.18,1106.74 875.28,1104.64 875.28,1088.2 880.44,1088.2 880.44,1104.64 881.54,1106.74 881.54,1123.18 885.46,1123.18 885.46,1106.74 886.56,1104.64 886.56,1088.2 891.61,1088.2 891.61,1104.64 892.71,1106.74 892.71,1123.18 905.48,1123.18 905.48,1106.74 906.58,1104.64 906.58,1088.2 913.47,1088.2 913.47,1104.64 914.57,1106.74 914.57,1123.18 921.77,1123.18 921.77,1106.74 922.87,1104.64 922.87,1088.2 925.22,1088.2 925.22,1104.64 926.32,1106.74 926.32,1123.18 941.22,1123.18 941.22,1106.74 942.32,1104.64 942.32,1088.2 946.06,1088.2 946.06,1104.64 947.16,1106.74 947.16,1123.18 953.46,1123.18 953.46,1106.74 954.56,1104.64 954.56,1088.2 958.62,1088.2 958.62,1104.64 959.72,1106.74 959.72,1123.18 1011.57,1123.18 1011.57,1106.74 1012.67,1104.64 1012.67,1088.2 1016.48,1088.2 1016.48,1104.64 1017.58,1106.74 1017.58,1123.18 1084.45,1123.18 1084.45,1106.74 1085.55,1104.64 1085.55,1088.2 1091.53,1088.2 1091.53,1104.64 1092.63,1106.74 1092.63,1123.18 1096.34,1123.18 1096.34,1106.74 1097.44,1104.64 1097.44,1088.2 1115.8,1088.2 1115.8,1104.64 1116.9,1106.74 1116.9,1123.18 1121.75,1123.18 1121.75,1106.74 1122.85,1104.64 1122.85,1088.2 1135.85,1088.2 1135.85,1104.64 1136.95,1106.74 1136.95,1123.18 1140.21,1123.18 1140.21,1106.74 1141.31,1104.64 1141.31,1088.2 1148.71,1088.2 1148.71,1104.64 1149.81,1106.74 1149.81,1123.18 1153.02,1123.18 1153.02,1106.74 1154.12,1104.64 1154.12,1088.2 1157.6,1088.2 1157.6,1104.64 1158.7,1106.74 1158.7,1123.18 1163.25,1123.18 1163.25,1106.74 1164.35,1104.64 1164.35,1088.2 1168.07,1088.2 1168.07,1104.64 1169.17,1106.74 1169.17,1123.18 1174.13,1123.18 1174.13,1106.74 1175.23,1104.64 1175.23,1088.2 1180.07,1088.2 1180.07,1104.64 1181.17,1106.74 1181.17,1123.18 1185.31,1123.18 1185.31,1106.74 1186.41,1104.64 1186.41,1088.2 1200.7,1088.2 1200.7,1104.64 1201.8,1106.74 1201.8,1123.18 1204.69,1123.18 1204.69,1106.74 1205.79,1104.64 1205.79,1088.2 1215.92,1088.2 1215.92,1104.64 1217.02,1106.74 1217.02,1123.18 1221.34,1123.18 1221.34,1106.74 1222.44,1104.64 1222.44,1088.2 1234.09,1088.2 1234.09,1104.64 1235.19,1106.74 1235.19,1123.18 1238.88,1123.18 1238.88,1106.74 1239.98,1104.64 1239.98,1088.2 1244.34,1088.2 1244.34,1104.64 1245.44,1106.74 1245.44,1123.18 1249.59,1123.18 1249.59,1106.74 1250.69,1104.64 1250.69,1088.2 1253.98,1088.2 1253.98,1104.64 1255.08,1106.74 1255.08,1123.18 1259.93,1123.18 1259.93,1106.74 1261.03,1104.64 1261.03,1088.2 1266.1,1088.2 1266.1,1104.64 1267.2,1106.74 1267.2,1123.18 1272.67,1123.18 1272.67,1106.74 1273.77,1104.64 1273.77,1088.2 1297.96,1088.2 1297.96,1104.64 1299.06,1106.74 1299.06,1123.18 1302.93,1123.18 1302.93,1106.74 1304.03,1104.64 1304.03,1088.2 1306.95,1088.2 1306.95,1104.64 1308.05,1106.74 1308.05,1123.18 1311.03,1123.18 1311.03,1106.74 1312.13,1104.64 1312.13,1088.2 1318.62,1088.2 1318.62,1104.64 1319.72,1106.74 1319.72,1123.18 1321.76,1123.18 1321.76,1106.74 1322.86,1104.64 1322.86,1088.2 1327.72,1088.2 1327.72,1104.64 1328.82,1106.74 1328.82,1123.18 1333.43,1123.18 1333.43,1106.74 1334.53,1104.64 1334.53,1088.2 1347.46,1088.2 1347.46,1104.64 1348.56,1106.74 1348.56,1123.18 1354.4,1123.18 1354.4,1106.74 1355.5,1104.64 1355.5,1088.2 1363.68,1088.2 1363.68,1104.64 1364.78,1106.74 1364.78,1123.18 1369.4,1123.18 1369.4,1106.74 1370.5,1104.64 1370.5,1088.2 1399.24,1088.2 1399.24,1104.64 1400.34,1106.74 1400.34,1123.18 1404.56,1123.18 1404.56,1106.74 1405.66,1104.64 1405.66,1088.2 1409.94,1088.2 1409.94,1104.64 1411.04,1106.74 1411.04,1123.18 1413.33,1123.18 1413.33,1106.74 1414.43,1104.64 1414.43,1088.2 1446.49,1088.2 1446.49,1104.64 1447.59,1106.74 1447.59,1123.18 1450.09,1123.18 1450.09,1106.74 1451.19,1104.64 1451.19,1088.2 1456.01,1088.2 1456.01,1104.64 1457.11,1106.74 1457.11,1123.18 1461.11,1123.18 1461.11,1106.74 1462.21,1104.64 1462.21,1088.2 1480,1088.2" stroke="#f2429e" stroke-width="1" fill="none" stroke-linejoin="miter" shape-rendering="crispEdges"/><polyline points="657,1123.18 696.8,1123.18 696.8,1139.62 697.9,1141.72 697.9,1158.16 699.72,1158.16 699.72,1141.72 700.82,1139.62 700.82,1123.18 704.16,1123.18 704.16,1139.62 705.26,1141.72 705.26,1158.16 707.65,1158.16 707.65,1141.72 708.75,1139.62 708.75,1123.18 713.38,1123.18 713.38,1139.62 714.48,1141.72 714.48,1158.16 721.05,1158.16 721.05,1141.72 722.15,1139.62 722.15,1123.18 727.45,1123.18 727.45,1106.74 728.55,1104.64 728.55,1088.2 730.45,1088.2 730.45,1104.64 731.55,1106.74 731.55,1123.18 746.03,1123.18 746.03,1139.62 747.13,1141.72 747.13,1158.16 750.22,1158.16 750.22,1141.72 751.32,1139.62 751.32,1123.18 778.1,1123.18 778.1,1139.62 779.2,1141.72 779.2,1158.16 780.69,1158.16 780.69,1141.72 781.79,1139.62 781.79,1123.18 787.4,1123.18 787.4,1139.62 788.5,1141.72 788.5,1158.16 790.69,1158.16 790.69,1141.72 791.79,1139.62 791.79,1123.18 820.84,1123.18 820.84,1139.62 821.94,1141.72 821.94,1158.16 825.29,1158.16 825.29,1141.72 826.39,1139.62 826.39,1123.18 847.35,1123.18 847.35,1139.62 848.45,1141.72 848.45,1158.16 853.92,1158.16 853.92,1141.72 855.02,1139.62 855.02,1123.18 876.84,1123.18 876.84,1139.62 877.94,1141.72 877.94,1158.16 880.78,1158.16 880.78,1141.72 881.88,1139.62 881.88,1123.18 893.81,1123.18 893.81,1139.62 894.91,1141.72 894.91,1158.16 896.56,1158.16 896.56,1141.72 897.66,1139.62 897.66,1123.18 912.89,1123.18 912.89,1139.62 913.99,1141.72 913.99,1158.16 918.65,1158.16 918.65,1141.72 919.75,1139.62 919.75,1123.18 927.99,1123.18 927.99,1139.62 929.09,1141.72 929.09,1158.16 933.18,1158.16 933.18,1141.72 934.28,1139.62 934.28,1123.18 940.35,1123.18 940.35,1139.62 941.45,1141.72 941.45,1158.16 944.22,1158.16 944.22,1141.72 945.32,1139.62 945.32,1123.18 951.81,1123.18 951.81,1139.62 952.91,1141.72 952.91,1158.16 954.87,1158.16 954.87,1141.72 955.97,1139.62 955.97,1123.18 960.27,1123.18 960.27,1139.62 961.37,1141.72 961.37,1158.16 965.03,1158.16 965.03,1141.72 966.13,1139.62 966.13,1123.18 970.59,1123.18 970.59,1139.62 971.69,1141.72 971.69,1158.16 973.33,1158.16 973.33,1141.72 974.43,1139.62 974.43,1123.18 977.86,1123.18 977.86,1139.62 978.96,1141.72 978.96,1158.16 983.48,1158.16 983.48,1141.72 984.58,1139.62 984.58,1123.18 997.88,1123.18 997.88,1139.62 998.98,1141.72 998.98,1158.16 1001.45,1158.16 1001.45,1141.72 1002.55,1139.62 1002.55,1123.18 1019.33,1123.18 1019.33,1139.62 1020.43,1141.72 1020.43,1158.16 1023.61,1158.16 1023.61,1141.72 1024.71,1139.62 1024.71,1123.18 1035.95,1123.18 1035.95,1139.62 1037.05,1141.72 1037.05,1158.16 1038.76,1158.16 1038.76,1141.72 1039.86,1139.62 1039.86,1123.18 1049.36,1123.18 1049.36,1139.62 1050.46,1141.72 1050.46,1158.16 1055.96,1158.16 1055.96,1141.72 1057.06,1139.62 1057.06,1123.18 1073.45,1123.18 1073.45,1139.62 1074.55,1141.72 1074.55,1158.16 1075.95,1158.16 1075.95,1141.72 1077.05,1139.62 1077.05,1123.18 1085.45,1123.18 1085.45,1139.62 1086.55,1141.72 1086.55,1158.16 1089.45,1158.16 1089.45,1141.72 1090.55,1139.62 1090.55,1123.18 1157.95,1123.18 1157.95,1106.74 1159.05,1104.64 1159.05,1088.2 1161.45,1088.2 1161.45,1104.64 1162.55,1106.74 1162.55,1123.18 1386.45,1123.18 1386.45,1106.74 1387.55,1104.64 1387.55,1088.2 1389.45,1088.2 1389.45,1104.64 1390.55,1106.74 1390.55,1123.18 1396.45,1123.18 1396.45,1106.74 1397.55,1104.64 1397.55,1088.2 1399.45,1088.2 1399.45,1104.64 1400.55,1106.74 1400.55,1123.18 1411.45,1123.18 1411.45,1106.74 1412.55,1104.64 1412.55,1088.2 1414.95,1088.2 1414.95,1104.64 1416.05,1106.74 1416.05,1123.18 1421.45,1123.18 1421.45,1106.74 1422.55,1104.64 1422.55,1088.2 1426.45,1088.2 1426.45,1104.64 1427.55,1106.74 1427.55,1123.18 1480,1123.18" stroke="#3fb8f2" stroke-width="1" fill="none" stroke-linejoin="miter" shape-rendering="crispEdges"/><polyline points="657,1228.13 657.95,1228.13 657.95,1211.69 659.05,1209.59 659.05,1193.15 659.45,1193.15 659.45,1209.59 660.55,1211.69 660.55,1228.13 661.45,1228.13 661.45,1211.69 662.55,1209.59 662.55,1193.15 665.45,1193.15 665.45,1209.59 666.55,1211.69 666.55,1228.13 668.45,1228.13 668.45,1211.69 669.55,1209.59 669.55,1193.15 689.45,1193.15 689.45,1209.59 690.55,1211.69 690.55,1228.13 695.45,1228.13 695.45,1211.69 696.55,1209.59 696.55,1193.15 711.45,1193.15 711.45,1209.59 712.55,1211.69 712.55,1228.13 749.45,1228.13 749.45,1244.57 750.55,1246.67 750.55,1263.11 758.95,1263.11 758.95,1246.67 760.05,1244.57 760.05,1228.13 827.45,1228.13 827.45,1211.69 828.55,1209.59 828.55,1193.15 845.95,1193.15 845.95,1209.59 847.05,1211.69 847.05,1228.13 849.45,1228.13 849.45,1211.69 850.55,1209.59 850.55,1193.15 854.45,1193.15 854.45,1209.59 855.55,1211.69 855.55,1228.13 862.45,1228.13 862.45,1211.69 863.55,1209.59 863.55,1193.15 903.95,1193.15 903.95,1209.59 905.05,1211.69 905.05,1228.13 907.45,1228.13 907.45,1211.69 908.55,1209.59 908.55,1193.15 925.95,1193.15 925.95,1209.59 927.05,1211.69 927.05,1228.13 929.45,1228.13 929.45,1211.69 930.55,1209.59 930.55,1193.15 943.95,1193.15 943.95,1209.59 945.05,1211.69 945.05,1228.13 946.45,1228.13 946.45,1211.69 947.55,1209.59 947.55,1193.15 971.95,1193.15 971.95,1209.59 973.05,1211.69 973.05,1228.13 974.45,1228.13 974.45,1211.69 975.55,1209.59 975.55,1193.15 993.95,1193.15 993.95,1209.59 995.05,1211.69 995.05,1228.13 996.45,1228.13 996.45,1211.69 997.55,1209.59 997.55,1193.15 1035.95,1193.15 1035.95,1209.59 1037.05,1211.69 1037.05,1228.13 1038.45,1228.13 1038.45,1211.69 1039.55,1209.59 1039.55,1193.15 1051.45,1193.15 1051.45,1209.59 1052.55,1211.69 1052.55,1228.13 1054.45,1228.13 1054.45,1211.69 1055.55,1209.59 1055.55,1193.15 1058.45,1193.15 1058.45,1209.59 1059.55,1211.69 1059.55,1228.13 1062.45,1228.13 1062.45,1211.69 1063.55,1209.59 1063.55,1193.15 1071.45,1193.15 1071.45,1209.59 1072.55,1211.69 1072.55,1228.13 1079.45,1228.13 1079.45,1211.69 1080.55,1209.59 1080.55,1193.15 1084.45,1193.15 1084.45,1209.59 1085.55,1211.69 1085.55,1228.13 1095.45,1228.13 1095.45,1211.69 1096.55,1209.59 1096.55,1193.15 1139.45,1193.15 1139.45,1209.59 1140.55,1211.69 1140.55,1228.13 1142.95,1228.13 1142.95,1211.69 1144.05,1209.59 1144.05,1193.15 1174.45,1193.15 1174.45,1176.7 1175.55,1174.61 1175.55,1158.16 1177.45,1158.16 1177.45,1174.61 1178.55,1176.7 1178.55,1193.15 1184.06,1193.15 1184.06,1176.7 1185.16,1174.61 1185.16,1158.16 1189.99,1158.16 1189.99,1174.61 1191.09,1176.7 1191.09,1193.15 1199.76,1193.15 1199.76,1176.7 1200.86,1174.61 1200.86,1158.16 1204.42,1158.16 1204.42,1174.61 1205.52,1176.7 1205.52,1193.15 1212.82,1193.15 1212.82,1176.7 1213.92,1174.61 1213.92,1158.16 1215.88,1158.16 1215.88,1174.61 1216.98,1176.7 1216.98,1193.15 1229.21,1193.15 1229.21,1176.7 1230.31,1174.61 1230.31,1158.16 1231.76,1158.16 1231.76,1174.61 1232.86,1176.7 1232.86,1193.15 1235.31,1193.15 1235.31,1176.7 1236.41,1174.61 1236.41,1158.16 1238.02,1158.16 1238.02,1174.61 1239.12,1176.7 1239.12,1193.15 1244.06,1193.15 1244.06,1176.7 1245.16,1174.61 1245.16,1158.16 1246.67,1158.16 1246.67,1174.61 1247.77,1176.7 1247.77,1193.15 1253.45,1193.15 1253.45,1209.59 1254.55,1211.69 1254.55,1228.13 1256.45,1228.13 1256.45,1211.69 1257.55,1209.59 1257.55,1193.15 1266.68,1193.15 1266.68,1176.7 1267.78,1174.61 1267.78,1158.16 1272.13,1158.16 1272.13,1174.61 1273.23,1176.7 1273.23,1193.15 1281.11,1193.15 1281.11,1176.7 1282.21,1174.61 1282.21,1158.16 1285.85,1158.16 1285.85,1174.61 1286.95,1176.7 1286.95,1193.15 1337.45,1193.15 1337.45,1176.7 1338.55,1174.61 1338.55,1158.16 1342.45,1158.16 1342.45,1174.61 1343.55,1176.7 1343.55,1193.15 1345.45,1193.15 1345.45,1176.7 1346.55,1174.61 1346.55,1158.16 1348.45,1158.16 1348.45,1174.61 1349.55,1176.7 1349.55,1193.15 1410.45,1193.15 1410.45,1176.7 1411.55,1174.61 1411.55,1158.16 1413.45,1158.16 1413.45,1174.61 1414.55,1176.7 1414.55,1193.15 1480,1193.15" stroke="#d6f25a" stroke-width="1" fill="none" stroke-linejoin="miter" shape-rendering="crispEdges"/><polyline points="657,1298.09 657.95,1298.09 657.95,1281.65 659.05,1279.55 659.05,1263.11 698.45,1263.11 698.45,1279.55 699.55,1281.65 699.55,1298.09 710.45,1298.09 710.45,1281.65 711.55,1279.55 711.55,1263.11 845.45,1263.11 845.45,1246.67 846.55,1244.57 846.55,1228.13 849.45,1228.13 849.45,1244.57 850.55,1246.67 850.55,1263.11 852.45,1263.11 852.45,1246.67 853.55,1244.57 853.55,1228.13 866.45,1228.13 866.45,1244.57 867.55,1246.67 867.55,1263.11 870.45,1263.11 870.45,1246.67 871.55,1244.57 871.55,1228.13 919.45,1228.13 919.45,1244.57 920.55,1246.67 920.55,1263.11 923.45,1263.11 923.45,1246.67 924.55,1244.57 924.55,1228.13 942.95,1228.13 942.95,1244.57 944.05,1246.67 944.05,1263.11 945.95,1263.11 945.95,1246.67 947.05,1244.57 947.05,1228.13 1032.45,1228.13 1032.45,1244.57 1033.55,1246.67 1033.55,1263.11 1036.45,1263.11 1036.45,1246.67 1037.55,1244.57 1037.55,1228.13 1055.45,1228.13 1055.45,1244.57 1056.55,1246.67 1056.55,1263.11 1058.45,1263.11 1058.45,1246.67 1059.55,1244.57 1059.55,1228.13 1069.95,1228.13 1069.95,1244.57 1071.05,1246.67 1071.05,1263.11 1073.45,1263.11 1073.45,1246.67 1074.55,1244.57 1074.55,1228.13 1113.45,1228.13 1113.45,1211.69 1114.55,1209.59 1114.55,1193.15 1121.45,1193.15 1121.45,1209.59 1122.55,1211.69 1122.55,1228.13 1136.45,1228.13 1136.45,1211.69 1137.55,1209.59 1137.55,1193.15 1143.45,1193.15 1143.45,1209.59 1144.55,1211.69 1144.55,1228.13 1152.45,1228.13 1152.45,1211.69 1153.55,1209.59 1153.55,1193.15 1155.95,1193.15 1155.95,1209.59 1157.05,1211.69 1157.05,1228.13 1163.95,1228.13 1163.95,1211.69 1165.05,1209.59 1165.05,1193.15 1167.45,1193.15 1167.45,1209.59 1168.55,1211.69 1168.55,1228.13 1269.45,1228.13 1269.45,1211.69 1270.55,1209.59 1270.55,1193.15 1273.45,1193.15 1273.45,1209.59 1274.55,1211.69 1274.55,1228.13 1279.95,1228.13 1279.95,1211.69 1281.05,1209.59 1281.05,1193.15 1283.45,1193.15 1283.45,1209.59 1284.55,1211.69 1284.55,1228.13 1290.95,1228.13 1290.95,1211.69 1292.05,1209.59 1292.05,1193.15 1301.45,1193.15 1301.45,1209.59 1302.55,1211.69 1302.55,1228.13 1304.45,1228.13 1304.45,1211.69 1305.55,1209.59 1305.55,1193.15 1320.45,1193.15 1320.45,1209.59 1321.55,1211.69 1321.55,1228.13 1325.45,1228.13 1325.45,1211.69 1326.55,1209.59 1326.55,1193.15 1339.45,1193.15 1339.45,1209.59 1340.55,1211.69 1340.55,1228.13 1399.45,1228.13 1399.45,1211.69 1400.55,1209.59 1400.55,1193.15 1403.45,1193.15 1403.45,1209.59 1404.55,1211.69 1404.55,1228.13 1411.45,1228.13 1411.45,1211.69 1412.55,1209.59 1412.55,1193.15 1414.45,1193.15 1414.45,1209.59 1415.55,1211.69 1415.55,1228.13 1417.45,1228.13 1417.45,1211.69 1418.55,1209.59 1418.55,1193.15 1423.45,1193.15 1423.45,1209.59 1424.55,1211.69 1424.55,1228.13 1427.45,1228.13 1427.45,1211.69 1428.55,1209.59 1428.55,1193.15 1434.45,1193.15 1434.45,1209.59 1435.55,1211.69 1435.55,1228.13 1480,1228.13" stroke="#1686b8" stroke-width="1" fill="none" stroke-linejoin="miter" shape-rendering="crispEdges"/><polyline points="657,1298.09 661.95,1298.09 661.95,1314.53 663.05,1316.63 663.05,1333.07 665.95,1333.07 665.95,1316.63 667.05,1314.53 667.05,1298.09 671.45,1298.09 671.45,1314.53 672.55,1316.63 672.55,1333.07 698.45,1333.07 698.45,1316.63 699.55,1314.53 699.55,1298.09 702.95,1298.09 702.95,1314.53 704.05,1316.63 704.05,1333.07 712.95,1333.07 712.95,1316.63 714.05,1314.53 714.05,1298.09 716.45,1298.09 716.45,1314.53 717.55,1316.63 717.55,1333.07 725.45,1333.07 725.45,1316.63 726.55,1314.53 726.55,1298.09 730.45,1298.09 730.45,1314.53 731.55,1316.63 731.55,1333.07 732.95,1333.07 732.95,1316.63 734.05,1314.53 734.05,1298.09 746.45,1298.09 746.45,1314.53 747.55,1316.63 747.55,1333.07 756.45,1333.07 756.45,1316.63 757.55,1314.53 757.55,1298.09 765.45,1298.09 765.45,1314.53 766.55,1316.63 766.55,1333.07 777.45,1333.07 777.45,1316.63 778.55,1314.53 778.55,1298.09 799.45,1298.09 799.45,1314.53 800.55,1316.63 800.55,1333.07 808.45,1333.07 808.45,1316.63 809.55,1314.53 809.55,1298.09 859.95,1298.09 859.95,1281.65 861.05,1279.55 861.05,1263.11 864.45,1263.11 864.45,1279.55 865.55,1281.65 865.55,1298.09 878.95,1298.09 878.95,1281.65 880.05,1279.55 880.05,1263.11 882.45,1263.11 882.45,1279.55 883.55,1281.65 883.55,1298.09 912.45,1298.09 912.45,1281.65 913.55,1279.55 913.55,1263.11 916.45,1263.11 916.45,1279.55 917.55,1281.65 917.55,1298.09 933.45,1298.09 933.45,1281.65 934.55,1279.55 934.55,1263.11 939.45,1263.11 939.45,1279.55 940.55,1281.65 940.55,1298.09 1082.45,1298.09 1082.45,1281.65 1083.55,1279.55 1083.55,1263.11 1091.45,1263.11 1091.45,1279.55 1092.55,1281.65 1092.55,1298.09 1103.95,1298.09 1103.95,1281.65 1105.05,1279.55 1105.05,1263.11 1136.45,1263.11 1136.45,1279.55 1137.55,1281.65 1137.55,1298.09 1147.45,1298.09 1147.45,1281.65 1148.55,1279.55 1148.55,1263.11 1196.45,1263.11 1196.45,1279.55 1197.55,1281.65 1197.55,1298.09 1200.95,1298.09 1200.95,1281.65 1202.05,1279.55 1202.05,1263.11 1219.95,1263.11 1219.95,1279.55 1221.05,1281.65 1221.05,1298.09 1223.45,1298.09 1223.45,1281.65 1224.55,1279.55 1224.55,1263.11 1226.95,1263.11 1226.95,1279.55 1228.05,1281.65 1228.05,1298.09 1234.45,1298.09 1234.45,1281.65 1235.55,1279.55 1235.55,1263.11 1242.45,1263.11 1242.45,1279.55 1243.55,1281.65 1243.55,1298.09 1257.45,1298.09 1257.45,1281.65 1258.55,1279.55 1258.55,1263.11 1384.95,1263.11 1384.95,1279.55 1386.05,1281.65 1386.05,1298.09 1392.45,1298.09 1392.45,1281.65 1393.55,1279.55 1393.55,1263.11 1480,1263.11" stroke="#8a14ac" stroke-width="1" fill="none" stroke-linejoin="miter" shape-rendering="crispEdges"/><polyline points="657,1333.07 660.45,1333.07 660.45,1349.51 661.55,1351.61 661.55,1368.05 667.95,1368.05 667.95,1351.61 669.05,1349.51 669.05,1333.07 680.45,1333.07 680.45,1349.51 681.55,1351.61 681.55,1368.05 691.45,1368.05 691.45,1351.61 692.55,1349.51 692.55,1333.07 695.45,1333.07 695.45,1349.51 696.55,1351.61 696.55,1368.05 724.95,1368.05 724.95,1351.61 726.05,1349.51 726.05,1333.07 728.45,1333.07 728.45,1349.51 729.55,1351.61 729.55,1368.05 758.95,1368.05 758.95,1351.61 760.05,1349.51 760.05,1333.07 762.45,1333.07 762.45,1349.51 763.55,1351.61 763.55,1368.05 773.95,1368.05 773.95,1351.61 775.05,1349.51 775.05,1333.07 777.45,1333.07 777.45,1349.51 778.55,1351.61 778.55,1368.05 786.45,1368.05 786.45,1351.61 787.55,1349.51 787.55,1333.07 791.45,1333.07 791.45,1349.51 792.55,1351.61 792.55,1368.05 795.95,1368.05 795.95,1351.61 797.05,1349.51 797.05,1333.07 799.45,1333.07 799.45,1349.51 800.55,1351.61 800.55,1368.05 811.45,1368.05 811.45,1351.61 812.55,1349.51 812.55,1333.07 829.45,1333.07 829.45,1349.51 830.55,1351.61 830.55,1368.05 841.45,1368.05 841.45,1351.61 842.55,1349.51 842.55,1333.07 1082.45,1333.07 1082.45,1316.63 1083.55,1314.53 1083.55,1298.09 1085.45,1298.09 1085.45,1314.53 1086.55,1316.63 1086.55,1333.07 1112.45,1333.07 1112.45,1316.63 1113.55,1314.53 1113.55,1298.09 1115.45,1298.09 1115.45,1314.53 1116.55,1316.63 1116.55,1333.07 1130.45,1333.07 1130.45,1316.63 1131.55,1314.53 1131.55,1298.09 1134.45,1298.09 1134.45,1314.53 1135.55,1316.63 1135.55,1333.07 1152.45,1333.07 1152.45,1316.63 1153.55,1314.53 1153.55,1298.09 1161.45,1298.09 1161.45,1314.53 1162.55,1316.63 1162.55,1333.07 1167.45,1333.07 1167.45,1316.63 1168.55,1314.53 1168.55,1298.09 1176.45,1298.09 1176.45,1314.53 1177.55,1316.63 1177.55,1333.07 1201.45,1333.07 1201.45,1316.63 1202.55,1314.53 1202.55,1298.09 1208.45,1298.09 1208.45,1314.53 1209.55,1316.63 1209.55,1333.07 1259.95,1333.07 1259.95,1316.63 1261.05,1314.53 1261.05,1298.09 1265.45,1298.09 1265.45,1314.53 1266.55,1316.63 1266.55,1333.07 1269.45,1333.07 1269.45,1316.63 1270.55,1314.53 1270.55,1298.09 1272.45,1298.09 1272.45,1314.53 1273.55,1316.63 1273.55,1333.07 1275.45,1333.07 1275.45,1316.63 1276.55,1314.53 1276.55,1298.09 1284.45,1298.09 1284.45,1314.53 1285.55,1316.63 1285.55,1333.07 1299.45,1333.07 1299.45,1316.63 1300.55,1314.53 1300.55,1298.09 1302.95,1298.09 1302.95,1314.53 1304.05,1316.63 1304.05,1333.07 1310.45,1333.07 1310.45,1316.63 1311.55,1314.53 1311.55,1298.09 1314.45,1298.09 1314.45,1314.53 1315.55,1316.63 1315.55,1333.07 1320.45,1333.07 1320.45,1316.63 1321.55,1314.53 1321.55,1298.09 1328.45,1298.09 1328.45,1314.53 1329.55,1316.63 1329.55,1333.07 1332.95,1333.07 1332.95,1316.63 1334.05,1314.53 1334.05,1298.09 1335.45,1298.09 1335.45,1314.53 1336.55,1316.63 1336.55,1333.07 1395.95,1333.07 1395.95,1316.63 1397.05,1314.53 1397.05,1298.09 1402.45,1298.09 1402.45,1314.53 1403.55,1316.63 1403.55,1333.07 1407.95,1333.07 1407.95,1316.63 1409.05,1314.53 1409.05,1298.09 1410.95,1298.09 1410.95,1314.53 1412.05,1316.63 1412.05,1333.07 1417.95,1333.07 1417.95,1316.63 1419.05,1314.53 1419.05,1298.09 1422.45,1298.09 1422.45,1314.53 1423.55,1316.63 1423.55,1333.07 1428.95,1333.07 1428.95,1316.63 1430.05,1314.53 1430.05,1298.09 1434.45,1298.09 1434.45,1314.53 1435.55,1316.63 1435.55,1333.07 1471.45,1333.07 1471.45,1316.63 1472.55,1314.53 1472.55,1298.09 1475.95,1298.09 1475.95,1314.53 1477.05,1316.63 1477.05,1333.07 1480,1333.07" stroke="#b87808" stroke-width="1" fill="none" stroke-linejoin="miter" shape-rendering="crispEdges"/><polyline points="657,1368.05 661.95,1368.05 661.95,1384.5 663.05,1386.59 663.05,1403.04 665.95,1403.04 665.95,1386.59 667.05,1384.5 667.05,1368.05 680.95,1368.05 680.95,1384.5 682.05,1386.59 682.05,1403.04 686.45,1403.04 686.45,1386.59 687.55,1384.5 687.55,1368.05 691.95,1368.05 691.95,1384.5 693.05,1386.59 693.05,1403.04 697.45,1403.04 697.45,1386.59 698.55,1384.5 698.55,1368.05 704.45,1368.05 704.45,1384.5 705.55,1386.59 705.55,1403.04 724.45,1403.04 724.45,1386.59 725.55,1384.5 725.55,1368.05 728.95,1368.05 728.95,1384.5 730.05,1386.59 730.05,1403.04 827.45,1403.04 827.45,1386.59 828.55,1384.5 828.55,1368.05 830.45,1368.05 830.45,1384.5 831.55,1386.59 831.55,1403.04 834.45,1403.04 834.45,1386.59 835.55,1384.5 835.55,1368.05 870.95,1368.05 870.95,1384.5 872.05,1386.59 872.05,1403.04 875.45,1403.04 875.45,1386.59 876.55,1384.5 876.55,1368.05 900.95,1368.05 900.95,1384.5 902.05,1386.59 902.05,1403.04 904.95,1403.04 904.95,1386.59 906.05,1384.5 906.05,1368.05 1033.45,1368.05 1033.45,1384.5 1034.55,1386.59 1034.55,1403.04 1036.45,1403.04 1036.45,1386.59 1037.55,1384.5 1037.55,1368.05 1112.45,1368.05 1112.45,1351.61 1113.55,1349.51 1113.55,1333.07 1115.45,1333.07 1115.45,1349.51 1116.55,1351.61 1116.55,1368.05 1136.95,1368.05 1136.95,1384.5 1138.05,1386.59 1138.05,1403.04 1141.45,1403.04 1141.45,1386.59 1142.55,1384.5 1142.55,1368.05 1156.45,1368.05 1156.45,1351.61 1157.55,1349.51 1157.55,1333.07 1161.45,1333.07 1161.45,1349.51 1162.55,1351.61 1162.55,1368.05 1260.45,1368.05 1260.45,1351.61 1261.55,1349.51 1261.55,1333.07 1264.95,1333.07 1264.95,1349.51 1266.05,1351.61 1266.05,1368.05 1269.95,1368.05 1269.95,1351.61 1271.05,1349.51 1271.05,1333.07 1272.45,1333.07 1272.45,1349.51 1273.55,1351.61 1273.55,1368.05 1291.95,1368.05 1291.95,1351.61 1293.05,1349.51 1293.05,1333.07 1296.45,1333.07 1296.45,1349.51 1297.55,1351.61 1297.55,1368.05 1310.95,1368.05 1310.95,1351.61 1312.05,1349.51 1312.05,1333.07 1314.95,1333.07 1314.95,1349.51 1316.05,1351.61 1316.05,1368.05 1320.45,1368.05 1320.45,1351.61 1321.55,1349.51 1321.55,1333.07 1324.45,1333.07 1324.45,1349.51 1325.55,1351.61 1325.55,1368.05 1396.45,1368.05 1396.45,1351.61 1397.55,1349.51 1397.55,1333.07 1399.45,1333.07 1399.45,1349.51 1400.55,1351.61 1400.55,1368.05 1472.45,1368.05 1472.45,1351.61 1473.55,1349.51 1473.55,1333.07 1476.45,1333.07 1476.45,1349.51 1477.55,1351.61 1477.55,1368.05 1480,1368.05" stroke="#f2c408" stroke-width="1" fill="none" stroke-linejoin="miter" shape-rendering="crispEdges"/><polyline points="657,1438.02 713.95,1438.02 713.95,1454.46 715.05,1456.56 715.05,1473 717.95,1473 717.95,1456.56 719.05,1454.46 719.05,1438.02 744.95,1438.02 744.95,1454.46 746.05,1456.56 746.05,1473 748.45,1473 748.45,1456.56 749.55,1454.46 749.55,1438.02 845.45,1438.02 845.45,1421.58 846.55,1419.48 846.55,1403.04 849.45,1403.04 849.45,1419.48 850.55,1421.58 850.55,1438.02 875.95,1438.02 875.95,1421.58 877.05,1419.48 877.05,1403.04 881.95,1403.04 881.95,1419.48 883.05,1421.58 883.05,1438.02 1103.45,1438.02 1103.45,1421.58 1104.55,1419.48 1104.55,1403.04 1117.45,1403.04 1117.45,1419.48 1118.55,1421.58 1118.55,1438.02 1130.45,1438.02 1130.45,1421.58 1131.55,1419.48 1131.55,1403.04 1136.45,1403.04 1136.45,1419.48 1137.55,1421.58 1137.55,1438.02 1148.95,1438.02 1148.95,1421.58 1150.05,1419.48 1150.05,1403.04 1153.45,1403.04 1153.45,1419.48 1154.55,1421.58 1154.55,1438.02 1157.45,1438.02 1157.45,1421.58 1158.55,1419.48 1158.55,1403.04 1162.45,1403.04 1162.45,1419.48 1163.55,1421.58 1163.55,1438.02 1176.45,1438.02 1176.45,1421.58 1177.55,1419.48 1177.55,1403.04 1180.45,1403.04 1180.45,1419.48 1181.55,1421.58 1181.55,1438.02 1183.95,1438.02 1183.95,1421.58 1185.05,1419.48 1185.05,1403.04 1187.45,1403.04 1187.45,1419.48 1188.55,1421.58 1188.55,1438.02 1190.45,1438.02 1190.45,1421.58 1191.55,1419.48 1191.55,1403.04 1193.45,1403.04 1193.45,1419.48 1194.55,1421.58 1194.55,1438.02 1200.95,1438.02 1200.95,1421.58 1202.05,1419.48 1202.05,1403.04 1204.95,1403.04 1204.95,1419.48 1206.05,1421.58 1206.05,1438.02 1251.95,1438.02 1251.95,1421.58 1253.05,1419.48 1253.05,1403.04 1255.45,1403.04 1255.45,1419.48 1256.55,1421.58 1256.55,1438.02 1259.45,1438.02 1259.45,1421.58 1260.55,1419.48 1260.55,1403.04 1264.45,1403.04 1264.45,1419.48 1265.55,1421.58 1265.55,1438.02 1269.95,1438.02 1269.95,1421.58 1271.05,1419.48 1271.05,1403.04 1272.45,1403.04 1272.45,1419.48 1273.55,1421.58 1273.55,1438.02 1279.95,1438.02 1279.95,1421.58 1281.05,1419.48 1281.05,1403.04 1283.45,1403.04 1283.45,1419.48 1284.55,1421.58 1284.55,1438.02 1291.45,1438.02 1291.45,1421.58 1292.55,1419.48 1292.55,1403.04 1301.45,1403.04 1301.45,1419.48 1302.55,1421.58 1302.55,1438.02 1306.45,1438.02 1306.45,1421.58 1307.55,1419.48 1307.55,1403.04 1316.45,1403.04 1316.45,1419.48 1317.55,1421.58 1317.55,1438.02 1320.45,1438.02 1320.45,1421.58 1321.55,1419.48 1321.55,1403.04 1324.45,1403.04 1324.45,1419.48 1325.55,1421.58 1325.55,1438.02 1332.95,1438.02 1332.95,1421.58 1334.05,1419.48 1334.05,1403.04 1334.95,1403.04 1334.95,1419.48 1336.05,1421.58 1336.05,1438.02 1348.45,1438.02 1348.45,1421.58 1349.55,1419.48 1349.55,1403.04 1350.45,1403.04 1350.45,1419.48 1351.55,1421.58 1351.55,1438.02 1355.45,1438.02 1355.45,1421.58 1356.55,1419.48 1356.55,1403.04 1358.95,1403.04 1358.95,1419.48 1360.05,1421.58 1360.05,1438.02 1369.95,1438.02 1369.95,1421.58 1371.05,1419.48 1371.05,1403.04 1376.45,1403.04 1376.45,1419.48 1377.55,1421.58 1377.55,1438.02 1389.95,1438.02 1389.95,1421.58 1391.05,1419.48 1391.05,1403.04 1392.95,1403.04 1392.95,1419.48 1394.05,1421.58 1394.05,1438.02 1395.95,1438.02 1395.95,1421.58 1397.05,1419.48 1397.05,1403.04 1402.45,1403.04 1402.45,1419.48 1403.55,1421.58 1403.55,1438.02 1408.95,1438.02 1408.95,1421.58 1410.05,1419.48 1410.05,1403.04 1411.45,1403.04 1411.45,1419.48 1412.55,1421.58 1412.55,1438.02 1414.45,1438.02 1414.45,1421.58 1415.55,1419.48 1415.55,1403.04 1422.45,1403.04 1422.45,1419.48 1423.55,1421.58 1423.55,1438.02 1428.95,1438.02 1428.95,1421.58 1430.05,1419.48 1430.05,1403.04 1433.95,1403.04 1433.95,1419.48 1435.05,1421.58 1435.05,1438.02 1449.45,1438.02 1449.45,1421.58 1450.55,1419.48 1450.55,1403.04 1453.45,1403.04 1453.45,1419.48 1454.55,1421.58 1454.55,1438.02 1471.95,1438.02 1471.95,1421.58 1473.05,1419.48 1473.05,1403.04 1475.45,1403.04 1475.45,1419.48 1476.55,1421.58 1476.55,1438.02 1480,1438.02" stroke="#86f208" stroke-width="1" fill="none" stroke-linejoin="miter" shape-rendering="crispEdges"/><path d="M657.2 1034.4v5M711.7 1034.4v5M766.2 1034.4v5M820.7 1034.4v5M875.2 1034.4v5M929.7 1034.4v5M984.2 1034.4v5M1038.7 1034.4v5M1093.2 1034.4v5M1147.7 1034.4v5M1202.2 1034.4v5M1256.7 1034.4v5M1311.2 1034.4v5M1365.7 1034.4v5M1420.2 1034.4v5M1475.2 1034.4v5M1486.2 1034.4v5M657.4 1474.6v5M711.55 1474.6v5M765.7 1474.6v5M819.85 1474.6v5M874 1474.6v5M928.15 1474.6v5M982.3 1474.6v5M1036.45 1474.6v5M1090.6 1474.6v5M1144.75 1474.6v5M1198.9 1474.6v5M1253.05 1474.6v5M1307.2 1474.6v5M1361.35 1474.6v5M1415.5 1474.6v5M1469.65 1474.6v5M1479.6 1474.6v5" stroke="#000" stroke-width="1" fill="none"/></svg>
<span class="t r" style="left:652.6px;top:936.6px;font-size:12.3px;color:#000;">221.00</span>
<span class="t r" style="left:652.6px;top:955.9px;font-size:12.3px;color:#000;">220.00</span>
<span class="t r" style="left:652.6px;top:975.2px;font-size:12.3px;color:#000;">219.00</span>
<span class="t r" style="left:652.6px;top:994.5px;font-size:12.3px;color:#000;">218.00</span>
<span class="t r" style="left:652.6px;top:1013.8px;font-size:12.3px;color:#000;">217.00</span>
<span class="t r" style="left:652.6px;top:1033.1px;font-size:12.3px;color:#000;">216.00</span>
<span class="t l" style="left:1490.2px;top:936.8px;font-size:12.3px;color:#000;">0.01</span>
<span class="t l" style="left:1490.2px;top:1032.4px;font-size:12.3px;color:#000;">0.00</span>
<span class="t c" style="left:656.8px;top:1048.6px;font-size:12.3px;color:#000;">9:22:56</span>
<span class="t c" style="left:711.3px;top:1048.6px;font-size:12.3px;color:#000;">9:23:46</span>
<span class="t c" style="left:765.8px;top:1048.6px;font-size:12.3px;color:#000;">9:24:36</span>
<span class="t c" style="left:820.3px;top:1048.6px;font-size:12.3px;color:#000;">9:25:26</span>
<span class="t c" style="left:874.8px;top:1048.6px;font-size:12.3px;color:#000;">9:26:16</span>
<span class="t c" style="left:929.3px;top:1048.6px;font-size:12.3px;color:#000;">9:27:06</span>
<span class="t c" style="left:983.8px;top:1048.6px;font-size:12.3px;color:#000;">9:27:56</span>
<span class="t c" style="left:1038.3px;top:1048.6px;font-size:12.3px;color:#000;">9:28:46</span>
<span class="t c" style="left:1092.8px;top:1048.6px;font-size:12.3px;color:#000;">9:29:36</span>
<span class="t c" style="left:1147.3px;top:1048.6px;font-size:12.3px;color:#000;">9:30:26</span>
<span class="t c" style="left:1201.8px;top:1048.6px;font-size:12.3px;color:#000;">9:31:16</span>
<span class="t c" style="left:1256.3px;top:1048.6px;font-size:12.3px;color:#000;">9:32:06</span>
<span class="t c" style="left:1310.8px;top:1048.6px;font-size:12.3px;color:#000;">9:32:56</span>
<span class="t c" style="left:1365.3px;top:1048.6px;font-size:12.3px;color:#000;">9:33:46</span>
<span class="t c" style="left:1419.8px;top:1048.6px;font-size:12.3px;color:#000;">9:34:36</span>
<span class="t c" style="left:1485.6px;top:1048.6px;font-size:12.3px;color:#000;">9:35:36</span>
<span class="t c" style="left:601.6px;top:984.6px;font-size:12.4px;color:#000;transform:translate(-50%,-50%) rotate(-90deg)">电压 V</span>
<span class="t c" style="left:1526.6px;top:984px;font-size:12.4px;color:#000;transform:translate(-50%,-50%) rotate(90deg)">电流 A</span>
<div class="a" style="left:1422.4px;top:920.4px;width:19px;height:15.4px;background:#787878;border:1px solid #5a5a5a;border-bottom:0"></div><div class="a" style="left:1443.6px;top:920.4px;width:19px;height:15.4px;background:#b9b9b9;border:1px solid #d8d8d8;border-right-color:#808080;border-bottom:0"></div><div class="a" style="left:1464.8px;top:920.4px;width:19px;height:15.4px;background:#b9b9b9;border:1px solid #d8d8d8;border-right-color:#808080;border-bottom:0"></div><svg style="left:1422.4px;top:920.4px" width="19" height="15.4" viewBox="0 0 19 15"><circle cx="4.2" cy="3.4" r="1.9" fill="#3cf020" opacity=".5"/><rect x="3.2" y="2.4" width="2" height="2" fill="#5cff30"/><path d="M3.9 8.1h12.7M10.3 1.8v12.6" stroke="#000" stroke-width="1.25" fill="none"/><circle cx="10.3" cy="8.1" r="1.35" fill="#787878" stroke="#000" stroke-width=".9"/></svg><svg style="left:1443.6px;top:920.4px" width="19" height="15.4" viewBox="0 0 19 15"><rect x="3.1" y="2.4" width="2.4" height="2.4" fill="#2c6a1c"/><circle cx="12.6" cy="6" r="3.9" fill="#dcdcf6" stroke="#000" stroke-width="1.1"/><path d="M10.4 6h4.4M12.6 3.8v4.4" stroke="#000" stroke-width="1.1"/><path d="M9.6 9.2L5 13.6" stroke="#000" stroke-width="2.4" stroke-linecap="round"/><path d="M9.2 9.8L5.4 13.4" stroke="#ccc" stroke-width=".7" stroke-dasharray=".8 .8"/><path d="M12.2 11.4h4.4l-2.2 2.6z" fill="#000"/></svg><svg style="left:1464.8px;top:920.4px" width="19" height="15.4" viewBox="0 0 19 15"><rect x="3.1" y="2.4" width="2.4" height="2.4" fill="#2c6a1c"/><path d="M8 13.4 L5.4 9.4 Q4.6 8 5.6 7.6 Q6.4 7.4 7.2 8.6 L8 9.6 V4.2 Q8 3 8.9 3 Q9.8 3 9.8 4.2 V3 Q9.8 1.9 10.7 1.9 Q11.6 1.9 11.6 3 V3.8 Q11.6 2.8 12.5 2.8 Q13.4 2.8 13.4 3.8 V5.2 Q13.4 4.4 14.3 4.4 Q15.2 4.4 15.2 5.4 V10 Q15.2 12 14 13.4" fill="none" stroke="#000" stroke-width="1.05" stroke-linejoin="round"/><path d="M9.8 4V7.8M11.6 3.8V7.8M13.4 5V8" stroke="#000" stroke-width=".9"/></svg>
<div class="a" style="left:1559.8px;top:932.6px;width:11.6px;height:11.6px;background:linear-gradient(135deg,#e0e0e0,#fbfbfb);border:1px solid #8e8f8f;box-shadow:inset 0 0 0 1px #f4f4f4"></div><svg style="left:1559.8px;top:932.6px" width="11.6" height="11.6" viewBox="0 0 12 12"><path d="M2.8 5.6 L5 9.4 L9.4 2.4" stroke="#3a4fa8" stroke-width="1.7" fill="none" stroke-linecap="round"/></svg>
<span class="t l" style="left:1577.8px;top:938px;font-size:12.1px;color:#000;">电压</span>
<div class="a" style="left:1637px;top:928px;width:28.6px;height:20.2px;background:#222;border:1px solid #8a8a8a"></div><svg style="left:1637px;top:928px" width="28.6" height="20.2" viewBox="0 0 28.6 17.4" preserveAspectRatio="none"><path d="M1.6 13.6 L9.6 3.6 L18.4 13.6 L27 3.6" stroke="#f01818" stroke-width="1.1" fill="none"/></svg>
<div class="a" style="left:1559.8px;top:957.8px;width:11.6px;height:11.6px;background:linear-gradient(135deg,#e0e0e0,#fbfbfb);border:1px solid #8e8f8f;box-shadow:inset 0 0 0 1px #f4f4f4"></div><svg style="left:1559.8px;top:957.8px" width="11.6" height="11.6" viewBox="0 0 12 12"><path d="M2.8 5.6 L5 9.4 L9.4 2.4" stroke="#3a4fa8" stroke-width="1.7" fill="none" stroke-linecap="round"/></svg>
<span class="t l" style="left:1577.8px;top:963.2px;font-size:12.1px;color:#000;">电流</span>
<div class="a" style="left:1637px;top:953.2px;width:28.6px;height:20.2px;background:#222;border:1px solid #8a8a8a"></div><svg style="left:1637px;top:953.2px" width="28.6" height="20.2" viewBox="0 0 28.6 17.4" preserveAspectRatio="none"><path d="M1.6 13.6 L9.6 3.6 L18.4 13.6 L27 3.6" stroke="#58ee10" stroke-width="1.1" fill="none"/></svg>
<span class="t r" style="left:652.6px;top:1088.8px;font-size:12.3px;color:#000;">30.7</span>
<span class="t r" style="left:652.6px;top:1123.78px;font-size:12.3px;color:#000;">30.6</span>
<span class="t r" style="left:652.6px;top:1158.76px;font-size:12.3px;color:#000;">30.5</span>
<span class="t r" style="left:652.6px;top:1193.74px;font-size:12.3px;color:#000;">30.4</span>
<span class="t r" style="left:652.6px;top:1228.72px;font-size:12.3px;color:#000;">30.3</span>
<span class="t r" style="left:652.6px;top:1263.7px;font-size:12.3px;color:#000;">30.2</span>
<span class="t r" style="left:652.6px;top:1298.68px;font-size:12.3px;color:#000;">30.1</span>
<span class="t r" style="left:652.6px;top:1333.66px;font-size:12.3px;color:#000;">30</span>
<span class="t r" style="left:652.6px;top:1368.64px;font-size:12.3px;color:#000;">29.9</span>
<span class="t r" style="left:652.6px;top:1403.62px;font-size:12.3px;color:#000;">29.8</span>
<span class="t r" style="left:652.6px;top:1438.6px;font-size:12.3px;color:#000;">29.7</span>
<span class="t r" style="left:652.6px;top:1473.58px;font-size:12.3px;color:#000;">29.6</span>
<span class="t l" style="left:1483.4px;top:1089px;font-size:12.3px;color:#000;">1</span>
<span class="t l" style="left:1483.4px;top:1127.46px;font-size:12.3px;color:#000;">0.8</span>
<span class="t l" style="left:1483.4px;top:1165.92px;font-size:12.3px;color:#000;">0.6</span>
<span class="t l" style="left:1483.4px;top:1204.38px;font-size:12.3px;color:#000;">0.4</span>
<span class="t l" style="left:1483.4px;top:1242.84px;font-size:12.3px;color:#000;">0.2</span>
<span class="t l" style="left:1483.4px;top:1281.3px;font-size:12.3px;color:#000;">0</span>
<span class="t l" style="left:1483.4px;top:1319.76px;font-size:12.3px;color:#000;">-0.2</span>
<span class="t l" style="left:1483.4px;top:1358.22px;font-size:12.3px;color:#000;">-0.4</span>
<span class="t l" style="left:1483.4px;top:1396.68px;font-size:12.3px;color:#000;">-0.6</span>
<span class="t l" style="left:1483.4px;top:1435.14px;font-size:12.3px;color:#000;">-0.8</span>
<span class="t l" style="left:1483.4px;top:1473.6px;font-size:12.3px;color:#000;">-1</span>
<span class="t c" style="left:657.2px;top:1488.4px;font-size:12.3px;color:#000;">9:22:55</span>
<span class="t c" style="left:711.35px;top:1488.4px;font-size:12.3px;color:#000;">9:23:45</span>
<span class="t c" style="left:765.5px;top:1488.4px;font-size:12.3px;color:#000;">9:24:35</span>
<span class="t c" style="left:819.65px;top:1488.4px;font-size:12.3px;color:#000;">9:25:25</span>
<span class="t c" style="left:873.8px;top:1488.4px;font-size:12.3px;color:#000;">9:26:15</span>
<span class="t c" style="left:927.95px;top:1488.4px;font-size:12.3px;color:#000;">9:27:05</span>
<span class="t c" style="left:982.1px;top:1488.4px;font-size:12.3px;color:#000;">9:27:55</span>
<span class="t c" style="left:1036.25px;top:1488.4px;font-size:12.3px;color:#000;">9:28:45</span>
<span class="t c" style="left:1090.4px;top:1488.4px;font-size:12.3px;color:#000;">9:29:35</span>
<span class="t c" style="left:1144.55px;top:1488.4px;font-size:12.3px;color:#000;">9:30:25</span>
<span class="t c" style="left:1198.7px;top:1488.4px;font-size:12.3px;color:#000;">9:31:15</span>
<span class="t c" style="left:1252.85px;top:1488.4px;font-size:12.3px;color:#000;">9:32:05</span>
<span class="t c" style="left:1307px;top:1488.4px;font-size:12.3px;color:#000;">9:32:55</span>
<span class="t c" style="left:1361.15px;top:1488.4px;font-size:12.3px;color:#000;">9:33:45</span>
<span class="t c" style="left:1415.3px;top:1488.4px;font-size:12.3px;color:#000;">9:34:35</span>
<span class="t c" style="left:1478.8px;top:1488.4px;font-size:12.3px;color:#000;">9:35:34</span>
<span class="t c" style="left:616.8px;top:1273px;font-size:12.4px;color:#000;transform:translate(-50%,-50%) rotate(-90deg)">温度/环境温度</span>
<span class="t c" style="left:1518px;top:1272.6px;font-size:12.4px;color:#000;transform:translate(-50%,-50%) rotate(90deg)">功率 /环境湿度</span>
<div class="a" style="left:1420.2px;top:1072.4px;width:19.4px;height:15.2px;background:#787878;border:1px solid #5a5a5a;border-bottom:0"></div><div class="a" style="left:1440.9px;top:1072.4px;width:19.4px;height:15.2px;background:#b9b9b9;border:1px solid #d8d8d8;border-right-color:#808080;border-bottom:0"></div><div class="a" style="left:1461.6px;top:1072.4px;width:19.4px;height:15.2px;background:#b9b9b9;border:1px solid #d8d8d8;border-right-color:#808080;border-bottom:0"></div><svg style="left:1420.2px;top:1072.4px" width="19.4" height="15.2" viewBox="0 0 19 15"><circle cx="4.2" cy="3.4" r="1.9" fill="#3cf020" opacity=".5"/><rect x="3.2" y="2.4" width="2" height="2" fill="#5cff30"/><path d="M3.9 8.1h12.7M10.3 1.8v12.6" stroke="#000" stroke-width="1.25" fill="none"/><circle cx="10.3" cy="8.1" r="1.35" fill="#787878" stroke="#000" stroke-width=".9"/></svg><svg style="left:1440.9px;top:1072.4px" width="19.4" height="15.2" viewBox="0 0 19 15"><rect x="3.1" y="2.4" width="2.4" height="2.4" fill="#2c6a1c"/><circle cx="12.6" cy="6" r="3.9" fill="#dcdcf6" stroke="#000" stroke-width="1.1"/><path d="M10.4 6h4.4M12.6 3.8v4.4" stroke="#000" stroke-width="1.1"/><path d="M9.6 9.2L5 13.6" stroke="#000" stroke-width="2.4" stroke-linecap="round"/><path d="M9.2 9.8L5.4 13.4" stroke="#ccc" stroke-width=".7" stroke-dasharray=".8 .8"/><path d="M12.2 11.4h4.4l-2.2 2.6z" fill="#000"/></svg><svg style="left:1461.6px;top:1072.4px" width="19.4" height="15.2" viewBox="0 0 19 15"><rect x="3.1" y="2.4" width="2.4" height="2.4" fill="#2c6a1c"/><path d="M8 13.4 L5.4 9.4 Q4.6 8 5.6 7.6 Q6.4 7.4 7.2 8.6 L8 9.6 V4.2 Q8 3 8.9 3 Q9.8 3 9.8 4.2 V3 Q9.8 1.9 10.7 1.9 Q11.6 1.9 11.6 3 V3.8 Q11.6 2.8 12.5 2.8 Q13.4 2.8 13.4 3.8 V5.2 Q13.4 4.4 14.3 4.4 Q15.2 4.4 15.2 5.4 V10 Q15.2 12 14 13.4" fill="none" stroke="#000" stroke-width="1.05" stroke-linejoin="round"/><path d="M9.8 4V7.8M11.6 3.8V7.8M13.4 5V8" stroke="#000" stroke-width=".9"/></svg>
<div class="a" style="left:1559.8px;top:1084.4px;width:11.6px;height:11.6px;background:linear-gradient(135deg,#e0e0e0,#fbfbfb);border:1px solid #8e8f8f;box-shadow:inset 0 0 0 1px #f4f4f4"></div>
<span class="t l" style="left:1578.4px;top:1089.6px;font-size:12.1px;color:#000;">功率</span>
<div class="a" style="left:1637.2px;top:1080.4px;width:28.6px;height:17.4px;background:#9b9b9b;border:1px solid #c4c4c4"></div><svg style="left:1637.2px;top:1080.4px" width="28.6" height="17.4" viewBox="0 0 28.6 17.4" preserveAspectRatio="none"><path d="M1.6 13.6 L9.6 3.6 L14.3 3.2 L27 12.6" stroke="#f4f4f4" stroke-width="1.6" stroke-dasharray="1.4 1.6" fill="none"/></svg>
<div class="a" style="left:1559.8px;top:1106.4px;width:11.6px;height:11.6px;background:linear-gradient(135deg,#e0e0e0,#fbfbfb);border:1px solid #8e8f8f;box-shadow:inset 0 0 0 1px #f4f4f4"></div>
<span class="t l" style="left:1578.4px;top:1111.6px;font-size:12.1px;color:#000;">环境温度</span>
<div class="a" style="left:1637.2px;top:1102.4px;width:28.6px;height:17.4px;background:#9b9b9b;border:1px solid #c4c4c4"></div><svg style="left:1637.2px;top:1102.4px" width="28.6" height="17.4" viewBox="0 0 28.6 17.4" preserveAspectRatio="none"><path d="M1.6 13.6 L9.6 3.6 L18.4 13.6 L27 3.6" stroke="#f0a0a0" stroke-width="1.1" fill="none"/></svg>
<div class="a" style="left:1559.8px;top:1128.4px;width:11.6px;height:11.6px;background:linear-gradient(135deg,#e0e0e0,#fbfbfb);border:1px solid #8e8f8f;box-shadow:inset 0 0 0 1px #f4f4f4"></div>
<span class="t l" style="left:1578.4px;top:1133.6px;font-size:12.1px;color:#000;">环境湿度</span>
<div class="a" style="left:1637.2px;top:1124.4px;width:28.6px;height:17.4px;background:#9b9b9b;border:1px solid #c4c4c4"></div><svg style="left:1637.2px;top:1124.4px" width="28.6" height="17.4" viewBox="0 0 28.6 17.4" preserveAspectRatio="none"><path d="M1.6 13.6 L9.6 3.6 L18.4 13.6 L27 3.6" stroke="#90f090" stroke-width="1.1" fill="none"/></svg>
<div class="a" style="left:1559.8px;top:1150.4px;width:11.6px;height:11.6px;background:linear-gradient(135deg,#e0e0e0,#fbfbfb);border:1px solid #8e8f8f;box-shadow:inset 0 0 0 1px #f4f4f4"></div><svg style="left:1559.8px;top:1150.4px" width="11.6" height="11.6" viewBox="0 0 12 12"><path d="M2.8 5.6 L5 9.4 L9.4 2.4" stroke="#3a4fa8" stroke-width="1.7" fill="none" stroke-linecap="round"/></svg>
<span class="t l" style="left:1578.4px;top:1155.6px;font-size:12.1px;color:#000;">温度 1</span>
<div class="a" style="left:1637.2px;top:1146.4px;width:28.6px;height:17.4px;background:#222;border:1px solid #8a8a8a"></div><svg style="left:1637.2px;top:1146.4px" width="28.6" height="17.4" viewBox="0 0 28.6 17.4" preserveAspectRatio="none"><path d="M1.6 13.6 L9.6 3.6 L18.4 13.6 L27 3.6" stroke="#3fb8f2" stroke-width="1.1" fill="none"/></svg>
<div class="a" style="left:1559.8px;top:1172.4px;width:11.6px;height:11.6px;background:linear-gradient(135deg,#e0e0e0,#fbfbfb);border:1px solid #8e8f8f;box-shadow:inset 0 0 0 1px #f4f4f4"></div><svg style="left:1559.8px;top:1172.4px" width="11.6" height="11.6" viewBox="0 0 12 12"><path d="M2.8 5.6 L5 9.4 L9.4 2.4" stroke="#3a4fa8" stroke-width="1.7" fill="none" stroke-linecap="round"/></svg>
<span class="t l" style="left:1578.4px;top:1177.6px;font-size:12.1px;color:#000;">温度 2</span>
<div class="a" style="left:1637.2px;top:1168.4px;width:28.6px;height:17.4px;background:#222;border:1px solid #8a8a8a"></div><svg style="left:1637.2px;top:1168.4px" width="28.6" height="17.4" viewBox="0 0 28.6 17.4" preserveAspectRatio="none"><path d="M1.6 13.6 L9.6 3.6 L18.4 13.6 L27 3.6" stroke="#d6f25a" stroke-width="1.1" fill="none"/></svg>
<div class="a" style="left:1559.8px;top:1194.4px;width:11.6px;height:11.6px;background:linear-gradient(135deg,#e0e0e0,#fbfbfb);border:1px solid #8e8f8f;box-shadow:inset 0 0 0 1px #f4f4f4"></div><svg style="left:1559.8px;top:1194.4px" width="11.6" height="11.6" viewBox="0 0 12 12"><path d="M2.8 5.6 L5 9.4 L9.4 2.4" stroke="#3a4fa8" stroke-width="1.7" fill="none" stroke-linecap="round"/></svg>
<span class="t l" style="left:1578.4px;top:1199.6px;font-size:12.1px;color:#000;">温度 3</span>
<div class="a" style="left:1637.2px;top:1190.4px;width:28.6px;height:17.4px;background:#222;border:1px solid #8a8a8a"></div><svg style="left:1637.2px;top:1190.4px" width="28.6" height="17.4" viewBox="0 0 28.6 17.4" preserveAspectRatio="none"><path d="M1.6 13.6 L9.6 3.6 L18.4 13.6 L27 3.6" stroke="#c862f0" stroke-width="1.1" fill="none"/></svg>
<div class="a" style="left:1559.8px;top:1216.4px;width:11.6px;height:11.6px;background:linear-gradient(135deg,#e0e0e0,#fbfbfb);border:1px solid #8e8f8f;box-shadow:inset 0 0 0 1px #f4f4f4"></div><svg style="left:1559.8px;top:1216.4px" width="11.6" height="11.6" viewBox="0 0 12 12"><path d="M2.8 5.6 L5 9.4 L9.4 2.4" stroke="#3a4fa8" stroke-width="1.7" fill="none" stroke-linecap="round"/></svg>
<span class="t l" style="left:1578.4px;top:1221.6px;font-size:12.1px;color:#000;">温度 4</span>
<div class="a" style="left:1637.2px;top:1212.4px;width:28.6px;height:17.4px;background:#222;border:1px solid #8a8a8a"></div><svg style="left:1637.2px;top:1212.4px" width="28.6" height="17.4" viewBox="0 0 28.6 17.4" preserveAspectRatio="none"><path d="M1.6 13.6 L9.6 3.6 L18.4 13.6 L27 3.6" stroke="#f2a212" stroke-width="1.1" fill="none"/></svg>
<div class="a" style="left:1559.8px;top:1238.4px;width:11.6px;height:11.6px;background:linear-gradient(135deg,#e0e0e0,#fbfbfb);border:1px solid #8e8f8f;box-shadow:inset 0 0 0 1px #f4f4f4"></div><svg style="left:1559.8px;top:1238.4px" width="11.6" height="11.6" viewBox="0 0 12 12"><path d="M2.8 5.6 L5 9.4 L9.4 2.4" stroke="#3a4fa8" stroke-width="1.7" fill="none" stroke-linecap="round"/></svg>
<span class="t l" style="left:1578.4px;top:1243.6px;font-size:12.1px;color:#000;">温度 5</span>
<div class="a" style="left:1637.2px;top:1234.4px;width:28.6px;height:17.4px;background:#222;border:1px solid #8a8a8a"></div><svg style="left:1637.2px;top:1234.4px" width="28.6" height="17.4" viewBox="0 0 28.6 17.4" preserveAspectRatio="none"><path d="M1.6 13.6 L9.6 3.6 L18.4 13.6 L27 3.6" stroke="#4a4aec" stroke-width="1.1" fill="none"/></svg>
<div class="a" style="left:1559.8px;top:1260.4px;width:11.6px;height:11.6px;background:linear-gradient(135deg,#e0e0e0,#fbfbfb);border:1px solid #8e8f8f;box-shadow:inset 0 0 0 1px #f4f4f4"></div><svg style="left:1559.8px;top:1260.4px" width="11.6" height="11.6" viewBox="0 0 12 12"><path d="M2.8 5.6 L5 9.4 L9.4 2.4" stroke="#3a4fa8" stroke-width="1.7" fill="none" stroke-linecap="round"/></svg>
<span class="t l" style="left:1578.4px;top:1265.6px;font-size:12.1px;color:#000;">温度 6</span>
<div class="a" style="left:1637.2px;top:1256.4px;width:28.6px;height:17.4px;background:#222;border:1px solid #8a8a8a"></div><svg style="left:1637.2px;top:1256.4px" width="28.6" height="17.4" viewBox="0 0 28.6 17.4" preserveAspectRatio="none"><path d="M1.6 13.6 L9.6 3.6 L18.4 13.6 L27 3.6" stroke="#f2429e" stroke-width="1.1" fill="none"/></svg>
<div class="a" style="left:1559.8px;top:1282.4px;width:11.6px;height:11.6px;background:linear-gradient(135deg,#e0e0e0,#fbfbfb);border:1px solid #8e8f8f;box-shadow:inset 0 0 0 1px #f4f4f4"></div><svg style="left:1559.8px;top:1282.4px" width="11.6" height="11.6" viewBox="0 0 12 12"><path d="M2.8 5.6 L5 9.4 L9.4 2.4" stroke="#3a4fa8" stroke-width="1.7" fill="none" stroke-linecap="round"/></svg>
<span class="t l" style="left:1578.4px;top:1287.6px;font-size:12.1px;color:#000;">温度 7</span>
<div class="a" style="left:1637.2px;top:1278.4px;width:28.6px;height:17.4px;background:#222;border:1px solid #8a8a8a"></div><svg style="left:1637.2px;top:1278.4px" width="28.6" height="17.4" viewBox="0 0 28.6 17.4" preserveAspectRatio="none"><path d="M1.6 13.6 L9.6 3.6 L18.4 13.6 L27 3.6" stroke="#46ece6" stroke-width="1.1" fill="none"/></svg>
<div class="a" style="left:1559.8px;top:1304.4px;width:11.6px;height:11.6px;background:linear-gradient(135deg,#e0e0e0,#fbfbfb);border:1px solid #8e8f8f;box-shadow:inset 0 0 0 1px #f4f4f4"></div><svg style="left:1559.8px;top:1304.4px" width="11.6" height="11.6" viewBox="0 0 12 12"><path d="M2.8 5.6 L5 9.4 L9.4 2.4" stroke="#3a4fa8" stroke-width="1.7" fill="none" stroke-linecap="round"/></svg>
<span class="t l" style="left:1578.4px;top:1309.6px;font-size:12.1px;color:#000;">温度 8</span>
<div class="a" style="left:1637.2px;top:1300.4px;width:28.6px;height:17.4px;background:#222;border:1px solid #8a8a8a"></div><svg style="left:1637.2px;top:1300.4px" width="28.6" height="17.4" viewBox="0 0 28.6 17.4" preserveAspectRatio="none"><path d="M1.6 13.6 L9.6 3.6 L18.4 13.6 L27 3.6" stroke="#a6a6a6" stroke-width="1.1" fill="none"/></svg>
<div class="a" style="left:1559.8px;top:1326.4px;width:11.6px;height:11.6px;background:linear-gradient(135deg,#e0e0e0,#fbfbfb);border:1px solid #8e8f8f;box-shadow:inset 0 0 0 1px #f4f4f4"></div><svg style="left:1559.8px;top:1326.4px" width="11.6" height="11.6" viewBox="0 0 12 12"><path d="M2.8 5.6 L5 9.4 L9.4 2.4" stroke="#3a4fa8" stroke-width="1.7" fill="none" stroke-linecap="round"/></svg>
<span class="t l" style="left:1578.4px;top:1331.6px;font-size:12.1px;color:#000;">温度 9</span>
<div class="a" style="left:1637.2px;top:1322.4px;width:28.6px;height:17.4px;background:#222;border:1px solid #8a8a8a"></div><svg style="left:1637.2px;top:1322.4px" width="28.6" height="17.4" viewBox="0 0 28.6 17.4" preserveAspectRatio="none"><path d="M1.6 13.6 L9.6 3.6 L18.4 13.6 L27 3.6" stroke="#e01212" stroke-width="1.1" fill="none"/></svg>
<div class="a" style="left:1559.8px;top:1348.4px;width:11.6px;height:11.6px;background:linear-gradient(135deg,#e0e0e0,#fbfbfb);border:1px solid #8e8f8f;box-shadow:inset 0 0 0 1px #f4f4f4"></div><svg style="left:1559.8px;top:1348.4px" width="11.6" height="11.6" viewBox="0 0 12 12"><path d="M2.8 5.6 L5 9.4 L9.4 2.4" stroke="#3a4fa8" stroke-width="1.7" fill="none" stroke-linecap="round"/></svg>
<span class="t l" style="left:1578.4px;top:1353.6px;font-size:12.1px;color:#000;">温度 10</span>
<div class="a" style="left:1637.2px;top:1344.4px;width:28.6px;height:17.4px;background:#222;border:1px solid #8a8a8a"></div><svg style="left:1637.2px;top:1344.4px" width="28.6" height="17.4" viewBox="0 0 28.6 17.4" preserveAspectRatio="none"><path d="M1.6 13.6 L9.6 3.6 L18.4 13.6 L27 3.6" stroke="#148a14" stroke-width="1.1" fill="none"/></svg>
<div class="a" style="left:1559.8px;top:1370.4px;width:11.6px;height:11.6px;background:linear-gradient(135deg,#e0e0e0,#fbfbfb);border:1px solid #8e8f8f;box-shadow:inset 0 0 0 1px #f4f4f4"></div><svg style="left:1559.8px;top:1370.4px" width="11.6" height="11.6" viewBox="0 0 12 12"><path d="M2.8 5.6 L5 9.4 L9.4 2.4" stroke="#3a4fa8" stroke-width="1.7" fill="none" stroke-linecap="round"/></svg>
<span class="t l" style="left:1578.4px;top:1375.6px;font-size:12.1px;color:#000;">温度 11</span>
<div class="a" style="left:1637.2px;top:1366.4px;width:28.6px;height:17.4px;background:#222;border:1px solid #8a8a8a"></div><svg style="left:1637.2px;top:1366.4px" width="28.6" height="17.4" viewBox="0 0 28.6 17.4" preserveAspectRatio="none"><path d="M1.6 13.6 L9.6 3.6 L18.4 13.6 L27 3.6" stroke="#1686b8" stroke-width="1.1" fill="none"/></svg>
<div class="a" style="left:1559.8px;top:1392.4px;width:11.6px;height:11.6px;background:linear-gradient(135deg,#e0e0e0,#fbfbfb);border:1px solid #8e8f8f;box-shadow:inset 0 0 0 1px #f4f4f4"></div><svg style="left:1559.8px;top:1392.4px" width="11.6" height="11.6" viewBox="0 0 12 12"><path d="M2.8 5.6 L5 9.4 L9.4 2.4" stroke="#3a4fa8" stroke-width="1.7" fill="none" stroke-linecap="round"/></svg>
<span class="t l" style="left:1578.4px;top:1397.6px;font-size:12.1px;color:#000;">温度 12</span>
<div class="a" style="left:1637.2px;top:1388.4px;width:28.6px;height:17.4px;background:#222;border:1px solid #8a8a8a"></div><svg style="left:1637.2px;top:1388.4px" width="28.6" height="17.4" viewBox="0 0 28.6 17.4" preserveAspectRatio="none"><path d="M1.6 13.6 L9.6 3.6 L18.4 13.6 L27 3.6" stroke="#a8d808" stroke-width="1.1" fill="none"/></svg>
<div class="a" style="left:1559.8px;top:1414.4px;width:11.6px;height:11.6px;background:linear-gradient(135deg,#e0e0e0,#fbfbfb);border:1px solid #8e8f8f;box-shadow:inset 0 0 0 1px #f4f4f4"></div><svg style="left:1559.8px;top:1414.4px" width="11.6" height="11.6" viewBox="0 0 12 12"><path d="M2.8 5.6 L5 9.4 L9.4 2.4" stroke="#3a4fa8" stroke-width="1.7" fill="none" stroke-linecap="round"/></svg>
<span class="t l" style="left:1578.4px;top:1419.6px;font-size:12.1px;color:#000;">温度 13</span>
<div class="a" style="left:1637.2px;top:1410.4px;width:28.6px;height:17.4px;background:#222;border:1px solid #8a8a8a"></div><svg style="left:1637.2px;top:1410.4px" width="28.6" height="17.4" viewBox="0 0 28.6 17.4" preserveAspectRatio="none"><path d="M1.6 13.6 L9.6 3.6 L18.4 13.6 L27 3.6" stroke="#8a14ac" stroke-width="1.1" fill="none"/></svg>
<div class="a" style="left:1559.8px;top:1436.4px;width:11.6px;height:11.6px;background:linear-gradient(135deg,#e0e0e0,#fbfbfb);border:1px solid #8e8f8f;box-shadow:inset 0 0 0 1px #f4f4f4"></div><svg style="left:1559.8px;top:1436.4px" width="11.6" height="11.6" viewBox="0 0 12 12"><path d="M2.8 5.6 L5 9.4 L9.4 2.4" stroke="#3a4fa8" stroke-width="1.7" fill="none" stroke-linecap="round"/></svg>
<span class="t l" style="left:1578.4px;top:1441.6px;font-size:12.1px;color:#000;">温度 14</span>
<div class="a" style="left:1637.2px;top:1432.4px;width:28.6px;height:17.4px;background:#222;border:1px solid #8a8a8a"></div><svg style="left:1637.2px;top:1432.4px" width="28.6" height="17.4" viewBox="0 0 28.6 17.4" preserveAspectRatio="none"><path d="M1.6 13.6 L9.6 3.6 L18.4 13.6 L27 3.6" stroke="#b87808" stroke-width="1.1" fill="none"/></svg>
<div class="a" style="left:1559.8px;top:1458.4px;width:11.6px;height:11.6px;background:linear-gradient(135deg,#e0e0e0,#fbfbfb);border:1px solid #8e8f8f;box-shadow:inset 0 0 0 1px #f4f4f4"></div><svg style="left:1559.8px;top:1458.4px" width="11.6" height="11.6" viewBox="0 0 12 12"><path d="M2.8 5.6 L5 9.4 L9.4 2.4" stroke="#3a4fa8" stroke-width="1.7" fill="none" stroke-linecap="round"/></svg>
<span class="t l" style="left:1578.4px;top:1463.6px;font-size:12.1px;color:#000;">温度 15</span>
<div class="a" style="left:1637.2px;top:1454.4px;width:28.6px;height:17.4px;background:#222;border:1px solid #8a8a8a"></div><svg style="left:1637.2px;top:1454.4px" width="28.6" height="17.4" viewBox="0 0 28.6 17.4" preserveAspectRatio="none"><path d="M1.6 13.6 L9.6 3.6 L18.4 13.6 L27 3.6" stroke="#f2c408" stroke-width="1.1" fill="none"/></svg>
<div class="a" style="left:1559.8px;top:1480.4px;width:11.6px;height:11.6px;background:linear-gradient(135deg,#e0e0e0,#fbfbfb);border:1px solid #8e8f8f;box-shadow:inset 0 0 0 1px #f4f4f4"></div><svg style="left:1559.8px;top:1480.4px" width="11.6" height="11.6" viewBox="0 0 12 12"><path d="M2.8 5.6 L5 9.4 L9.4 2.4" stroke="#3a4fa8" stroke-width="1.7" fill="none" stroke-linecap="round"/></svg>
<span class="t l" style="left:1578.4px;top:1485.6px;font-size:12.1px;color:#000;">温度 16</span>
<div class="a" style="left:1637.2px;top:1476.4px;width:28.6px;height:17.4px;background:#222;border:1px solid #8a8a8a"></div><svg style="left:1637.2px;top:1476.4px" width="28.6" height="17.4" viewBox="0 0 28.6 17.4" preserveAspectRatio="none"><path d="M1.6 13.6 L9.6 3.6 L18.4 13.6 L27 3.6" stroke="#86f208" stroke-width="1.1" fill="none"/></svg>
<div class="a" style="left:581.8px;top:1503.6px;width:79.6px;height:21.6px;background:#fff;border:1px solid #e8e8e8"></div>
<span class="t c" style="left:612.8px;top:1514.4px;font-size:12.4px;color:#000;">温度 16</span>
<div class="a" style="left:644px;top:1505.6px;width:16.4px;height:18.4px;background:linear-gradient(180deg,#f6f6f6,#dedede);border:1px solid #707070;border-radius:2px"></div>
<svg style="left:648.6px;top:1512.8px" width="7" height="4" viewBox="0 0 7 4"><path d="M0 0h7L3.5 4z" fill="#000"/></svg>
<span class="t l" style="left:683px;top:1514.6px;font-size:12.3px;color:#000;">Max :</span>
<span class="t r" style="left:754.4px;top:1514.6px;font-size:12.3px;color:#000;">29.80</span>
<span class="t l" style="left:779px;top:1514.6px;font-size:12.3px;color:#000;">Min :</span>
<span class="t r" style="left:850.4px;top:1514.6px;font-size:12.3px;color:#000;">29.60</span>
<span class="t l" style="left:872px;top:1514.6px;font-size:12.3px;color:#000;">Avg :</span>
<span class="t r" style="left:943.4px;top:1514.6px;font-size:12.3px;color:#000;">29.72</span>
<div class="a" style="left:404.4px;top:1526.4px;width:1275.6px;height:26px;background:#d4d4d4;border-top:1px solid #f2f2f2;box-shadow:0 -1px 0 #8c8c8c"></div>
<div class="a" style="left:577.2px;top:1528px;width:1px;height:23.4px;background:#9a9a9a;box-shadow:1px 0 0 #f4f4f4"></div>
<div class="a" style="left:766.8px;top:1528px;width:1px;height:23.4px;background:#9a9a9a;box-shadow:1px 0 0 #f4f4f4"></div>
<div class="a" style="left:925.4px;top:1528px;width:1px;height:23.4px;background:#9a9a9a;box-shadow:1px 0 0 #f4f4f4"></div>
<svg style="left:407px;top:1529.8px" width="20" height="20" viewBox="0 0 24 24"><defs><linearGradient id="gg1" x1="0" y1="0" x2="1" y2="1"><stop offset="0" stop-color="#98a4d8"/><stop offset=".5" stop-color="#c4c8ea"/><stop offset="1" stop-color="#b0a8d4"/></linearGradient></defs><path fill-rule="evenodd" d="M9.89 4.28L10.04 0.77L13.96 0.77L14.11 4.28L15.96 5.05L18.56 2.67L21.33 5.44L18.95 8.04L19.72 9.89L23.23 10.04L23.23 13.96L19.72 14.11L18.95 15.96L21.33 18.56L18.56 21.33L15.96 18.95L14.11 19.72L13.96 23.23L10.04 23.23L9.89 19.72L8.04 18.95L5.44 21.33L2.67 18.56L5.05 15.96L4.28 14.11L0.77 13.96L0.77 10.04L4.28 9.89L5.05 8.04L2.67 5.44L5.44 2.67L8.04 5.05ZM9.10 12.00a2.90 2.90 0 1 0 5.80 0a2.90 2.90 0 1 0 -5.80 0Z" fill="url(#gg1)" stroke="#8088b8" stroke-width=".9"/><circle cx="12" cy="12" r="5.4" fill="none" stroke="#e4e6f6" stroke-width="1.6" opacity=".8"/></svg>
<span class="t l" style="left:432.6px;top:1540.8px;font-size:12.3px;color:#000;">连接端口:&nbsp; COM28</span>
<span class="t l" style="left:579.4px;top:1540.8px;font-size:12px;color:#000;">采集模式:&nbsp; 低速模式(无线)</span>
<span class="t l" style="left:769.4px;top:1540.8px;font-size:12.4px;color:#000;">扫描速度:&nbsp; 1.0 S</span>
<span class="t l" style="left:929px;top:1540.8px;font-size:12.4px;color:#000;">信道值:&nbsp; CH 15</span>
<div class="a" style="left:404.4px;top:1524.8px;width:173.6px;height:1.2px;background:#000"></div>
<div class="a" style="left:1649.4px;top:1531.4px;width:16.8px;height:16.8px;border-radius:50%;background:linear-gradient(135deg,#9c9c9c 10%,#c8c8c8 45%,#fafafa 80%)"></div>
<div class="a" style="left:1651.2px;top:1533px;width:12.6px;height:12.6px;border-radius:50%;background:radial-gradient(circle at 40% 35%,#b4ff6a 0%,#52e012 45%,#2fae08 100%)"></div>
</div>
</body></html>
